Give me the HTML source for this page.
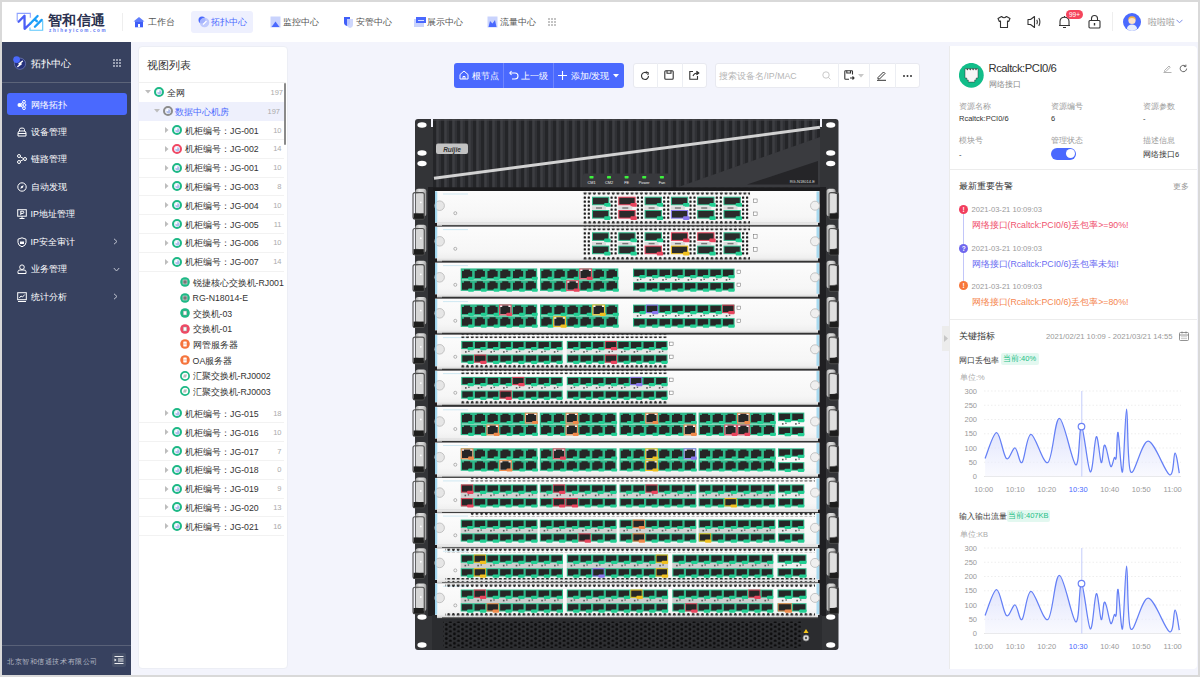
<!DOCTYPE html><html><head><meta charset="utf-8"><style>
*{margin:0;padding:0;box-sizing:border-box}
html,body{width:1200px;height:677px;overflow:hidden;background:#d9d9d9;font-family:"Liberation Sans",sans-serif;color:#333}
.a{position:absolute;white-space:nowrap}
#hdr{position:absolute;left:2px;top:2px;width:1196px;height:40px;background:#fff}
#side{position:absolute;left:2px;top:42px;width:129px;height:633px;background:#37415f}
#main{position:absolute;left:131px;top:42px;width:1067px;height:633px;background:#f3f4fc}
.nav{font-size:8.75px;color:#555;line-height:10px}
.sm{font-size:8.75px;color:#fff;line-height:10px}
.tr{font-size:8.75px;color:#333;line-height:10px}
.cnt{font-size:7.5px;color:#aaa;line-height:9px}
.lbl{font-size:7.5px;color:#999;line-height:9px}
.val{font-size:7.5px;color:#333;line-height:9px}
</style></head><body>
<div id="hdr"></div>
<svg class="a" style="left:14px;top:10px" width="32" height="24" viewBox="14 10 32 24">
<path d="M17.2 21.3V13.4H30.3V17.8" fill="none" stroke="#8ea2ff" stroke-width="1.1"/>
<path d="M30 27.4V30.2H42.7V20.6" fill="none" stroke="#5cc6fb" stroke-width="1.1"/>
<path d="M18.6 21.7L24.5 15.7L24.6 28.8L30.3 23.5" fill="none" stroke="#4b5ef6" stroke-width="2.3" stroke-linejoin="round" stroke-linecap="round"/>
<path d="M30.3 23.5L37.6 16M34.9 26.7L41.7 19.9M35.3 19.8L36.8 21.2" fill="none" stroke="#1c9ff8" stroke-width="2.3" stroke-linecap="round"/>
</svg>
<div class="a" style="left:47.5px;top:12.5px;font-size:14px;line-height:15px;font-weight:bold;color:#2b3250;letter-spacing:0.6px">智和信通</div>
<div class="a" style="left:49px;top:27.5px;font-size:4.6px;line-height:5px;color:#5b75f2;font-weight:bold;letter-spacing:1.6px">zhiheyicom.com</div>
<div class="a" style="left:121.5px;top:13px;width:1px;height:18px;background:#eee"></div>
<div class="a" style="left:191px;top:11px;width:62px;height:22px;background:#eef0fe;border-radius:3px"></div>
<div class="a nav" style="left:147.5px;top:21.8px;transform:translateY(-50%);color:#555">工作台</div>
<svg class="a" style="left:133px;top:16px" width="12" height="12" viewBox="0 0 12 12"><path d="M0.5 5.5L6 1L11.5 5.5Z" fill="#5f7dfb"/><rect x="2" y="5.3" width="8" height="6" fill="#3f5ef8"/><rect x="5" y="8" width="2" height="3.3" fill="#fff"/></svg>
<div class="a nav" style="left:210.5px;top:21.8px;transform:translateY(-50%);color:#4a69fe">拓扑中心</div>
<svg class="a" style="left:198px;top:16px" width="12" height="12" viewBox="0 0 12 12"><circle cx="4" cy="4" r="3.5" fill="#4a69fe"/><circle cx="6.5" cy="6.5" r="4.8" fill="#b7c3fd" opacity="0.85"/><path d="M5 8.5L8.5 5" stroke="#fff" stroke-width="1.2"/></svg>
<div class="a nav" style="left:283px;top:21.8px;transform:translateY(-50%);color:#555">监控中心</div>
<svg class="a" style="left:270px;top:16px" width="11" height="12" viewBox="0 0 11 12"><rect x="0.5" y="0.5" width="10" height="11" fill="#c9d3fd"/><path d="M1.5 11L5.5 5.5L9.5 11Z" fill="#4a69fe"/></svg>
<div class="a nav" style="left:355.5px;top:21.8px;transform:translateY(-50%);color:#555">安管中心</div>
<svg class="a" style="left:343px;top:16px" width="11" height="12" viewBox="0 0 11 12"><path d="M1 1H7V6.5Q7 9 4 10Q1 9 1 6.5Z" fill="#3f5ef8"/><path d="M4 3H10V8.5Q10 11 7 12Q4 11 4 8.5Z" fill="#c9d3fd" opacity="0.9"/></svg>
<div class="a nav" style="left:427px;top:21.8px;transform:translateY(-50%);color:#555">展示中心</div>
<svg class="a" style="left:414px;top:16px" width="12" height="12" viewBox="0 0 12 12"><rect x="0" y="3" width="10" height="8" fill="#c9d3fd"/><rect x="2" y="1" width="10" height="6" fill="#4a69fe"/><path d="M4 4.5H10" stroke="#fff" stroke-width="0.8"/></svg>
<div class="a nav" style="left:500px;top:21.8px;transform:translateY(-50%);color:#555">流量中心</div>
<svg class="a" style="left:487px;top:16px" width="11" height="12" viewBox="0 0 11 12"><rect x="0.5" y="0.5" width="10" height="11" fill="#c9d3fd"/><path d="M1.5 11L3 5L5.5 7.5L8 4L9.5 11Z" fill="#4a69fe"/></svg>
<svg class="a" style="left:548px;top:18px" width="8" height="8" viewBox="0 0 8 8" fill="#c4c4c4"><rect x="0" y="0" width="2" height="2"/><rect x="0" y="3" width="2" height="2"/><rect x="0" y="6" width="2" height="2"/><rect x="3" y="0" width="2" height="2"/><rect x="3" y="3" width="2" height="2"/><rect x="3" y="6" width="2" height="2"/><rect x="6" y="0" width="2" height="2"/><rect x="6" y="3" width="2" height="2"/><rect x="6" y="6" width="2" height="2"/></svg>
<svg class="a" style="left:997px;top:15px" width="14" height="14" viewBox="0 0 14 14" fill="none" stroke="#333" stroke-width="1.1" stroke-linejoin="round">
<path d="M4.5 1.5L1 3.5L2.3 6.5L3.5 6V12.5H10.5V6L11.7 6.5L13 3.5L9.5 1.5Q7 4 4.5 1.5Z"/></svg>
<svg class="a" style="left:1027px;top:15px" width="15" height="14" viewBox="0 0 15 14" fill="none" stroke="#333" stroke-width="1.1" stroke-linejoin="round">
<path d="M1 4.5H3.5L7.5 1.5V12.5L3.5 9.5H1Z"/><path d="M9.8 4.8Q11 7 9.8 9.2M11.8 3Q14 7 11.8 11"/></svg>
<svg class="a" style="left:1058px;top:15px" width="13" height="14" viewBox="0 0 13 14" fill="none" stroke="#333" stroke-width="1.1" stroke-linejoin="round">
<path d="M2 10.5V6.5Q2 2.2 6.5 2.2Q11 2.2 11 6.5V10.5H12M1 10.5H12M5 12.5H8"/><path d="M6.5 1V2.2"/></svg>
<div class="a" style="left:1066px;top:10px;width:17px;height:9px;border-radius:5px;background:#f5455c;color:#fff;font-size:6.5px;line-height:9px;text-align:center">99+</div>
<svg class="a" style="left:1088px;top:14px" width="13" height="15" viewBox="0 0 13 15" fill="none" stroke="#333" stroke-width="1.1">
<rect x="1" y="6.5" width="11" height="7.5" rx="1"/><path d="M3.5 6.5V4.5Q3.5 1.5 6.5 1.5Q9.5 1.5 9.5 4.5V6.5"/><path d="M6.5 9V11.5" stroke-width="1.4"/></svg>
<div class="a" style="left:1112px;top:12px;width:1px;height:19px;background:#eee"></div>
<svg class="a" style="left:1123px;top:13px" width="18" height="18" viewBox="0 0 18 18">
<circle cx="9" cy="9" r="9" fill="#4a69fe"/><circle cx="9" cy="7.5" r="3.6" fill="#fde3c8"/><path d="M5.2 7Q5 3.5 9 3.3Q13 3.5 12.8 7Q12 5 9 5Q6 5 5.2 7Z" fill="#f5b544"/>
<path d="M3.8 15.5Q5 11.5 9 11.5Q13 11.5 14.2 15.5Q12 18 9 18Q6 18 3.8 15.5Z" fill="#e8eefc"/></svg>
<div class="a nav" style="left:1148px;top:22px;transform:translateY(-50%);color:#999">啦啦啦</div>
<svg class="a" style="left:1176px;top:19px" width="7" height="5" viewBox="0 0 7 5"><path d="M0.5 0.8L3.5 3.8L6.5 0.8" fill="none" stroke="#7a8ce8" stroke-width="1"/></svg>
<div id="side"></div>
<svg class="a" style="left:13px;top:56px" width="14" height="14" viewBox="0 0 14 14">
<circle cx="7" cy="7.7" r="5.6" fill="#26317a" stroke="#6b77b3" stroke-width="0.8"/><circle cx="3.6" cy="3.6" r="3.4" fill="#4a69fe"/>
<path d="M9.4 5.2L6 7.9H8.2L4.8 10.5" fill="none" stroke="#fff" stroke-width="1.4" stroke-linejoin="round" stroke-linecap="round"/></svg>
<div class="a " style="left:30.5px;top:62.8px;transform:translateY(-50%);font-size:10px;color:#fff;line-height:11px">拓扑中心</div>
<svg class="a" style="left:112.5px;top:59px" width="8" height="8" viewBox="0 0 8 8" fill="#9aa0b2"><rect x="0" y="0" width="2" height="2"/><rect x="0" y="3" width="2" height="2"/><rect x="0" y="6" width="2" height="2"/><rect x="3" y="0" width="2" height="2"/><rect x="3" y="3" width="2" height="2"/><rect x="3" y="6" width="2" height="2"/><rect x="6" y="0" width="2" height="2"/><rect x="6" y="3" width="2" height="2"/><rect x="6" y="6" width="2" height="2"/></svg>
<div class="a" style="left:2px;top:82px;width:129px;height:1px;background:#5c6479"></div>
<div class="a" style="left:7px;top:93px;width:119.5px;height:22px;background:#4a69fe;border-radius:3px"></div>
<div class="a sm" style="left:30.5px;top:104.5px;transform:translateY(-50%);">网络拓扑</div>
<svg class="a" style="left:16.5px;top:99.5px" width="10" height="10" viewBox="0 0 10 10"><circle cx="2.5" cy="5" r="2" fill="#fff"/><circle cx="7" cy="1.8" r="1.4" fill="none" stroke="#fff" stroke-width="1"/><circle cx="7.5" cy="5" r="1.4" fill="none" stroke="#fff" stroke-width="1"/><circle cx="7" cy="8.2" r="1.4" fill="none" stroke="#fff" stroke-width="1"/><path d="M3 5H6M3.5 4L6 2.5M3.5 6L6 7.5" fill="none" stroke="#fff" stroke-width="1"/></svg>
<div class="a sm" style="left:30.5px;top:131.5px;transform:translateY(-50%);">设备管理</div>
<svg class="a" style="left:16.5px;top:126.5px" width="10" height="10" viewBox="0 0 10 10"><path d="M1 9V6Q1 4 3 4H7Q9 4 9 6V9Z" fill="none" stroke="#fff" stroke-width="1"/><path d="M2.5 4V2.5Q2.5 1 5 1Q7.5 1 7.5 2.5V4" fill="none" stroke="#fff" stroke-width="1"/><path d="M1 6.5H9" fill="none" stroke="#fff" stroke-width="1"/></svg>
<div class="a sm" style="left:30.5px;top:159px;transform:translateY(-50%);">链路管理</div>
<svg class="a" style="left:16.5px;top:154px" width="10" height="10" viewBox="0 0 10 10"><circle cx="2" cy="2" r="1.5" fill="none" stroke="#fff" stroke-width="1"/><circle cx="2" cy="8" r="1.5" fill="none" stroke="#fff" stroke-width="1"/><circle cx="8" cy="5" r="1.5" fill="none" stroke="#fff" stroke-width="1"/><path d="M3.2 2.8L6.6 4.5M3.2 7.2L6.6 5.5" fill="none" stroke="#fff" stroke-width="1"/></svg>
<div class="a sm" style="left:30.5px;top:186.5px;transform:translateY(-50%);">自动发现</div>
<svg class="a" style="left:16.5px;top:181.5px" width="10" height="10" viewBox="0 0 10 10"><circle cx="5" cy="5" r="4.2" fill="none" stroke="#fff" stroke-width="1"/><path d="M3.3 6.7L4.2 4.2L6.7 3.3L5.8 5.8Z" fill="#fff"/></svg>
<div class="a sm" style="left:30.5px;top:214px;transform:translateY(-50%);">IP地址管理</div>
<svg class="a" style="left:16.5px;top:209px" width="10" height="10" viewBox="0 0 10 10"><rect x="0.7" y="0.7" width="8.6" height="6.5" fill="none" stroke="#fff" stroke-width="1"/><path d="M5 7.2V9.5M2.5 9.5H7.5" fill="none" stroke="#fff" stroke-width="1"/><path d="M3.8 2.2H6Q6.8 2.2 6.8 3.3Q6.8 4.4 6 4.4H3.8M3.8 2V6" fill="none" stroke="#fff" stroke-width="1"/></svg>
<div class="a sm" style="left:30.5px;top:241.5px;transform:translateY(-50%);">IP安全审计</div>
<svg class="a" style="left:16.5px;top:236.5px" width="10" height="10" viewBox="0 0 10 10"><path d="M5 0.8L9 2.2V5.5Q9 8.5 5 9.8Q1 8.5 1 5.5V2.2Z" fill="none" stroke="#fff" stroke-width="1"/><path d="M3 4.5H7V7H3Z" fill="#fff"/></svg>
<div class="a sm" style="left:30.5px;top:269px;transform:translateY(-50%);">业务管理</div>
<svg class="a" style="left:16.5px;top:264px" width="10" height="10" viewBox="0 0 10 10"><circle cx="5" cy="3.2" r="2.3" fill="none" stroke="#fff" stroke-width="1"/><path d="M1 9.5V7.5Q1 6 3 6H7Q9 6 9 7.5V9.5Z" fill="none" stroke="#fff" stroke-width="1"/></svg>
<div class="a sm" style="left:30.5px;top:296.5px;transform:translateY(-50%);">统计分析</div>
<svg class="a" style="left:16.5px;top:291.5px" width="10" height="10" viewBox="0 0 10 10"><rect x="0.7" y="0.7" width="8.6" height="7" fill="none" stroke="#fff" stroke-width="1"/><path d="M2.3 6L4 4L5.5 5L7.8 2.5M1 9.5H9" fill="none" stroke="#fff" stroke-width="1"/></svg>
<svg class="a" style="left:113px;top:238.0px" width="5" height="7" viewBox="0 0 5 7"><path d="M1 0.8L4 3.5L1 6.2" fill="none" stroke="#c0c4d0" stroke-width="1"/></svg>
<svg class="a" style="left:113px;top:293.0px" width="5" height="7" viewBox="0 0 5 7"><path d="M1 0.8L4 3.5L1 6.2" fill="none" stroke="#c0c4d0" stroke-width="1"/></svg>
<svg class="a" style="left:112.5px;top:267px" width="7" height="5" viewBox="0 0 7 5"><path d="M0.8 1L3.5 4L6.2 1" fill="none" stroke="#c0c4d0" stroke-width="1"/></svg>
<div class="a" style="left:2px;top:644.5px;width:129px;height:1.5px;background:#596178"></div>
<div class="a " style="left:7px;top:660.5px;transform:translateY(-50%);font-size:7px;letter-spacing:0.57px;color:#b4b8c4;line-height:9px">北京智和信通技术有限公司</div>
<div class="a" style="left:112px;top:653px;width:14px;height:14px;background:#465069;border-radius:2px"></div>
<svg class="a" style="left:114px;top:656px" width="10" height="8" viewBox="0 0 10 8"><path d="M0.5 0.5H9.5M4 3H9.5M4 5H9.5M0.5 7.5H9.5" stroke="#fff" stroke-width="0.9"/><path d="M0.5 2.5L2.5 4L0.5 5.5Z" fill="#fff"/></svg>
<div id="main"></div>
<div class="a" style="left:137.5px;top:46px;width:150px;height:623px;background:#fff;border-radius:4px;border:1px solid #eceef5"></div>
<div class="a " style="left:147px;top:65px;transform:translateY(-50%);font-size:11px;color:#333;line-height:12px">视图列表</div>
<div class="a" style="left:138px;top:82px;width:148px;height:1px;background:#f0f0f0"></div>
<div class="a" style="left:138px;top:101.5px;width:146px;height:19px;background:#eef0fc"></div>
<div class="a" style="left:284.3px;top:83px;width:2px;height:62px;background:#8a8a8a;border-radius:1px"></div>
<svg class="a" style="left:145px;top:90px" width="6" height="4" viewBox="0 0 6 4"><path d="M0 0H6L3 3.5Z" fill="#bdbdbd"/></svg>
<svg class="a" style="left:153.6px;top:87px" width="10" height="10" viewBox="0 0 10 10"><circle cx="5" cy="5" r="3.95" fill="#fff" stroke="#1db885" stroke-width="2.1"/><circle cx="5" cy="5" r="2.6" fill="#dfe5fa"/><circle cx="5.6" cy="5.5" r="1.9" fill="#aebcec"/><circle cx="4.3" cy="4.2" r="1.1" fill="#fff"/></svg>
<div class="a tr" style="left:166.5px;top:92.6px;transform:translateY(-50%);">全网</div>
<div class="a cnt" style="right:917px;top:87.5px">197</div>
<svg class="a" style="left:154px;top:109px" width="6" height="4" viewBox="0 0 6 4"><path d="M0 0H6L3 3.5Z" fill="#bdbdbd"/></svg>
<svg class="a" style="left:162.6px;top:106px" width="10" height="10" viewBox="0 0 10 10"><circle cx="5" cy="5" r="3.95" fill="#fff" stroke="#8c8c8c" stroke-width="2.1"/><circle cx="5" cy="5" r="2.6" fill="#dfe5fa"/><circle cx="5.6" cy="5.5" r="1.9" fill="#aebcec"/><circle cx="4.3" cy="4.2" r="1.1" fill="#fff"/></svg>
<div class="a tr" style="left:175px;top:111.6px;transform:translateY(-50%);color:#4a69fe">数据中心机房</div>
<div class="a cnt" style="right:920px;top:106.5px">197</div>
<svg class="a" style="left:165px;top:127.0px" width="4" height="6" viewBox="0 0 4 6"><path d="M0 0V6L3.5 3Z" fill="#bdbdbd"/></svg>
<svg class="a" style="left:172.4px;top:125.0px" width="10" height="10" viewBox="0 0 10 10"><circle cx="5" cy="5" r="3.95" fill="#fff" stroke="#1db885" stroke-width="2.1"/><circle cx="5" cy="5" r="2.6" fill="#dfe5fa"/><circle cx="5.6" cy="5.5" r="1.9" fill="#aebcec"/><circle cx="4.3" cy="4.2" r="1.1" fill="#fff"/></svg>
<div class="a tr" style="left:185px;top:130.6px;transform:translateY(-50%);">机柜编号：JG-001</div>
<div class="a cnt" style="right:918.5px;top:125.5px">10</div>
<div class="a" style="left:138px;top:138.9px;width:146px;height:1px;background:#f2f2f2"></div>
<svg class="a" style="left:165px;top:145.8px" width="4" height="6" viewBox="0 0 4 6"><path d="M0 0V6L3.5 3Z" fill="#bdbdbd"/></svg>
<svg class="a" style="left:172.4px;top:143.8px" width="10" height="10" viewBox="0 0 10 10"><circle cx="5" cy="5" r="3.95" fill="#fff" stroke="#f04864" stroke-width="2.1"/><circle cx="5" cy="5" r="2.6" fill="#dfe5fa"/><circle cx="5.6" cy="5.5" r="1.9" fill="#aebcec"/><circle cx="4.3" cy="4.2" r="1.1" fill="#fff"/></svg>
<div class="a tr" style="left:185px;top:149.4px;transform:translateY(-50%);">机柜编号：JG-002</div>
<div class="a cnt" style="right:918.5px;top:144.3px">14</div>
<div class="a" style="left:138px;top:157.7px;width:146px;height:1px;background:#f2f2f2"></div>
<svg class="a" style="left:165px;top:164.6px" width="4" height="6" viewBox="0 0 4 6"><path d="M0 0V6L3.5 3Z" fill="#bdbdbd"/></svg>
<svg class="a" style="left:172.4px;top:162.6px" width="10" height="10" viewBox="0 0 10 10"><circle cx="5" cy="5" r="3.95" fill="#fff" stroke="#1db885" stroke-width="2.1"/><circle cx="5" cy="5" r="2.6" fill="#dfe5fa"/><circle cx="5.6" cy="5.5" r="1.9" fill="#aebcec"/><circle cx="4.3" cy="4.2" r="1.1" fill="#fff"/></svg>
<div class="a tr" style="left:185px;top:168.2px;transform:translateY(-50%);">机柜编号：JG-001</div>
<div class="a cnt" style="right:918.5px;top:163.1px">10</div>
<div class="a" style="left:138px;top:176.5px;width:146px;height:1px;background:#f2f2f2"></div>
<svg class="a" style="left:165px;top:183.4px" width="4" height="6" viewBox="0 0 4 6"><path d="M0 0V6L3.5 3Z" fill="#bdbdbd"/></svg>
<svg class="a" style="left:172.4px;top:181.4px" width="10" height="10" viewBox="0 0 10 10"><circle cx="5" cy="5" r="3.95" fill="#fff" stroke="#1db885" stroke-width="2.1"/><circle cx="5" cy="5" r="2.6" fill="#dfe5fa"/><circle cx="5.6" cy="5.5" r="1.9" fill="#aebcec"/><circle cx="4.3" cy="4.2" r="1.1" fill="#fff"/></svg>
<div class="a tr" style="left:185px;top:187.0px;transform:translateY(-50%);">机柜编号：JG-003</div>
<div class="a cnt" style="right:918.5px;top:181.9px">8</div>
<div class="a" style="left:138px;top:195.3px;width:146px;height:1px;background:#f2f2f2"></div>
<svg class="a" style="left:165px;top:202.20000000000002px" width="4" height="6" viewBox="0 0 4 6"><path d="M0 0V6L3.5 3Z" fill="#bdbdbd"/></svg>
<svg class="a" style="left:172.4px;top:200.20000000000002px" width="10" height="10" viewBox="0 0 10 10"><circle cx="5" cy="5" r="3.95" fill="#fff" stroke="#1db885" stroke-width="2.1"/><circle cx="5" cy="5" r="2.6" fill="#dfe5fa"/><circle cx="5.6" cy="5.5" r="1.9" fill="#aebcec"/><circle cx="4.3" cy="4.2" r="1.1" fill="#fff"/></svg>
<div class="a tr" style="left:185px;top:205.8px;transform:translateY(-50%);">机柜编号：JG-004</div>
<div class="a cnt" style="right:918.5px;top:200.70000000000002px">10</div>
<div class="a" style="left:138px;top:214.1px;width:146px;height:1px;background:#f2f2f2"></div>
<svg class="a" style="left:165px;top:221.0px" width="4" height="6" viewBox="0 0 4 6"><path d="M0 0V6L3.5 3Z" fill="#bdbdbd"/></svg>
<svg class="a" style="left:172.4px;top:219.0px" width="10" height="10" viewBox="0 0 10 10"><circle cx="5" cy="5" r="3.95" fill="#fff" stroke="#1db885" stroke-width="2.1"/><circle cx="5" cy="5" r="2.6" fill="#dfe5fa"/><circle cx="5.6" cy="5.5" r="1.9" fill="#aebcec"/><circle cx="4.3" cy="4.2" r="1.1" fill="#fff"/></svg>
<div class="a tr" style="left:185px;top:224.6px;transform:translateY(-50%);">机柜编号：JG-005</div>
<div class="a cnt" style="right:918.5px;top:219.5px">11</div>
<div class="a" style="left:138px;top:232.9px;width:146px;height:1px;background:#f2f2f2"></div>
<svg class="a" style="left:165px;top:239.8px" width="4" height="6" viewBox="0 0 4 6"><path d="M0 0V6L3.5 3Z" fill="#bdbdbd"/></svg>
<svg class="a" style="left:172.4px;top:237.8px" width="10" height="10" viewBox="0 0 10 10"><circle cx="5" cy="5" r="3.95" fill="#fff" stroke="#1db885" stroke-width="2.1"/><circle cx="5" cy="5" r="2.6" fill="#dfe5fa"/><circle cx="5.6" cy="5.5" r="1.9" fill="#aebcec"/><circle cx="4.3" cy="4.2" r="1.1" fill="#fff"/></svg>
<div class="a tr" style="left:185px;top:243.4px;transform:translateY(-50%);">机柜编号：JG-006</div>
<div class="a cnt" style="right:918.5px;top:238.3px">10</div>
<div class="a" style="left:138px;top:251.7px;width:146px;height:1px;background:#f2f2f2"></div>
<svg class="a" style="left:165px;top:258.59999999999997px" width="4" height="6" viewBox="0 0 4 6"><path d="M0 0V6L3.5 3Z" fill="#bdbdbd"/></svg>
<svg class="a" style="left:172.4px;top:256.59999999999997px" width="10" height="10" viewBox="0 0 10 10"><circle cx="5" cy="5" r="3.95" fill="#fff" stroke="#1db885" stroke-width="2.1"/><circle cx="5" cy="5" r="2.6" fill="#dfe5fa"/><circle cx="5.6" cy="5.5" r="1.9" fill="#aebcec"/><circle cx="4.3" cy="4.2" r="1.1" fill="#fff"/></svg>
<div class="a tr" style="left:185px;top:262.2px;transform:translateY(-50%);">机柜编号：JG-007</div>
<div class="a cnt" style="right:918.5px;top:257.09999999999997px">14</div>
<div class="a" style="left:138px;top:270.5px;width:146px;height:1px;background:#f2f2f2"></div>
<svg class="a" style="left:179.6px;top:277.0px" width="10" height="10" viewBox="0 0 10 10"><circle cx="5" cy="5" r="4.8" fill="#1db885"/><rect x="3" y="3" width="4" height="4" fill="#777" stroke="#ddd" stroke-width="0.6"/></svg>
<div class="a tr" style="left:192.6px;top:282.5px;transform:translateY(-50%);">锐捷核心交换机-RJ001</div>
<svg class="a" style="left:179.6px;top:292.6px" width="10" height="10" viewBox="0 0 10 10"><circle cx="5" cy="5" r="4.8" fill="#1db885"/><rect x="3" y="3" width="4" height="4" fill="#777" stroke="#ddd" stroke-width="0.6"/></svg>
<div class="a tr" style="left:192.6px;top:298.1px;transform:translateY(-50%);">RG-N18014-E</div>
<svg class="a" style="left:179.6px;top:308.2px" width="10" height="10" viewBox="0 0 10 10"><circle cx="5" cy="5" r="4.8" fill="#1db885"/><rect x="3.2" y="3" width="3.6" height="4" fill="#fff" stroke="#999" stroke-width="0.5"/></svg>
<div class="a tr" style="left:192.6px;top:313.7px;transform:translateY(-50%);">交换机-03</div>
<svg class="a" style="left:179.6px;top:323.8px" width="10" height="10" viewBox="0 0 10 10"><circle cx="5" cy="5" r="4.8" fill="#f04864"/><rect x="3.2" y="3" width="3.6" height="4" fill="#fff" stroke="#999" stroke-width="0.5"/></svg>
<div class="a tr" style="left:192.6px;top:329.3px;transform:translateY(-50%);">交换机-01</div>
<svg class="a" style="left:179.6px;top:339.4px" width="10" height="10" viewBox="0 0 10 10"><circle cx="5" cy="5" r="4.8" fill="#f5743c"/><rect x="3.3" y="2.6" width="3.4" height="4.8" fill="#fff" rx="0.5"/><path d="M3.5 5H6.5" stroke="#f5743c" stroke-width="0.5"/></svg>
<div class="a tr" style="left:192.6px;top:344.9px;transform:translateY(-50%);">网管服务器</div>
<svg class="a" style="left:179.6px;top:355.0px" width="10" height="10" viewBox="0 0 10 10"><circle cx="5" cy="5" r="4.8" fill="#f5743c"/><rect x="3.3" y="2.6" width="3.4" height="4.8" fill="#fff" rx="0.5"/><path d="M3.5 5H6.5" stroke="#f5743c" stroke-width="0.5"/></svg>
<div class="a tr" style="left:192.6px;top:360.5px;transform:translateY(-50%);">OA服务器</div>
<svg class="a" style="left:179.6px;top:370.6px" width="10" height="10" viewBox="0 0 10 10"><circle cx="5" cy="5" r="4.1" fill="#fff" stroke="#1db885" stroke-width="1.7"/><path d="M3 6.5L4 3.5H7L6 6.5Z" fill="#bbb"/></svg>
<div class="a tr" style="left:192.6px;top:376.1px;transform:translateY(-50%);">汇聚交换机-RJ0002</div>
<svg class="a" style="left:179.6px;top:386.2px" width="10" height="10" viewBox="0 0 10 10"><circle cx="5" cy="5" r="4.1" fill="#fff" stroke="#1db885" stroke-width="1.7"/><path d="M3 6.5L4 3.5H7L6 6.5Z" fill="#bbb"/></svg>
<div class="a tr" style="left:192.6px;top:391.7px;transform:translateY(-50%);">汇聚交换机-RJ0003</div>
<svg class="a" style="left:165px;top:410.4px" width="4" height="6" viewBox="0 0 4 6"><path d="M0 0V6L3.5 3Z" fill="#bdbdbd"/></svg>
<svg class="a" style="left:172.4px;top:408.4px" width="10" height="10" viewBox="0 0 10 10"><circle cx="5" cy="5" r="3.95" fill="#fff" stroke="#1db885" stroke-width="2.1"/><circle cx="5" cy="5" r="2.6" fill="#dfe5fa"/><circle cx="5.6" cy="5.5" r="1.9" fill="#aebcec"/><circle cx="4.3" cy="4.2" r="1.1" fill="#fff"/></svg>
<div class="a tr" style="left:185px;top:414.0px;transform:translateY(-50%);">机柜编号：JG-015</div>
<div class="a cnt" style="right:918.5px;top:408.9px">18</div>
<div class="a" style="left:138px;top:422.3px;width:146px;height:1px;background:#f2f2f2"></div>
<svg class="a" style="left:165px;top:429.2px" width="4" height="6" viewBox="0 0 4 6"><path d="M0 0V6L3.5 3Z" fill="#bdbdbd"/></svg>
<svg class="a" style="left:172.4px;top:427.2px" width="10" height="10" viewBox="0 0 10 10"><circle cx="5" cy="5" r="3.95" fill="#fff" stroke="#1db885" stroke-width="2.1"/><circle cx="5" cy="5" r="2.6" fill="#dfe5fa"/><circle cx="5.6" cy="5.5" r="1.9" fill="#aebcec"/><circle cx="4.3" cy="4.2" r="1.1" fill="#fff"/></svg>
<div class="a tr" style="left:185px;top:432.8px;transform:translateY(-50%);">机柜编号：JG-016</div>
<div class="a cnt" style="right:918.5px;top:427.7px">10</div>
<div class="a" style="left:138px;top:441.1px;width:146px;height:1px;background:#f2f2f2"></div>
<svg class="a" style="left:165px;top:448.0px" width="4" height="6" viewBox="0 0 4 6"><path d="M0 0V6L3.5 3Z" fill="#bdbdbd"/></svg>
<svg class="a" style="left:172.4px;top:446.0px" width="10" height="10" viewBox="0 0 10 10"><circle cx="5" cy="5" r="3.95" fill="#fff" stroke="#1db885" stroke-width="2.1"/><circle cx="5" cy="5" r="2.6" fill="#dfe5fa"/><circle cx="5.6" cy="5.5" r="1.9" fill="#aebcec"/><circle cx="4.3" cy="4.2" r="1.1" fill="#fff"/></svg>
<div class="a tr" style="left:185px;top:451.6px;transform:translateY(-50%);">机柜编号：JG-017</div>
<div class="a cnt" style="right:918.5px;top:446.5px">7</div>
<div class="a" style="left:138px;top:459.9px;width:146px;height:1px;background:#f2f2f2"></div>
<svg class="a" style="left:165px;top:466.79999999999995px" width="4" height="6" viewBox="0 0 4 6"><path d="M0 0V6L3.5 3Z" fill="#bdbdbd"/></svg>
<svg class="a" style="left:172.4px;top:464.79999999999995px" width="10" height="10" viewBox="0 0 10 10"><circle cx="5" cy="5" r="3.95" fill="#fff" stroke="#1db885" stroke-width="2.1"/><circle cx="5" cy="5" r="2.6" fill="#dfe5fa"/><circle cx="5.6" cy="5.5" r="1.9" fill="#aebcec"/><circle cx="4.3" cy="4.2" r="1.1" fill="#fff"/></svg>
<div class="a tr" style="left:185px;top:470.4px;transform:translateY(-50%);">机柜编号：JG-018</div>
<div class="a cnt" style="right:918.5px;top:465.29999999999995px">0</div>
<div class="a" style="left:138px;top:478.7px;width:146px;height:1px;background:#f2f2f2"></div>
<svg class="a" style="left:165px;top:485.59999999999997px" width="4" height="6" viewBox="0 0 4 6"><path d="M0 0V6L3.5 3Z" fill="#bdbdbd"/></svg>
<svg class="a" style="left:172.4px;top:483.59999999999997px" width="10" height="10" viewBox="0 0 10 10"><circle cx="5" cy="5" r="3.95" fill="#fff" stroke="#1db885" stroke-width="2.1"/><circle cx="5" cy="5" r="2.6" fill="#dfe5fa"/><circle cx="5.6" cy="5.5" r="1.9" fill="#aebcec"/><circle cx="4.3" cy="4.2" r="1.1" fill="#fff"/></svg>
<div class="a tr" style="left:185px;top:489.2px;transform:translateY(-50%);">机柜编号：JG-019</div>
<div class="a cnt" style="right:918.5px;top:484.09999999999997px">9</div>
<div class="a" style="left:138px;top:497.5px;width:146px;height:1px;background:#f2f2f2"></div>
<svg class="a" style="left:165px;top:504.4px" width="4" height="6" viewBox="0 0 4 6"><path d="M0 0V6L3.5 3Z" fill="#bdbdbd"/></svg>
<svg class="a" style="left:172.4px;top:502.4px" width="10" height="10" viewBox="0 0 10 10"><circle cx="5" cy="5" r="3.95" fill="#fff" stroke="#1db885" stroke-width="2.1"/><circle cx="5" cy="5" r="2.6" fill="#dfe5fa"/><circle cx="5.6" cy="5.5" r="1.9" fill="#aebcec"/><circle cx="4.3" cy="4.2" r="1.1" fill="#fff"/></svg>
<div class="a tr" style="left:185px;top:508.0px;transform:translateY(-50%);">机柜编号：JG-020</div>
<div class="a cnt" style="right:918.5px;top:502.9px">13</div>
<div class="a" style="left:138px;top:516.3px;width:146px;height:1px;background:#f2f2f2"></div>
<svg class="a" style="left:165px;top:523.1999999999999px" width="4" height="6" viewBox="0 0 4 6"><path d="M0 0V6L3.5 3Z" fill="#bdbdbd"/></svg>
<svg class="a" style="left:172.4px;top:521.1999999999999px" width="10" height="10" viewBox="0 0 10 10"><circle cx="5" cy="5" r="3.95" fill="#fff" stroke="#1db885" stroke-width="2.1"/><circle cx="5" cy="5" r="2.6" fill="#dfe5fa"/><circle cx="5.6" cy="5.5" r="1.9" fill="#aebcec"/><circle cx="4.3" cy="4.2" r="1.1" fill="#fff"/></svg>
<div class="a tr" style="left:185px;top:526.8px;transform:translateY(-50%);">机柜编号：JG-021</div>
<div class="a cnt" style="right:918.5px;top:521.6999999999999px">16</div>
<div class="a" style="left:138px;top:535.1px;width:146px;height:1px;background:#f2f2f2"></div>
<div class="a" style="left:454px;top:63px;width:170px;height:25px;background:#4a69fe;border-radius:3px"></div>
<div class="a" style="left:503px;top:63px;width:1px;height:25px;background:#6f86fd"></div>
<div class="a" style="left:552.5px;top:63px;width:1px;height:25px;background:#6f86fd"></div>
<svg class="a" style="left:459px;top:70px" width="10" height="10" viewBox="0 0 10 10" fill="none" stroke="#fff" stroke-width="1"><path d="M1 4.5L5 1L9 4.5V9H1Z"/><path d="M4 9V6.5H6V9"/></svg>
<div class="a sm" style="left:472px;top:75.5px;transform:translateY(-50%);">根节点</div>
<svg class="a" style="left:508.5px;top:70px" width="10" height="10" viewBox="0 0 10 10" fill="none" stroke="#fff" stroke-width="1.1"><path d="M2.5 1L0.8 3L2.5 5"/><path d="M1 3H6Q9 3 9 6Q9 9 6 9H3"/></svg>
<div class="a sm" style="left:521px;top:75.5px;transform:translateY(-50%);">上一级</div>
<svg class="a" style="left:558px;top:70.5px" width="9" height="9" viewBox="0 0 9 9" fill="none" stroke="#fff" stroke-width="1.1"><path d="M4.5 0V9M0 4.5H9"/></svg>
<div class="a sm" style="left:571px;top:75.5px;transform:translateY(-50%);">添加/发现</div>
<svg class="a" style="left:612.5px;top:73.5px" width="6" height="4" viewBox="0 0 6 4"><path d="M0 0H6L3 3.5Z" fill="#fff"/></svg>
<div class="a" style="left:632.5px;top:63px;width:74px;height:25px;background:#fff;border:1px solid #e8e9f0;border-radius:3px"></div>
<div class="a" style="left:656.5px;top:63px;width:1px;height:25px;background:#eceef3"></div>
<div class="a" style="left:681.5px;top:63px;width:1px;height:25px;background:#eceef3"></div>
<svg class="a" style="left:639.5px;top:70.5px" width="10" height="10" viewBox="0 0 10 10" fill="none" stroke="#333" stroke-width="1.1"><path d="M8.5 5A3.5 3.5 0 1 1 7.2 2.2"/><path d="M6 0.8L8.3 1.8L7.8 4.2" /></svg>
<svg class="a" style="left:664px;top:70px" width="10" height="10" viewBox="0 0 10 10" fill="none" stroke="#333" stroke-width="1.1"><rect x="0.8" y="0.8" width="8.4" height="8.4" rx="1"/><path d="M3 0.8V3.2H7V0.8"/></svg>
<svg class="a" style="left:688.5px;top:70px" width="11" height="10" viewBox="0 0 11 10" fill="none" stroke="#333" stroke-width="1.1"><path d="M8.5 6V9.2H0.8V1.5H4"/><path d="M4 6Q5 3 9 3" /><path d="M7.5 1.2L9.8 3L7.5 4.8" fill="#333"/></svg>
<div class="a" style="left:714.5px;top:63px;width:205px;height:25px;background:#fff;border:1px solid #e8e9f0;border-radius:3px"></div>
<div class="a" style="left:838px;top:63px;width:1px;height:25px;background:#eceef3"></div>
<div class="a" style="left:868.5px;top:63px;width:1px;height:25px;background:#eceef3"></div>
<div class="a" style="left:894.5px;top:63px;width:1px;height:25px;background:#eceef3"></div>
<div class="a " style="left:719px;top:75.5px;transform:translateY(-50%);font-size:8.75px;color:#b5b5b5;line-height:10px">搜索设备名/IP/MAC</div>
<svg class="a" style="left:822px;top:70.5px" width="9" height="9" viewBox="0 0 9 9" fill="none" stroke="#c4c4c4" stroke-width="0.9"><circle cx="4" cy="4" r="3.2"/><path d="M6.3 6.3L8.5 8.5"/></svg>
<svg class="a" style="left:844px;top:70px" width="11" height="11" viewBox="0 0 11 11" fill="none" stroke="#333" stroke-width="1.1"><path d="M8.5 4.5V1.5Q8.5 0.8 7.8 0.8H1.5Q0.8 0.8 0.8 1.5V8.5Q0.8 9.2 1.5 9.2H5"/><path d="M2.8 0.8V3H6.5V0.8"/><path d="M6 8H10M8.5 6.5L10 8L8.5 9.5"/></svg>
<svg class="a" style="left:858px;top:74px" width="6" height="4" viewBox="0 0 6 4"><path d="M0 0H6L3 3.5Z" fill="#c8c8c8"/></svg>
<svg class="a" style="left:876px;top:70px" width="11" height="11" viewBox="0 0 11 11" fill="none" stroke="#333" stroke-width="1"><path d="M2 7.5L7.5 2L9 3.5L3.5 9H2Z"/><path d="M1 10.3H10"/></svg>
<svg class="a" style="left:902.5px;top:74.5px" width="9" height="2" viewBox="0 0 9 2" fill="#333"><circle cx="1" cy="1" r="1"/><circle cx="4.5" cy="1" r="1"/><circle cx="8" cy="1" r="1"/></svg>
<svg class="a" style="left:400px;top:110px" width="450" height="550" viewBox="400 110 450 550">
<defs>
<pattern id="ridge" x="433" y="0" width="8" height="10" patternUnits="userSpaceOnUse"><rect width="8" height="10" fill="#303135"/><rect x="0" width="3" height="10" fill="#242528"/><rect x="3.5" width="2.2" height="10" fill="#3d3e42"/></pattern>
<pattern id="perf2" x="0" y="0" width="4.7" height="4" patternUnits="userSpaceOnUse"><path d="M0.6 0.6H3.8Q3.6 3.2 2.2 3.2Q0.8 3.2 0.6 0.6Z" fill="#2a2a2a"/></pattern>
<pattern id="perf3" x="0" y="0" width="4.7" height="4" patternUnits="userSpaceOnUse"><path d="M0.6 3.4H3.8Q3.6 0.8 2.2 0.8Q0.8 0.8 0.6 3.4Z" fill="#2a2a2a"/></pattern>
<pattern id="hex" x="444.8" y="623" width="8.12" height="4.68" patternUnits="userSpaceOnUse"><rect width="8.12" height="4.68" fill="#2e2f32"/><circle cx="1.5" cy="1.5" r="1.5" fill="#0c0c0d"/><circle cx="5.56" cy="3.84" r="1.5" fill="#0c0c0d"/></pattern>
<linearGradient id="card" x1="0" y1="0" x2="0" y2="1"><stop offset="0" stop-color="#fcfcfc"/><stop offset="0.8" stop-color="#f6f6f6"/><stop offset="1" stop-color="#efefef"/></linearGradient>
<linearGradient id="lip" x1="0" y1="0" x2="0" y2="1"><stop offset="0" stop-color="#f0f0f0"/><stop offset="0.6" stop-color="#dedede"/><stop offset="1" stop-color="#b5b5b5"/></linearGradient>
<linearGradient id="hdl" x1="0" y1="0" x2="1" y2="0"><stop offset="0" stop-color="#a8a8a8"/><stop offset="0.35" stop-color="#dedede"/><stop offset="0.7" stop-color="#d0d0d0"/><stop offset="1" stop-color="#9a9a9a"/></linearGradient>
<linearGradient id="blue" x1="0" y1="0" x2="1" y2="0"><stop offset="0" stop-color="#8fd0ec"/><stop offset="1" stop-color="#d8eef8"/></linearGradient>
</defs>
<rect x="415" y="119" width="423.5" height="531" rx="3" fill="#333437"/>
<rect x="428" y="187" width="398" height="429" fill="#1f1f22"/>
<rect x="431" y="119" width="2" height="8" fill="#f3f4fc"/>
<rect x="820" y="119" width="2" height="8" fill="#f3f4fc"/>
<ellipse cx="422" cy="125" rx="4.6" ry="2.7" fill="#fff"/>
<ellipse cx="422" cy="153" rx="4.6" ry="2.7" fill="#fff"/>
<ellipse cx="422" cy="163.5" rx="4.6" ry="2.7" fill="#fff"/>
<ellipse cx="422" cy="617" rx="4.6" ry="2.7" fill="#fff"/>
<ellipse cx="422" cy="645" rx="4.6" ry="2.7" fill="#fff"/>
<ellipse cx="830.7" cy="125" rx="4.6" ry="2.7" fill="#fff"/>
<ellipse cx="830.7" cy="153" rx="4.6" ry="2.7" fill="#fff"/>
<ellipse cx="830.7" cy="163.5" rx="4.6" ry="2.7" fill="#fff"/>
<ellipse cx="830.7" cy="617" rx="4.6" ry="2.7" fill="#fff"/>
<ellipse cx="830.7" cy="645" rx="4.6" ry="2.7" fill="#fff"/>
<rect x="433" y="119.5" width="387" height="68" fill="url(#ridge)"/>
<rect x="433" y="119.5" width="387" height="1" fill="#46474b"/>
<path d="M677 187.5L820 137L820 187.5Z" fill="#3a3b3f"/>
<path d="M747 184.5L818 161L818 184.5Z" fill="#252528"/>
<text x="815" y="182.5" font-size="4" fill="#ddd" text-anchor="end" font-family="Liberation Sans">RG-N18014-E</text>
<path d="M434 178.3L820 127.3" stroke="#d2d2d2" stroke-width="3.1"/>
<rect x="436" y="143.5" width="32" height="10.5" rx="2" fill="#c2c2c2"/>
<text x="452" y="151.5" font-size="6.5" fill="#333" text-anchor="middle" font-style="italic" font-weight="bold" font-family="Liberation Sans">Ruijie</text>
<path d="M585 173.5H668Q670 173.5 670.2 175.5L671 187.5H582.5L583 175.5Q583.2 173.5 585 173.5Z" fill="#38393d"/>
<rect x="589.5" y="176" width="4" height="2.4" rx="0.6" fill="#3df23d"/>
<text x="591.5" y="183.6" font-size="3.8" fill="#eee" text-anchor="middle" font-family="Liberation Sans">CM1</text>
<rect x="607" y="176" width="4" height="2.4" rx="0.6" fill="#3df23d"/>
<text x="609" y="183.6" font-size="3.8" fill="#eee" text-anchor="middle" font-family="Liberation Sans">CM2</text>
<rect x="624.6" y="176" width="4" height="2.4" rx="0.6" fill="#3df23d"/>
<text x="626.6" y="183.6" font-size="3.8" fill="#eee" text-anchor="middle" font-family="Liberation Sans">FE</text>
<rect x="642.2" y="176" width="4" height="2.4" rx="0.6" fill="#3df23d"/>
<text x="644.2" y="183.6" font-size="3.8" fill="#eee" text-anchor="middle" font-family="Liberation Sans">Power</text>
<rect x="659.9" y="176" width="4" height="2.4" rx="0.6" fill="#3df23d"/>
<text x="661.9" y="183.6" font-size="3.8" fill="#eee" text-anchor="middle" font-family="Liberation Sans">Fan</text>
<rect x="433" y="187.5" width="387" height="3.5" fill="#1b1b1d"/>
<rect x="432" y="615" width="390" height="35" fill="#2b2c2f"/>
<rect x="443.3" y="621.5" width="358" height="26.5" fill="url(#hex)"/>
<circle cx="806" cy="638" r="3" fill="#ddd" stroke="#888" stroke-width="0.8"/><circle cx="806" cy="638" r="1.2" fill="#555"/>
<path d="M806 629L808.5 633H803.5Z" fill="#f5c518"/>
<rect x="415.6" y="188.8" width="10.7" height="27.5" rx="2.5" fill="url(#hdl)"/>
<rect x="413" y="192.60000000000002" width="11.3" height="26.5" rx="2" fill="none" stroke="#4e4e4e" stroke-width="1.1"/>
<rect x="416" y="194.0" width="7" height="18.5" fill="#d6d6d6"/>
<rect x="413.6" y="213.3" width="10.2" height="5.4" fill="#1d1d1d"/>
<circle cx="420.8" cy="202.3" r="0.9" fill="#fff"/>
<rect x="826.6" y="188.8" width="9" height="27.5" rx="2.5" fill="url(#hdl)"/>
<rect x="829" y="192.60000000000002" width="9.5" height="26.5" rx="2" fill="none" stroke="#4e4e4e" stroke-width="1.1"/>
<rect x="830.8" y="194.0" width="6" height="18.5" fill="#e0e0e0"/>
<rect x="829.6" y="213.3" width="8.4" height="5.4" fill="#1d1d1d"/>
<rect x="435" y="191" width="384.5" height="31.8" fill="url(#card)"/>
<rect x="435" y="191.5" width="2.6" height="30.8" fill="url(#blue)"/>
<rect x="816.5" y="191.5" width="2.6" height="30.8" fill="#a8daf0"/>
<rect x="437" y="222.3" width="381" height="3.6" fill="url(#lip)"/>
<rect x="442" y="225.20000000000002" width="376" height="1.2" fill="#333"/>
<circle cx="439.6" cy="205.7" r="4.8" fill="#e6e6e6" stroke="#b8b8b8" stroke-width="0.8"/>
<circle cx="815" cy="205.7" r="4.5" fill="#efefef" stroke="#b8b8b8" stroke-width="0.8"/>
<rect x="435" y="191.5" width="1.6" height="30.8" fill="#9dd5ee"/>
<circle cx="455.3" cy="213.2" r="1.5" fill="none" stroke="#888" stroke-width="0.6"/>
<rect x="443" y="193.5" width="25" height="1" fill="#cfe8f2"/>
<rect x="582.5" y="191.3" width="168" height="31" fill="#f6f6f6"/>
<rect x="583" y="190.7" width="167" height="4" fill="url(#perf2)"/>
<rect x="583" y="220.8" width="167" height="4" fill="url(#perf3)"/>
<rect x="583.7" y="196.6" width="2.2" height="2.2" rx="0.5" fill="#1c1c1c"/>
<rect x="587.7" y="196.6" width="2.2" height="2.2" rx="0.5" fill="#1c1c1c"/>
<rect x="583.7" y="200.6" width="2.2" height="2.2" rx="0.5" fill="#1c1c1c"/>
<rect x="587.7" y="200.6" width="2.2" height="2.2" rx="0.5" fill="#1c1c1c"/>
<rect x="583.7" y="204.6" width="2.2" height="2.2" rx="0.5" fill="#1c1c1c"/>
<rect x="587.7" y="204.6" width="2.2" height="2.2" rx="0.5" fill="#1c1c1c"/>
<rect x="583.7" y="208.6" width="2.2" height="2.2" rx="0.5" fill="#1c1c1c"/>
<rect x="587.7" y="208.6" width="2.2" height="2.2" rx="0.5" fill="#1c1c1c"/>
<rect x="583.7" y="212.6" width="2.2" height="2.2" rx="0.5" fill="#1c1c1c"/>
<rect x="587.7" y="212.6" width="2.2" height="2.2" rx="0.5" fill="#1c1c1c"/>
<rect x="583.7" y="216.6" width="2.2" height="2.2" rx="0.5" fill="#1c1c1c"/>
<rect x="587.7" y="216.6" width="2.2" height="2.2" rx="0.5" fill="#1c1c1c"/>
<rect x="610.5" y="196.6" width="2.2" height="2.2" rx="0.5" fill="#1c1c1c"/>
<rect x="614.5" y="196.6" width="2.2" height="2.2" rx="0.5" fill="#1c1c1c"/>
<rect x="610.5" y="200.6" width="2.2" height="2.2" rx="0.5" fill="#1c1c1c"/>
<rect x="614.5" y="200.6" width="2.2" height="2.2" rx="0.5" fill="#1c1c1c"/>
<rect x="610.5" y="204.6" width="2.2" height="2.2" rx="0.5" fill="#1c1c1c"/>
<rect x="614.5" y="204.6" width="2.2" height="2.2" rx="0.5" fill="#1c1c1c"/>
<rect x="610.5" y="208.6" width="2.2" height="2.2" rx="0.5" fill="#1c1c1c"/>
<rect x="614.5" y="208.6" width="2.2" height="2.2" rx="0.5" fill="#1c1c1c"/>
<rect x="610.5" y="212.6" width="2.2" height="2.2" rx="0.5" fill="#1c1c1c"/>
<rect x="614.5" y="212.6" width="2.2" height="2.2" rx="0.5" fill="#1c1c1c"/>
<rect x="610.5" y="216.6" width="2.2" height="2.2" rx="0.5" fill="#1c1c1c"/>
<rect x="614.5" y="216.6" width="2.2" height="2.2" rx="0.5" fill="#1c1c1c"/>
<rect x="636.8" y="196.6" width="2.2" height="2.2" rx="0.5" fill="#1c1c1c"/>
<rect x="640.8" y="196.6" width="2.2" height="2.2" rx="0.5" fill="#1c1c1c"/>
<rect x="636.8" y="200.6" width="2.2" height="2.2" rx="0.5" fill="#1c1c1c"/>
<rect x="640.8" y="200.6" width="2.2" height="2.2" rx="0.5" fill="#1c1c1c"/>
<rect x="636.8" y="204.6" width="2.2" height="2.2" rx="0.5" fill="#1c1c1c"/>
<rect x="640.8" y="204.6" width="2.2" height="2.2" rx="0.5" fill="#1c1c1c"/>
<rect x="636.8" y="208.6" width="2.2" height="2.2" rx="0.5" fill="#1c1c1c"/>
<rect x="640.8" y="208.6" width="2.2" height="2.2" rx="0.5" fill="#1c1c1c"/>
<rect x="636.8" y="212.6" width="2.2" height="2.2" rx="0.5" fill="#1c1c1c"/>
<rect x="640.8" y="212.6" width="2.2" height="2.2" rx="0.5" fill="#1c1c1c"/>
<rect x="636.8" y="216.6" width="2.2" height="2.2" rx="0.5" fill="#1c1c1c"/>
<rect x="640.8" y="216.6" width="2.2" height="2.2" rx="0.5" fill="#1c1c1c"/>
<rect x="663.1" y="196.6" width="2.2" height="2.2" rx="0.5" fill="#1c1c1c"/>
<rect x="667.1" y="196.6" width="2.2" height="2.2" rx="0.5" fill="#1c1c1c"/>
<rect x="663.1" y="200.6" width="2.2" height="2.2" rx="0.5" fill="#1c1c1c"/>
<rect x="667.1" y="200.6" width="2.2" height="2.2" rx="0.5" fill="#1c1c1c"/>
<rect x="663.1" y="204.6" width="2.2" height="2.2" rx="0.5" fill="#1c1c1c"/>
<rect x="667.1" y="204.6" width="2.2" height="2.2" rx="0.5" fill="#1c1c1c"/>
<rect x="663.1" y="208.6" width="2.2" height="2.2" rx="0.5" fill="#1c1c1c"/>
<rect x="667.1" y="208.6" width="2.2" height="2.2" rx="0.5" fill="#1c1c1c"/>
<rect x="663.1" y="212.6" width="2.2" height="2.2" rx="0.5" fill="#1c1c1c"/>
<rect x="667.1" y="212.6" width="2.2" height="2.2" rx="0.5" fill="#1c1c1c"/>
<rect x="663.1" y="216.6" width="2.2" height="2.2" rx="0.5" fill="#1c1c1c"/>
<rect x="667.1" y="216.6" width="2.2" height="2.2" rx="0.5" fill="#1c1c1c"/>
<rect x="689.4" y="196.6" width="2.2" height="2.2" rx="0.5" fill="#1c1c1c"/>
<rect x="693.4" y="196.6" width="2.2" height="2.2" rx="0.5" fill="#1c1c1c"/>
<rect x="689.4" y="200.6" width="2.2" height="2.2" rx="0.5" fill="#1c1c1c"/>
<rect x="693.4" y="200.6" width="2.2" height="2.2" rx="0.5" fill="#1c1c1c"/>
<rect x="689.4" y="204.6" width="2.2" height="2.2" rx="0.5" fill="#1c1c1c"/>
<rect x="693.4" y="204.6" width="2.2" height="2.2" rx="0.5" fill="#1c1c1c"/>
<rect x="689.4" y="208.6" width="2.2" height="2.2" rx="0.5" fill="#1c1c1c"/>
<rect x="693.4" y="208.6" width="2.2" height="2.2" rx="0.5" fill="#1c1c1c"/>
<rect x="689.4" y="212.6" width="2.2" height="2.2" rx="0.5" fill="#1c1c1c"/>
<rect x="693.4" y="212.6" width="2.2" height="2.2" rx="0.5" fill="#1c1c1c"/>
<rect x="689.4" y="216.6" width="2.2" height="2.2" rx="0.5" fill="#1c1c1c"/>
<rect x="693.4" y="216.6" width="2.2" height="2.2" rx="0.5" fill="#1c1c1c"/>
<rect x="715.7" y="196.6" width="2.2" height="2.2" rx="0.5" fill="#1c1c1c"/>
<rect x="719.7" y="196.6" width="2.2" height="2.2" rx="0.5" fill="#1c1c1c"/>
<rect x="715.7" y="200.6" width="2.2" height="2.2" rx="0.5" fill="#1c1c1c"/>
<rect x="719.7" y="200.6" width="2.2" height="2.2" rx="0.5" fill="#1c1c1c"/>
<rect x="715.7" y="204.6" width="2.2" height="2.2" rx="0.5" fill="#1c1c1c"/>
<rect x="719.7" y="204.6" width="2.2" height="2.2" rx="0.5" fill="#1c1c1c"/>
<rect x="715.7" y="208.6" width="2.2" height="2.2" rx="0.5" fill="#1c1c1c"/>
<rect x="719.7" y="208.6" width="2.2" height="2.2" rx="0.5" fill="#1c1c1c"/>
<rect x="715.7" y="212.6" width="2.2" height="2.2" rx="0.5" fill="#1c1c1c"/>
<rect x="719.7" y="212.6" width="2.2" height="2.2" rx="0.5" fill="#1c1c1c"/>
<rect x="715.7" y="216.6" width="2.2" height="2.2" rx="0.5" fill="#1c1c1c"/>
<rect x="719.7" y="216.6" width="2.2" height="2.2" rx="0.5" fill="#1c1c1c"/>
<rect x="742.0" y="196.6" width="2.2" height="2.2" rx="0.5" fill="#1c1c1c"/>
<rect x="746.0" y="196.6" width="2.2" height="2.2" rx="0.5" fill="#1c1c1c"/>
<rect x="742.0" y="200.6" width="2.2" height="2.2" rx="0.5" fill="#1c1c1c"/>
<rect x="746.0" y="200.6" width="2.2" height="2.2" rx="0.5" fill="#1c1c1c"/>
<rect x="742.0" y="204.6" width="2.2" height="2.2" rx="0.5" fill="#1c1c1c"/>
<rect x="746.0" y="204.6" width="2.2" height="2.2" rx="0.5" fill="#1c1c1c"/>
<rect x="742.0" y="208.6" width="2.2" height="2.2" rx="0.5" fill="#1c1c1c"/>
<rect x="746.0" y="208.6" width="2.2" height="2.2" rx="0.5" fill="#1c1c1c"/>
<rect x="742.0" y="212.6" width="2.2" height="2.2" rx="0.5" fill="#1c1c1c"/>
<rect x="746.0" y="212.6" width="2.2" height="2.2" rx="0.5" fill="#1c1c1c"/>
<rect x="742.0" y="216.6" width="2.2" height="2.2" rx="0.5" fill="#1c1c1c"/>
<rect x="746.0" y="216.6" width="2.2" height="2.2" rx="0.5" fill="#1c1c1c"/>
<rect x="592.5" y="197.2" width="16.3" height="7.6" fill="#2b2b2b" stroke="#2fb98a" stroke-width="1"/>
<rect x="604.2" y="202.89999999999998" width="6.3" height="3.8" rx="0.8" fill="#22cf93"/>
<rect x="592.0" y="206.29999999999998" width="14" height="3.4" fill="#dcdcdc"/><rect x="596.0" y="207.29999999999998" width="6" height="1.4" fill="#777"/>
<rect x="618.8" y="197.2" width="16.3" height="7.6" fill="#2b2b2b" stroke="#e8455e" stroke-width="1"/>
<rect x="630.5" y="202.89999999999998" width="6.3" height="3.8" rx="0.8" fill="#e8455e"/>
<rect x="618.3" y="206.29999999999998" width="14" height="3.4" fill="#dcdcdc"/><rect x="622.3" y="207.29999999999998" width="6" height="1.4" fill="#777"/>
<rect x="645.1" y="197.2" width="16.3" height="7.6" fill="#2b2b2b" stroke="#2fb98a" stroke-width="1"/>
<rect x="656.8000000000001" y="202.89999999999998" width="6.3" height="3.8" rx="0.8" fill="#22cf93"/>
<rect x="644.6" y="206.29999999999998" width="14" height="3.4" fill="#dcdcdc"/><rect x="648.6" y="207.29999999999998" width="6" height="1.4" fill="#777"/>
<rect x="671.4" y="197.2" width="16.3" height="7.6" fill="#2b2b2b" stroke="#2fb98a" stroke-width="1"/>
<rect x="683.1" y="202.89999999999998" width="6.3" height="3.8" rx="0.8" fill="#22cf93"/>
<rect x="670.9" y="206.29999999999998" width="14" height="3.4" fill="#dcdcdc"/><rect x="674.9" y="207.29999999999998" width="6" height="1.4" fill="#777"/>
<rect x="697.7" y="197.2" width="16.3" height="7.6" fill="#2b2b2b" stroke="#2fb98a" stroke-width="1"/>
<rect x="709.4000000000001" y="202.89999999999998" width="6.3" height="3.8" rx="0.8" fill="#22cf93"/>
<rect x="697.2" y="206.29999999999998" width="14" height="3.4" fill="#dcdcdc"/><rect x="701.2" y="207.29999999999998" width="6" height="1.4" fill="#777"/>
<rect x="724.0" y="197.2" width="16.3" height="7.6" fill="#2b2b2b" stroke="#2fb98a" stroke-width="1"/>
<rect x="735.7" y="202.89999999999998" width="6.3" height="3.8" rx="0.8" fill="#22cf93"/>
<rect x="723.5" y="206.29999999999998" width="14" height="3.4" fill="#dcdcdc"/><rect x="727.5" y="207.29999999999998" width="6" height="1.4" fill="#777"/>
<rect x="592.5" y="210.5" width="16.3" height="7.6" fill="#2b2b2b" stroke="#2fb98a" stroke-width="1"/>
<rect x="604.2" y="216.2" width="6.3" height="3.8" rx="0.8" fill="#22cf93"/>
<rect x="618.8" y="210.5" width="16.3" height="7.6" fill="#2b2b2b" stroke="#e8455e" stroke-width="1"/>
<rect x="630.5" y="216.2" width="6.3" height="3.8" rx="0.8" fill="#e8455e"/>
<rect x="645.1" y="210.5" width="16.3" height="7.6" fill="#2b2b2b" stroke="#2fb98a" stroke-width="1"/>
<rect x="656.8000000000001" y="216.2" width="6.3" height="3.8" rx="0.8" fill="#22cf93"/>
<rect x="671.4" y="210.5" width="16.3" height="7.6" fill="#2b2b2b" stroke="#8878ee" stroke-width="1"/>
<rect x="683.1" y="216.2" width="6.3" height="3.8" rx="0.8" fill="#8878ee"/>
<rect x="697.7" y="210.5" width="16.3" height="7.6" fill="#2b2b2b" stroke="#2fb98a" stroke-width="1"/>
<rect x="709.4000000000001" y="216.2" width="6.3" height="3.8" rx="0.8" fill="#22cf93"/>
<rect x="724.0" y="210.5" width="16.3" height="7.6" fill="#2b2b2b" stroke="#2fb98a" stroke-width="1"/>
<rect x="735.7" y="216.2" width="6.3" height="3.8" rx="0.8" fill="#22cf93"/>
<rect x="753.5" y="199" width="3.6" height="3.6" fill="#fff" stroke="#666" stroke-width="0.5"/>
<rect x="753.5" y="212" width="3.6" height="3.6" fill="#fff" stroke="#666" stroke-width="0.5"/>
<rect x="415.6" y="224.62727272727273" width="10.7" height="27.5" rx="2.5" fill="url(#hdl)"/>
<rect x="413" y="228.42727272727274" width="11.3" height="26.5" rx="2" fill="none" stroke="#4e4e4e" stroke-width="1.1"/>
<rect x="416" y="229.8272727272727" width="7" height="18.5" fill="#d6d6d6"/>
<rect x="413.6" y="249.12727272727273" width="10.2" height="5.4" fill="#1d1d1d"/>
<circle cx="420.8" cy="238.12727272727273" r="0.9" fill="#fff"/>
<rect x="826.6" y="224.62727272727273" width="9" height="27.5" rx="2.5" fill="url(#hdl)"/>
<rect x="829" y="228.42727272727274" width="9.5" height="26.5" rx="2" fill="none" stroke="#4e4e4e" stroke-width="1.1"/>
<rect x="830.8" y="229.8272727272727" width="6" height="18.5" fill="#e0e0e0"/>
<rect x="829.6" y="249.12727272727273" width="8.4" height="5.4" fill="#1d1d1d"/>
<rect x="435" y="226.6" width="384.5" height="31.8" fill="url(#card)"/>
<rect x="435" y="227.1" width="2.6" height="30.8" fill="url(#blue)"/>
<rect x="816.5" y="227.1" width="2.6" height="30.8" fill="#a8daf0"/>
<rect x="437" y="257.9" width="381" height="3.6" fill="url(#lip)"/>
<rect x="442" y="260.79999999999995" width="376" height="1.2" fill="#333"/>
<circle cx="439.6" cy="241.29999999999998" r="4.8" fill="#e6e6e6" stroke="#b8b8b8" stroke-width="0.8"/>
<circle cx="815" cy="241.29999999999998" r="4.5" fill="#efefef" stroke="#b8b8b8" stroke-width="0.8"/>
<rect x="435" y="227.1" width="1.6" height="30.8" fill="#9dd5ee"/>
<circle cx="455.3" cy="248.79999999999998" r="1.5" fill="none" stroke="#888" stroke-width="0.6"/>
<rect x="443" y="229.1" width="25" height="1" fill="#cfe8f2"/>
<rect x="582.5" y="226.9" width="168" height="31" fill="#f6f6f6"/>
<rect x="583" y="226.29999999999998" width="167" height="4" fill="url(#perf2)"/>
<rect x="583" y="256.4" width="167" height="4" fill="url(#perf3)"/>
<rect x="583.7" y="232.2" width="2.2" height="2.2" rx="0.5" fill="#1c1c1c"/>
<rect x="587.7" y="232.2" width="2.2" height="2.2" rx="0.5" fill="#1c1c1c"/>
<rect x="583.7" y="236.2" width="2.2" height="2.2" rx="0.5" fill="#1c1c1c"/>
<rect x="587.7" y="236.2" width="2.2" height="2.2" rx="0.5" fill="#1c1c1c"/>
<rect x="583.7" y="240.2" width="2.2" height="2.2" rx="0.5" fill="#1c1c1c"/>
<rect x="587.7" y="240.2" width="2.2" height="2.2" rx="0.5" fill="#1c1c1c"/>
<rect x="583.7" y="244.2" width="2.2" height="2.2" rx="0.5" fill="#1c1c1c"/>
<rect x="587.7" y="244.2" width="2.2" height="2.2" rx="0.5" fill="#1c1c1c"/>
<rect x="583.7" y="248.2" width="2.2" height="2.2" rx="0.5" fill="#1c1c1c"/>
<rect x="587.7" y="248.2" width="2.2" height="2.2" rx="0.5" fill="#1c1c1c"/>
<rect x="583.7" y="252.2" width="2.2" height="2.2" rx="0.5" fill="#1c1c1c"/>
<rect x="587.7" y="252.2" width="2.2" height="2.2" rx="0.5" fill="#1c1c1c"/>
<rect x="610.5" y="232.2" width="2.2" height="2.2" rx="0.5" fill="#1c1c1c"/>
<rect x="614.5" y="232.2" width="2.2" height="2.2" rx="0.5" fill="#1c1c1c"/>
<rect x="610.5" y="236.2" width="2.2" height="2.2" rx="0.5" fill="#1c1c1c"/>
<rect x="614.5" y="236.2" width="2.2" height="2.2" rx="0.5" fill="#1c1c1c"/>
<rect x="610.5" y="240.2" width="2.2" height="2.2" rx="0.5" fill="#1c1c1c"/>
<rect x="614.5" y="240.2" width="2.2" height="2.2" rx="0.5" fill="#1c1c1c"/>
<rect x="610.5" y="244.2" width="2.2" height="2.2" rx="0.5" fill="#1c1c1c"/>
<rect x="614.5" y="244.2" width="2.2" height="2.2" rx="0.5" fill="#1c1c1c"/>
<rect x="610.5" y="248.2" width="2.2" height="2.2" rx="0.5" fill="#1c1c1c"/>
<rect x="614.5" y="248.2" width="2.2" height="2.2" rx="0.5" fill="#1c1c1c"/>
<rect x="610.5" y="252.2" width="2.2" height="2.2" rx="0.5" fill="#1c1c1c"/>
<rect x="614.5" y="252.2" width="2.2" height="2.2" rx="0.5" fill="#1c1c1c"/>
<rect x="636.8" y="232.2" width="2.2" height="2.2" rx="0.5" fill="#1c1c1c"/>
<rect x="640.8" y="232.2" width="2.2" height="2.2" rx="0.5" fill="#1c1c1c"/>
<rect x="636.8" y="236.2" width="2.2" height="2.2" rx="0.5" fill="#1c1c1c"/>
<rect x="640.8" y="236.2" width="2.2" height="2.2" rx="0.5" fill="#1c1c1c"/>
<rect x="636.8" y="240.2" width="2.2" height="2.2" rx="0.5" fill="#1c1c1c"/>
<rect x="640.8" y="240.2" width="2.2" height="2.2" rx="0.5" fill="#1c1c1c"/>
<rect x="636.8" y="244.2" width="2.2" height="2.2" rx="0.5" fill="#1c1c1c"/>
<rect x="640.8" y="244.2" width="2.2" height="2.2" rx="0.5" fill="#1c1c1c"/>
<rect x="636.8" y="248.2" width="2.2" height="2.2" rx="0.5" fill="#1c1c1c"/>
<rect x="640.8" y="248.2" width="2.2" height="2.2" rx="0.5" fill="#1c1c1c"/>
<rect x="636.8" y="252.2" width="2.2" height="2.2" rx="0.5" fill="#1c1c1c"/>
<rect x="640.8" y="252.2" width="2.2" height="2.2" rx="0.5" fill="#1c1c1c"/>
<rect x="663.1" y="232.2" width="2.2" height="2.2" rx="0.5" fill="#1c1c1c"/>
<rect x="667.1" y="232.2" width="2.2" height="2.2" rx="0.5" fill="#1c1c1c"/>
<rect x="663.1" y="236.2" width="2.2" height="2.2" rx="0.5" fill="#1c1c1c"/>
<rect x="667.1" y="236.2" width="2.2" height="2.2" rx="0.5" fill="#1c1c1c"/>
<rect x="663.1" y="240.2" width="2.2" height="2.2" rx="0.5" fill="#1c1c1c"/>
<rect x="667.1" y="240.2" width="2.2" height="2.2" rx="0.5" fill="#1c1c1c"/>
<rect x="663.1" y="244.2" width="2.2" height="2.2" rx="0.5" fill="#1c1c1c"/>
<rect x="667.1" y="244.2" width="2.2" height="2.2" rx="0.5" fill="#1c1c1c"/>
<rect x="663.1" y="248.2" width="2.2" height="2.2" rx="0.5" fill="#1c1c1c"/>
<rect x="667.1" y="248.2" width="2.2" height="2.2" rx="0.5" fill="#1c1c1c"/>
<rect x="663.1" y="252.2" width="2.2" height="2.2" rx="0.5" fill="#1c1c1c"/>
<rect x="667.1" y="252.2" width="2.2" height="2.2" rx="0.5" fill="#1c1c1c"/>
<rect x="689.4" y="232.2" width="2.2" height="2.2" rx="0.5" fill="#1c1c1c"/>
<rect x="693.4" y="232.2" width="2.2" height="2.2" rx="0.5" fill="#1c1c1c"/>
<rect x="689.4" y="236.2" width="2.2" height="2.2" rx="0.5" fill="#1c1c1c"/>
<rect x="693.4" y="236.2" width="2.2" height="2.2" rx="0.5" fill="#1c1c1c"/>
<rect x="689.4" y="240.2" width="2.2" height="2.2" rx="0.5" fill="#1c1c1c"/>
<rect x="693.4" y="240.2" width="2.2" height="2.2" rx="0.5" fill="#1c1c1c"/>
<rect x="689.4" y="244.2" width="2.2" height="2.2" rx="0.5" fill="#1c1c1c"/>
<rect x="693.4" y="244.2" width="2.2" height="2.2" rx="0.5" fill="#1c1c1c"/>
<rect x="689.4" y="248.2" width="2.2" height="2.2" rx="0.5" fill="#1c1c1c"/>
<rect x="693.4" y="248.2" width="2.2" height="2.2" rx="0.5" fill="#1c1c1c"/>
<rect x="689.4" y="252.2" width="2.2" height="2.2" rx="0.5" fill="#1c1c1c"/>
<rect x="693.4" y="252.2" width="2.2" height="2.2" rx="0.5" fill="#1c1c1c"/>
<rect x="715.7" y="232.2" width="2.2" height="2.2" rx="0.5" fill="#1c1c1c"/>
<rect x="719.7" y="232.2" width="2.2" height="2.2" rx="0.5" fill="#1c1c1c"/>
<rect x="715.7" y="236.2" width="2.2" height="2.2" rx="0.5" fill="#1c1c1c"/>
<rect x="719.7" y="236.2" width="2.2" height="2.2" rx="0.5" fill="#1c1c1c"/>
<rect x="715.7" y="240.2" width="2.2" height="2.2" rx="0.5" fill="#1c1c1c"/>
<rect x="719.7" y="240.2" width="2.2" height="2.2" rx="0.5" fill="#1c1c1c"/>
<rect x="715.7" y="244.2" width="2.2" height="2.2" rx="0.5" fill="#1c1c1c"/>
<rect x="719.7" y="244.2" width="2.2" height="2.2" rx="0.5" fill="#1c1c1c"/>
<rect x="715.7" y="248.2" width="2.2" height="2.2" rx="0.5" fill="#1c1c1c"/>
<rect x="719.7" y="248.2" width="2.2" height="2.2" rx="0.5" fill="#1c1c1c"/>
<rect x="715.7" y="252.2" width="2.2" height="2.2" rx="0.5" fill="#1c1c1c"/>
<rect x="719.7" y="252.2" width="2.2" height="2.2" rx="0.5" fill="#1c1c1c"/>
<rect x="742.0" y="232.2" width="2.2" height="2.2" rx="0.5" fill="#1c1c1c"/>
<rect x="746.0" y="232.2" width="2.2" height="2.2" rx="0.5" fill="#1c1c1c"/>
<rect x="742.0" y="236.2" width="2.2" height="2.2" rx="0.5" fill="#1c1c1c"/>
<rect x="746.0" y="236.2" width="2.2" height="2.2" rx="0.5" fill="#1c1c1c"/>
<rect x="742.0" y="240.2" width="2.2" height="2.2" rx="0.5" fill="#1c1c1c"/>
<rect x="746.0" y="240.2" width="2.2" height="2.2" rx="0.5" fill="#1c1c1c"/>
<rect x="742.0" y="244.2" width="2.2" height="2.2" rx="0.5" fill="#1c1c1c"/>
<rect x="746.0" y="244.2" width="2.2" height="2.2" rx="0.5" fill="#1c1c1c"/>
<rect x="742.0" y="248.2" width="2.2" height="2.2" rx="0.5" fill="#1c1c1c"/>
<rect x="746.0" y="248.2" width="2.2" height="2.2" rx="0.5" fill="#1c1c1c"/>
<rect x="742.0" y="252.2" width="2.2" height="2.2" rx="0.5" fill="#1c1c1c"/>
<rect x="746.0" y="252.2" width="2.2" height="2.2" rx="0.5" fill="#1c1c1c"/>
<rect x="592.5" y="232.79999999999998" width="16.3" height="7.6" fill="#2b2b2b" stroke="#2fb98a" stroke-width="1"/>
<rect x="604.2" y="238.49999999999997" width="6.3" height="3.8" rx="0.8" fill="#22cf93"/>
<rect x="592.0" y="241.89999999999998" width="14" height="3.4" fill="#dcdcdc"/><rect x="596.0" y="242.89999999999998" width="6" height="1.4" fill="#777"/>
<rect x="618.8" y="232.79999999999998" width="16.3" height="7.6" fill="#2b2b2b" stroke="#2fb98a" stroke-width="1"/>
<rect x="630.5" y="238.49999999999997" width="6.3" height="3.8" rx="0.8" fill="#22cf93"/>
<rect x="618.3" y="241.89999999999998" width="14" height="3.4" fill="#dcdcdc"/><rect x="622.3" y="242.89999999999998" width="6" height="1.4" fill="#777"/>
<rect x="645.1" y="232.79999999999998" width="16.3" height="7.6" fill="#2b2b2b" stroke="#2fb98a" stroke-width="1"/>
<rect x="656.8000000000001" y="238.49999999999997" width="6.3" height="3.8" rx="0.8" fill="#22cf93"/>
<rect x="644.6" y="241.89999999999998" width="14" height="3.4" fill="#dcdcdc"/><rect x="648.6" y="242.89999999999998" width="6" height="1.4" fill="#777"/>
<rect x="671.4" y="232.79999999999998" width="16.3" height="7.6" fill="#2b2b2b" stroke="#e8455e" stroke-width="1"/>
<rect x="683.1" y="238.49999999999997" width="6.3" height="3.8" rx="0.8" fill="#e8455e"/>
<rect x="670.9" y="241.89999999999998" width="14" height="3.4" fill="#dcdcdc"/><rect x="674.9" y="242.89999999999998" width="6" height="1.4" fill="#777"/>
<rect x="697.7" y="232.79999999999998" width="16.3" height="7.6" fill="#2b2b2b" stroke="#e8455e" stroke-width="1"/>
<rect x="709.4000000000001" y="238.49999999999997" width="6.3" height="3.8" rx="0.8" fill="#e8455e"/>
<rect x="697.2" y="241.89999999999998" width="14" height="3.4" fill="#dcdcdc"/><rect x="701.2" y="242.89999999999998" width="6" height="1.4" fill="#777"/>
<rect x="724.0" y="232.79999999999998" width="16.3" height="7.6" fill="#2b2b2b" stroke="#2fb98a" stroke-width="1"/>
<rect x="735.7" y="238.49999999999997" width="6.3" height="3.8" rx="0.8" fill="#22cf93"/>
<rect x="723.5" y="241.89999999999998" width="14" height="3.4" fill="#dcdcdc"/><rect x="727.5" y="242.89999999999998" width="6" height="1.4" fill="#777"/>
<rect x="592.5" y="246.1" width="16.3" height="7.6" fill="#2b2b2b" stroke="#2fb98a" stroke-width="1"/>
<rect x="604.2" y="251.79999999999998" width="6.3" height="3.8" rx="0.8" fill="#22cf93"/>
<rect x="618.8" y="246.1" width="16.3" height="7.6" fill="#2b2b2b" stroke="#2fb98a" stroke-width="1"/>
<rect x="630.5" y="251.79999999999998" width="6.3" height="3.8" rx="0.8" fill="#22cf93"/>
<rect x="645.1" y="246.1" width="16.3" height="7.6" fill="#2b2b2b" stroke="#e8455e" stroke-width="1"/>
<rect x="656.8000000000001" y="251.79999999999998" width="6.3" height="3.8" rx="0.8" fill="#e8455e"/>
<rect x="671.4" y="246.1" width="16.3" height="7.6" fill="#2b2b2b" stroke="#f0c020" stroke-width="1"/>
<rect x="683.1" y="251.79999999999998" width="6.3" height="3.8" rx="0.8" fill="#f0c020"/>
<rect x="697.7" y="246.1" width="16.3" height="7.6" fill="#2b2b2b" stroke="#2fb98a" stroke-width="1"/>
<rect x="709.4000000000001" y="251.79999999999998" width="6.3" height="3.8" rx="0.8" fill="#22cf93"/>
<rect x="724.0" y="246.1" width="16.3" height="7.6" fill="#2b2b2b" stroke="#2fb98a" stroke-width="1"/>
<rect x="735.7" y="251.79999999999998" width="6.3" height="3.8" rx="0.8" fill="#22cf93"/>
<rect x="753.5" y="234.6" width="3.6" height="3.6" fill="#fff" stroke="#666" stroke-width="0.5"/>
<rect x="753.5" y="247.6" width="3.6" height="3.6" fill="#fff" stroke="#666" stroke-width="0.5"/>
<rect x="415.6" y="260.8545454545455" width="10.7" height="27.5" rx="2.5" fill="url(#hdl)"/>
<rect x="413" y="264.6545454545455" width="11.3" height="26.5" rx="2" fill="none" stroke="#4e4e4e" stroke-width="1.1"/>
<rect x="416" y="266.05454545454546" width="7" height="18.5" fill="#d6d6d6"/>
<rect x="413.6" y="285.3545454545455" width="10.2" height="5.4" fill="#1d1d1d"/>
<circle cx="420.8" cy="274.3545454545455" r="0.9" fill="#fff"/>
<rect x="826.6" y="260.8545454545455" width="9" height="27.5" rx="2.5" fill="url(#hdl)"/>
<rect x="829" y="264.6545454545455" width="9.5" height="26.5" rx="2" fill="none" stroke="#4e4e4e" stroke-width="1.1"/>
<rect x="830.8" y="266.05454545454546" width="6" height="18.5" fill="#e0e0e0"/>
<rect x="829.6" y="285.3545454545455" width="8.4" height="5.4" fill="#1d1d1d"/>
<rect x="435" y="262.6" width="384.5" height="31.8" fill="url(#card)"/>
<rect x="435" y="263.1" width="2.6" height="30.8" fill="url(#blue)"/>
<rect x="816.5" y="263.1" width="2.6" height="30.8" fill="#a8daf0"/>
<rect x="437" y="293.90000000000003" width="381" height="3.6" fill="url(#lip)"/>
<rect x="442" y="296.8" width="376" height="1.2" fill="#333"/>
<circle cx="439.6" cy="277.3" r="4.8" fill="#e6e6e6" stroke="#b8b8b8" stroke-width="0.8"/>
<circle cx="815" cy="277.3" r="4.5" fill="#efefef" stroke="#b8b8b8" stroke-width="0.8"/>
<rect x="435" y="263.1" width="1.6" height="30.8" fill="#9dd5ee"/>
<circle cx="455.3" cy="284.8" r="1.5" fill="none" stroke="#888" stroke-width="0.6"/>
<rect x="443" y="265.1" width="25" height="1" fill="#cfe8f2"/>
<rect x="460.7" y="268.40000000000003" width="76.5" height="22.5" fill="#2fb98a"/>
<rect x="461.7" y="279.40000000000003" width="74.5" height="1" fill="#bfe8d8"/>
<path d="M462.0 270.90000000000003H464.0V269.50000000000006H470.15V270.90000000000003H472.15V278.00000000000006H462.0Z" fill="#262626"/>
<rect x="468.09499999999997" y="276.70000000000005" width="5.865" height="3.2" rx="0.8" fill="#22cf93"/>
<path d="M474.75 270.90000000000003H476.75V269.50000000000006H482.9V270.90000000000003H484.9V278.00000000000006H474.75Z" fill="#262626"/>
<rect x="480.84499999999997" y="276.70000000000005" width="5.865" height="3.2" rx="0.8" fill="#22cf93"/>
<path d="M487.5 270.90000000000003H489.5V269.50000000000006H495.65V270.90000000000003H497.65V278.00000000000006H487.5Z" fill="#262626"/>
<rect x="493.59499999999997" y="276.70000000000005" width="5.865" height="3.2" rx="0.8" fill="#22cf93"/>
<path d="M500.25 270.90000000000003H502.25V269.50000000000006H508.4V270.90000000000003H510.4V278.00000000000006H500.25Z" fill="#262626"/>
<rect x="506.34499999999997" y="276.70000000000005" width="5.865" height="3.2" rx="0.8" fill="#22cf93"/>
<path d="M513.0 270.90000000000003H515.0V269.50000000000006H521.1500000000001V270.90000000000003H523.1500000000001V278.00000000000006H513.0Z" fill="#262626"/>
<rect x="519.095" y="276.70000000000005" width="5.865" height="3.2" rx="0.8" fill="#22cf93"/>
<path d="M525.75 270.90000000000003H527.75V269.50000000000006H533.9000000000001V270.90000000000003H535.9000000000001V278.00000000000006H525.75Z" fill="#262626"/>
<rect x="531.845" y="276.70000000000005" width="5.865" height="3.2" rx="0.8" fill="#22cf93"/>
<path d="M462.0 282.70000000000005H464.0V281.30000000000007H470.15V282.70000000000005H472.15V289.80000000000007H462.0Z" fill="#262626"/>
<rect x="468.09499999999997" y="288.50000000000006" width="5.865" height="3.2" rx="0.8" fill="#22cf93"/>
<path d="M474.75 282.70000000000005H476.75V281.30000000000007H482.9V282.70000000000005H484.9V289.80000000000007H474.75Z" fill="#262626"/>
<rect x="480.84499999999997" y="288.50000000000006" width="5.865" height="3.2" rx="0.8" fill="#22cf93"/>
<path d="M487.5 282.70000000000005H489.5V281.30000000000007H495.65V282.70000000000005H497.65V289.80000000000007H487.5Z" fill="#262626"/>
<rect x="493.59499999999997" y="288.50000000000006" width="5.865" height="3.2" rx="0.8" fill="#22cf93"/>
<path d="M500.25 282.70000000000005H502.25V281.30000000000007H508.4V282.70000000000005H510.4V289.80000000000007H500.25Z" fill="#262626"/>
<rect x="506.34499999999997" y="288.50000000000006" width="5.865" height="3.2" rx="0.8" fill="#22cf93"/>
<path d="M513.0 282.70000000000005H515.0V281.30000000000007H521.1500000000001V282.70000000000005H523.1500000000001V289.80000000000007H513.0Z" fill="#262626"/>
<rect x="519.095" y="288.50000000000006" width="5.865" height="3.2" rx="0.8" fill="#22cf93"/>
<path d="M525.75 282.70000000000005H527.75V281.30000000000007H533.9000000000001V282.70000000000005H535.9000000000001V289.80000000000007H525.75Z" fill="#262626"/>
<rect x="531.845" y="288.50000000000006" width="5.865" height="3.2" rx="0.8" fill="#22cf93"/>
<rect x="540" y="268.40000000000003" width="78.3" height="22.5" fill="#2fb98a"/>
<rect x="541" y="279.40000000000003" width="76.3" height="1" fill="#bfe8d8"/>
<path d="M541.3 270.90000000000003H543.3V269.50000000000006H549.75V270.90000000000003H551.75V278.00000000000006H541.3Z" fill="#262626"/>
<rect x="547.569" y="276.70000000000005" width="6.003" height="3.2" rx="0.8" fill="#22cf93"/>
<path d="M554.3499999999999 270.90000000000003H556.3499999999999V269.50000000000006H562.8V270.90000000000003H564.8V278.00000000000006H554.3499999999999Z" fill="#262626"/>
<rect x="560.6189999999999" y="276.70000000000005" width="6.003" height="3.2" rx="0.8" fill="#22cf93"/>
<path d="M567.4 270.90000000000003H569.4V269.50000000000006H575.85V270.90000000000003H577.85V278.00000000000006H567.4Z" fill="#262626"/>
<rect x="573.669" y="276.70000000000005" width="6.003" height="3.2" rx="0.8" fill="#22cf93"/>
<rect x="579.75" y="269.00000000000006" width="11.85" height="9.8" fill="#f2f2f2" stroke="#e8455e" stroke-width="1"/>
<path d="M580.4499999999999 270.90000000000003H582.4499999999999V269.50000000000006H588.9V270.90000000000003H590.9V278.00000000000006H580.4499999999999Z" fill="#262626"/>
<rect x="586.7189999999999" y="276.70000000000005" width="6.003" height="3.2" rx="0.8" fill="#e8455e"/>
<path d="M593.5 270.90000000000003H595.5V269.50000000000006H601.95V270.90000000000003H603.95V278.00000000000006H593.5Z" fill="#262626"/>
<rect x="599.769" y="276.70000000000005" width="6.003" height="3.2" rx="0.8" fill="#22cf93"/>
<path d="M606.55 270.90000000000003H608.55V269.50000000000006H615.0V270.90000000000003H617.0V278.00000000000006H606.55Z" fill="#262626"/>
<rect x="612.819" y="276.70000000000005" width="6.003" height="3.2" rx="0.8" fill="#22cf93"/>
<path d="M541.3 282.70000000000005H543.3V281.30000000000007H549.75V282.70000000000005H551.75V289.80000000000007H541.3Z" fill="#262626"/>
<rect x="547.569" y="288.50000000000006" width="6.003" height="3.2" rx="0.8" fill="#22cf93"/>
<path d="M554.3499999999999 282.70000000000005H556.3499999999999V281.30000000000007H562.8V282.70000000000005H564.8V289.80000000000007H554.3499999999999Z" fill="#262626"/>
<rect x="560.6189999999999" y="288.50000000000006" width="6.003" height="3.2" rx="0.8" fill="#22cf93"/>
<rect x="566.7" y="280.80000000000007" width="11.85" height="9.8" fill="#f2f2f2" stroke="#e8455e" stroke-width="1"/>
<path d="M567.4 282.70000000000005H569.4V281.30000000000007H575.85V282.70000000000005H577.85V289.80000000000007H567.4Z" fill="#262626"/>
<rect x="573.669" y="288.50000000000006" width="6.003" height="3.2" rx="0.8" fill="#e8455e"/>
<path d="M580.4499999999999 282.70000000000005H582.4499999999999V281.30000000000007H588.9V282.70000000000005H590.9V289.80000000000007H580.4499999999999Z" fill="#262626"/>
<rect x="586.7189999999999" y="288.50000000000006" width="6.003" height="3.2" rx="0.8" fill="#22cf93"/>
<path d="M593.5 282.70000000000005H595.5V281.30000000000007H601.95V282.70000000000005H603.95V289.80000000000007H593.5Z" fill="#262626"/>
<rect x="599.769" y="288.50000000000006" width="6.003" height="3.2" rx="0.8" fill="#22cf93"/>
<path d="M606.55 282.70000000000005H608.55V281.30000000000007H615.0V282.70000000000005H617.0V289.80000000000007H606.55Z" fill="#262626"/>
<rect x="612.819" y="288.50000000000006" width="6.003" height="3.2" rx="0.8" fill="#22cf93"/>
<rect x="633" y="277.1" width="101.6" height="5" fill="#efefef"/>
<rect x="633" y="268.6" width="101.6" height="8.5" fill="#2fb98a"/>
<rect x="634.1" y="269.6" width="10.5" height="6.5" fill="#262626"/>
<rect x="639.35" y="275.1" width="6.35" height="3.2" rx="0.8" fill="#22cf93"/>
<rect x="636.81" y="279.1" width="1.6" height="1.6" fill="#555"/><rect x="639.985" y="278.70000000000005" width="1.4" height="1.2" fill="#555"/>
<rect x="646.8000000000001" y="269.6" width="10.5" height="6.5" fill="#262626"/>
<rect x="652.0500000000001" y="275.1" width="6.35" height="3.2" rx="0.8" fill="#22cf93"/>
<rect x="649.51" y="279.1" width="1.6" height="1.6" fill="#555"/><rect x="652.6850000000001" y="278.70000000000005" width="1.4" height="1.2" fill="#555"/>
<rect x="659.5" y="269.6" width="10.5" height="6.5" fill="#262626"/>
<rect x="664.75" y="275.1" width="6.35" height="3.2" rx="0.8" fill="#22cf93"/>
<rect x="662.2099999999999" y="279.1" width="1.6" height="1.6" fill="#555"/><rect x="665.385" y="278.70000000000005" width="1.4" height="1.2" fill="#555"/>
<rect x="672.2" y="269.6" width="10.5" height="6.5" fill="#262626"/>
<rect x="677.45" y="275.1" width="6.35" height="3.2" rx="0.8" fill="#22cf93"/>
<rect x="674.91" y="279.1" width="1.6" height="1.6" fill="#555"/><rect x="678.085" y="278.70000000000005" width="1.4" height="1.2" fill="#555"/>
<rect x="684.9" y="269.6" width="10.5" height="6.5" fill="#262626"/>
<rect x="690.15" y="275.1" width="6.35" height="3.2" rx="0.8" fill="#22cf93"/>
<rect x="687.6099999999999" y="279.1" width="1.6" height="1.6" fill="#555"/><rect x="690.785" y="278.70000000000005" width="1.4" height="1.2" fill="#555"/>
<rect x="697.6" y="269.6" width="10.5" height="6.5" fill="#262626"/>
<rect x="702.85" y="275.1" width="6.35" height="3.2" rx="0.8" fill="#22cf93"/>
<rect x="700.31" y="279.1" width="1.6" height="1.6" fill="#555"/><rect x="703.485" y="278.70000000000005" width="1.4" height="1.2" fill="#555"/>
<rect x="710.3000000000001" y="269.6" width="10.5" height="6.5" fill="#262626"/>
<rect x="715.5500000000001" y="275.1" width="6.35" height="3.2" rx="0.8" fill="#22cf93"/>
<rect x="713.01" y="279.1" width="1.6" height="1.6" fill="#555"/><rect x="716.1850000000001" y="278.70000000000005" width="1.4" height="1.2" fill="#555"/>
<rect x="723.0" y="269.6" width="10.5" height="6.5" fill="#262626"/>
<rect x="728.25" y="275.1" width="6.35" height="3.2" rx="0.8" fill="#22cf93"/>
<rect x="725.7099999999999" y="279.1" width="1.6" height="1.6" fill="#555"/><rect x="728.885" y="278.70000000000005" width="1.4" height="1.2" fill="#555"/>
<rect x="633" y="282.1" width="101.6" height="8.5" fill="#2fb98a"/>
<rect x="634.1" y="283.1" width="10.5" height="6.5" fill="#262626"/>
<rect x="639.35" y="288.6" width="6.35" height="3.2" rx="0.8" fill="#22cf93"/>
<rect x="646.8000000000001" y="283.1" width="10.5" height="6.5" fill="#262626"/>
<rect x="652.0500000000001" y="288.6" width="6.35" height="3.2" rx="0.8" fill="#22cf93"/>
<rect x="659.5" y="283.1" width="10.5" height="6.5" fill="#262626"/>
<rect x="664.75" y="288.6" width="6.35" height="3.2" rx="0.8" fill="#22cf93"/>
<rect x="672.2" y="283.1" width="10.5" height="6.5" fill="#262626"/>
<rect x="677.45" y="288.6" width="6.35" height="3.2" rx="0.8" fill="#22cf93"/>
<rect x="684.9" y="283.1" width="10.5" height="6.5" fill="#262626"/>
<rect x="690.15" y="288.6" width="6.35" height="3.2" rx="0.8" fill="#22cf93"/>
<rect x="697.6" y="283.1" width="10.5" height="6.5" fill="#262626"/>
<rect x="702.85" y="288.6" width="6.35" height="3.2" rx="0.8" fill="#22cf93"/>
<rect x="710.3000000000001" y="283.1" width="10.5" height="6.5" fill="#262626"/>
<rect x="715.5500000000001" y="288.6" width="6.35" height="3.2" rx="0.8" fill="#22cf93"/>
<rect x="723.0" y="283.1" width="10.5" height="6.5" fill="#262626"/>
<rect x="728.25" y="288.6" width="6.35" height="3.2" rx="0.8" fill="#22cf93"/>
<rect x="737" y="270.1" width="3.6" height="3.6" fill="#fff" stroke="#666" stroke-width="0.5"/>
<rect x="737" y="283.1" width="3.6" height="3.6" fill="#fff" stroke="#666" stroke-width="0.5"/>
<rect x="415.6" y="297.0818181818182" width="10.7" height="27.5" rx="2.5" fill="url(#hdl)"/>
<rect x="413" y="300.88181818181823" width="11.3" height="26.5" rx="2" fill="none" stroke="#4e4e4e" stroke-width="1.1"/>
<rect x="416" y="302.2818181818182" width="7" height="18.5" fill="#d6d6d6"/>
<rect x="413.6" y="321.5818181818182" width="10.2" height="5.4" fill="#1d1d1d"/>
<circle cx="420.8" cy="310.5818181818182" r="0.9" fill="#fff"/>
<rect x="826.6" y="297.0818181818182" width="9" height="27.5" rx="2.5" fill="url(#hdl)"/>
<rect x="829" y="300.88181818181823" width="9.5" height="26.5" rx="2" fill="none" stroke="#4e4e4e" stroke-width="1.1"/>
<rect x="830.8" y="302.2818181818182" width="6" height="18.5" fill="#e0e0e0"/>
<rect x="829.6" y="321.5818181818182" width="8.4" height="5.4" fill="#1d1d1d"/>
<rect x="435" y="298.6" width="384.5" height="31.8" fill="url(#card)"/>
<rect x="435" y="299.1" width="2.6" height="30.8" fill="url(#blue)"/>
<rect x="816.5" y="299.1" width="2.6" height="30.8" fill="#a8daf0"/>
<rect x="437" y="329.90000000000003" width="381" height="3.6" fill="url(#lip)"/>
<rect x="442" y="332.8" width="376" height="1.2" fill="#333"/>
<circle cx="439.6" cy="313.3" r="4.8" fill="#e6e6e6" stroke="#b8b8b8" stroke-width="0.8"/>
<circle cx="815" cy="313.3" r="4.5" fill="#efefef" stroke="#b8b8b8" stroke-width="0.8"/>
<rect x="435" y="299.1" width="1.6" height="30.8" fill="#9dd5ee"/>
<circle cx="455.3" cy="320.8" r="1.5" fill="none" stroke="#888" stroke-width="0.6"/>
<rect x="443" y="301.1" width="25" height="1" fill="#cfe8f2"/>
<rect x="460.7" y="304.40000000000003" width="76.5" height="22.5" fill="#2fb98a"/>
<rect x="461.7" y="315.40000000000003" width="74.5" height="1" fill="#bfe8d8"/>
<path d="M462.0 306.90000000000003H464.0V305.50000000000006H470.15V306.90000000000003H472.15V314.00000000000006H462.0Z" fill="#262626"/>
<rect x="468.09499999999997" y="312.70000000000005" width="5.865" height="3.2" rx="0.8" fill="#22cf93"/>
<path d="M474.75 306.90000000000003H476.75V305.50000000000006H482.9V306.90000000000003H484.9V314.00000000000006H474.75Z" fill="#262626"/>
<rect x="480.84499999999997" y="312.70000000000005" width="5.865" height="3.2" rx="0.8" fill="#22cf93"/>
<path d="M487.5 306.90000000000003H489.5V305.50000000000006H495.65V306.90000000000003H497.65V314.00000000000006H487.5Z" fill="#262626"/>
<rect x="493.59499999999997" y="312.70000000000005" width="5.865" height="3.2" rx="0.8" fill="#22cf93"/>
<rect x="499.55" y="305.00000000000006" width="11.55" height="9.8" fill="#f2f2f2" stroke="#e8455e" stroke-width="1"/>
<path d="M500.25 306.90000000000003H502.25V305.50000000000006H508.4V306.90000000000003H510.4V314.00000000000006H500.25Z" fill="#262626"/>
<rect x="506.34499999999997" y="312.70000000000005" width="5.865" height="3.2" rx="0.8" fill="#e8455e"/>
<path d="M513.0 306.90000000000003H515.0V305.50000000000006H521.1500000000001V306.90000000000003H523.1500000000001V314.00000000000006H513.0Z" fill="#262626"/>
<rect x="519.095" y="312.70000000000005" width="5.865" height="3.2" rx="0.8" fill="#22cf93"/>
<path d="M525.75 306.90000000000003H527.75V305.50000000000006H533.9000000000001V306.90000000000003H535.9000000000001V314.00000000000006H525.75Z" fill="#262626"/>
<rect x="531.845" y="312.70000000000005" width="5.865" height="3.2" rx="0.8" fill="#22cf93"/>
<path d="M462.0 318.70000000000005H464.0V317.30000000000007H470.15V318.70000000000005H472.15V325.80000000000007H462.0Z" fill="#262626"/>
<rect x="468.09499999999997" y="324.50000000000006" width="5.865" height="3.2" rx="0.8" fill="#22cf93"/>
<path d="M474.75 318.70000000000005H476.75V317.30000000000007H482.9V318.70000000000005H484.9V325.80000000000007H474.75Z" fill="#262626"/>
<rect x="480.84499999999997" y="324.50000000000006" width="5.865" height="3.2" rx="0.8" fill="#22cf93"/>
<path d="M487.5 318.70000000000005H489.5V317.30000000000007H495.65V318.70000000000005H497.65V325.80000000000007H487.5Z" fill="#262626"/>
<rect x="493.59499999999997" y="324.50000000000006" width="5.865" height="3.2" rx="0.8" fill="#22cf93"/>
<path d="M500.25 318.70000000000005H502.25V317.30000000000007H508.4V318.70000000000005H510.4V325.80000000000007H500.25Z" fill="#262626"/>
<rect x="506.34499999999997" y="324.50000000000006" width="5.865" height="3.2" rx="0.8" fill="#22cf93"/>
<path d="M513.0 318.70000000000005H515.0V317.30000000000007H521.1500000000001V318.70000000000005H523.1500000000001V325.80000000000007H513.0Z" fill="#262626"/>
<rect x="519.095" y="324.50000000000006" width="5.865" height="3.2" rx="0.8" fill="#22cf93"/>
<path d="M525.75 318.70000000000005H527.75V317.30000000000007H533.9000000000001V318.70000000000005H535.9000000000001V325.80000000000007H525.75Z" fill="#262626"/>
<rect x="531.845" y="324.50000000000006" width="5.865" height="3.2" rx="0.8" fill="#22cf93"/>
<rect x="540" y="304.40000000000003" width="78.3" height="22.5" fill="#2fb98a"/>
<rect x="541" y="315.40000000000003" width="76.3" height="1" fill="#bfe8d8"/>
<path d="M541.3 306.90000000000003H543.3V305.50000000000006H549.75V306.90000000000003H551.75V314.00000000000006H541.3Z" fill="#262626"/>
<rect x="547.569" y="312.70000000000005" width="6.003" height="3.2" rx="0.8" fill="#22cf93"/>
<path d="M554.3499999999999 306.90000000000003H556.3499999999999V305.50000000000006H562.8V306.90000000000003H564.8V314.00000000000006H554.3499999999999Z" fill="#262626"/>
<rect x="560.6189999999999" y="312.70000000000005" width="6.003" height="3.2" rx="0.8" fill="#22cf93"/>
<path d="M567.4 306.90000000000003H569.4V305.50000000000006H575.85V306.90000000000003H577.85V314.00000000000006H567.4Z" fill="#262626"/>
<rect x="573.669" y="312.70000000000005" width="6.003" height="3.2" rx="0.8" fill="#22cf93"/>
<path d="M580.4499999999999 306.90000000000003H582.4499999999999V305.50000000000006H588.9V306.90000000000003H590.9V314.00000000000006H580.4499999999999Z" fill="#262626"/>
<rect x="586.7189999999999" y="312.70000000000005" width="6.003" height="3.2" rx="0.8" fill="#22cf93"/>
<rect x="592.8000000000001" y="305.00000000000006" width="11.85" height="9.8" fill="#f2f2f2" stroke="#f0c020" stroke-width="1"/>
<path d="M593.5 306.90000000000003H595.5V305.50000000000006H601.95V306.90000000000003H603.95V314.00000000000006H593.5Z" fill="#262626"/>
<rect x="599.769" y="312.70000000000005" width="6.003" height="3.2" rx="0.8" fill="#f0c020"/>
<path d="M606.55 306.90000000000003H608.55V305.50000000000006H615.0V306.90000000000003H617.0V314.00000000000006H606.55Z" fill="#262626"/>
<rect x="612.819" y="312.70000000000005" width="6.003" height="3.2" rx="0.8" fill="#22cf93"/>
<path d="M541.3 318.70000000000005H543.3V317.30000000000007H549.75V318.70000000000005H551.75V325.80000000000007H541.3Z" fill="#262626"/>
<rect x="547.569" y="324.50000000000006" width="6.003" height="3.2" rx="0.8" fill="#22cf93"/>
<rect x="553.65" y="316.80000000000007" width="11.85" height="9.8" fill="#f2f2f2" stroke="#f0c020" stroke-width="1"/>
<path d="M554.3499999999999 318.70000000000005H556.3499999999999V317.30000000000007H562.8V318.70000000000005H564.8V325.80000000000007H554.3499999999999Z" fill="#262626"/>
<rect x="560.6189999999999" y="324.50000000000006" width="6.003" height="3.2" rx="0.8" fill="#f0c020"/>
<path d="M567.4 318.70000000000005H569.4V317.30000000000007H575.85V318.70000000000005H577.85V325.80000000000007H567.4Z" fill="#262626"/>
<rect x="573.669" y="324.50000000000006" width="6.003" height="3.2" rx="0.8" fill="#22cf93"/>
<path d="M580.4499999999999 318.70000000000005H582.4499999999999V317.30000000000007H588.9V318.70000000000005H590.9V325.80000000000007H580.4499999999999Z" fill="#262626"/>
<rect x="586.7189999999999" y="324.50000000000006" width="6.003" height="3.2" rx="0.8" fill="#22cf93"/>
<path d="M593.5 318.70000000000005H595.5V317.30000000000007H601.95V318.70000000000005H603.95V325.80000000000007H593.5Z" fill="#262626"/>
<rect x="599.769" y="324.50000000000006" width="6.003" height="3.2" rx="0.8" fill="#22cf93"/>
<path d="M606.55 318.70000000000005H608.55V317.30000000000007H615.0V318.70000000000005H617.0V325.80000000000007H606.55Z" fill="#262626"/>
<rect x="612.819" y="324.50000000000006" width="6.003" height="3.2" rx="0.8" fill="#22cf93"/>
<rect x="633" y="313.1" width="101.6" height="5" fill="#efefef"/>
<rect x="633" y="304.6" width="101.6" height="8.5" fill="#2fb98a"/>
<rect x="634.1" y="305.6" width="10.5" height="6.5" fill="#262626"/>
<rect x="639.35" y="311.1" width="6.35" height="3.2" rx="0.8" fill="#22cf93"/>
<rect x="636.81" y="315.1" width="1.6" height="1.6" fill="#555"/><rect x="639.985" y="314.70000000000005" width="1.4" height="1.2" fill="#555"/>
<rect x="646.0" y="304.6" width="12.1" height="8.5" fill="#8878ee"/>
<rect x="646.8000000000001" y="305.6" width="10.5" height="6.5" fill="#262626"/>
<rect x="652.0500000000001" y="311.1" width="6.35" height="3.2" rx="0.8" fill="#8878ee"/>
<rect x="649.51" y="315.1" width="1.6" height="1.6" fill="#555"/><rect x="652.6850000000001" y="314.70000000000005" width="1.4" height="1.2" fill="#555"/>
<rect x="659.5" y="305.6" width="10.5" height="6.5" fill="#262626"/>
<rect x="664.75" y="311.1" width="6.35" height="3.2" rx="0.8" fill="#22cf93"/>
<rect x="662.2099999999999" y="315.1" width="1.6" height="1.6" fill="#555"/><rect x="665.385" y="314.70000000000005" width="1.4" height="1.2" fill="#555"/>
<rect x="672.2" y="305.6" width="10.5" height="6.5" fill="#262626"/>
<rect x="677.45" y="311.1" width="6.35" height="3.2" rx="0.8" fill="#22cf93"/>
<rect x="674.91" y="315.1" width="1.6" height="1.6" fill="#555"/><rect x="678.085" y="314.70000000000005" width="1.4" height="1.2" fill="#555"/>
<rect x="684.9" y="305.6" width="10.5" height="6.5" fill="#262626"/>
<rect x="690.15" y="311.1" width="6.35" height="3.2" rx="0.8" fill="#22cf93"/>
<rect x="687.6099999999999" y="315.1" width="1.6" height="1.6" fill="#555"/><rect x="690.785" y="314.70000000000005" width="1.4" height="1.2" fill="#555"/>
<rect x="697.6" y="305.6" width="10.5" height="6.5" fill="#262626"/>
<rect x="702.85" y="311.1" width="6.35" height="3.2" rx="0.8" fill="#22cf93"/>
<rect x="700.31" y="315.1" width="1.6" height="1.6" fill="#555"/><rect x="703.485" y="314.70000000000005" width="1.4" height="1.2" fill="#555"/>
<rect x="710.3000000000001" y="305.6" width="10.5" height="6.5" fill="#262626"/>
<rect x="715.5500000000001" y="311.1" width="6.35" height="3.2" rx="0.8" fill="#22cf93"/>
<rect x="713.01" y="315.1" width="1.6" height="1.6" fill="#555"/><rect x="716.1850000000001" y="314.70000000000005" width="1.4" height="1.2" fill="#555"/>
<rect x="722.1999999999999" y="304.6" width="12.1" height="8.5" fill="#e8455e"/>
<rect x="723.0" y="305.6" width="10.5" height="6.5" fill="#262626"/>
<rect x="728.25" y="311.1" width="6.35" height="3.2" rx="0.8" fill="#e8455e"/>
<rect x="725.7099999999999" y="315.1" width="1.6" height="1.6" fill="#555"/><rect x="728.885" y="314.70000000000005" width="1.4" height="1.2" fill="#555"/>
<rect x="633" y="318.1" width="101.6" height="8.5" fill="#2fb98a"/>
<rect x="634.1" y="319.1" width="10.5" height="6.5" fill="#262626"/>
<rect x="639.35" y="324.6" width="6.35" height="3.2" rx="0.8" fill="#22cf93"/>
<rect x="646.8000000000001" y="319.1" width="10.5" height="6.5" fill="#262626"/>
<rect x="652.0500000000001" y="324.6" width="6.35" height="3.2" rx="0.8" fill="#22cf93"/>
<rect x="659.5" y="319.1" width="10.5" height="6.5" fill="#262626"/>
<rect x="664.75" y="324.6" width="6.35" height="3.2" rx="0.8" fill="#22cf93"/>
<rect x="672.2" y="319.1" width="10.5" height="6.5" fill="#262626"/>
<rect x="677.45" y="324.6" width="6.35" height="3.2" rx="0.8" fill="#22cf93"/>
<rect x="684.9" y="319.1" width="10.5" height="6.5" fill="#262626"/>
<rect x="690.15" y="324.6" width="6.35" height="3.2" rx="0.8" fill="#22cf93"/>
<rect x="697.6" y="319.1" width="10.5" height="6.5" fill="#262626"/>
<rect x="702.85" y="324.6" width="6.35" height="3.2" rx="0.8" fill="#22cf93"/>
<rect x="710.3000000000001" y="319.1" width="10.5" height="6.5" fill="#262626"/>
<rect x="715.5500000000001" y="324.6" width="6.35" height="3.2" rx="0.8" fill="#22cf93"/>
<rect x="723.0" y="319.1" width="10.5" height="6.5" fill="#262626"/>
<rect x="728.25" y="324.6" width="6.35" height="3.2" rx="0.8" fill="#22cf93"/>
<rect x="737" y="306.1" width="3.6" height="3.6" fill="#fff" stroke="#666" stroke-width="0.5"/>
<rect x="737" y="319.1" width="3.6" height="3.6" fill="#fff" stroke="#666" stroke-width="0.5"/>
<rect x="415.6" y="333.3090909090909" width="10.7" height="27.5" rx="2.5" fill="url(#hdl)"/>
<rect x="413" y="337.1090909090909" width="11.3" height="26.5" rx="2" fill="none" stroke="#4e4e4e" stroke-width="1.1"/>
<rect x="416" y="338.5090909090909" width="7" height="18.5" fill="#d6d6d6"/>
<rect x="413.6" y="357.8090909090909" width="10.2" height="5.4" fill="#1d1d1d"/>
<circle cx="420.8" cy="346.8090909090909" r="0.9" fill="#fff"/>
<rect x="826.6" y="333.3090909090909" width="9" height="27.5" rx="2.5" fill="url(#hdl)"/>
<rect x="829" y="337.1090909090909" width="9.5" height="26.5" rx="2" fill="none" stroke="#4e4e4e" stroke-width="1.1"/>
<rect x="830.8" y="338.5090909090909" width="6" height="18.5" fill="#e0e0e0"/>
<rect x="829.6" y="357.8090909090909" width="8.4" height="5.4" fill="#1d1d1d"/>
<rect x="435" y="334.6" width="384.5" height="31.8" fill="url(#card)"/>
<rect x="435" y="335.1" width="2.6" height="30.8" fill="url(#blue)"/>
<rect x="816.5" y="335.1" width="2.6" height="30.8" fill="#a8daf0"/>
<rect x="437" y="365.90000000000003" width="381" height="3.6" fill="url(#lip)"/>
<rect x="442" y="368.8" width="376" height="1.2" fill="#333"/>
<circle cx="439.6" cy="349.3" r="4.8" fill="#e6e6e6" stroke="#b8b8b8" stroke-width="0.8"/>
<circle cx="815" cy="349.3" r="4.5" fill="#efefef" stroke="#b8b8b8" stroke-width="0.8"/>
<rect x="435" y="335.1" width="1.6" height="30.8" fill="#9dd5ee"/>
<circle cx="455.3" cy="356.8" r="1.5" fill="none" stroke="#888" stroke-width="0.6"/>
<rect x="443" y="337.1" width="25" height="1" fill="#cfe8f2"/>
<rect x="461" y="334.1" width="206" height="4" fill="url(#perf2)"/>
<rect x="461" y="364.1" width="206" height="4" fill="url(#perf3)"/>
<rect x="461.2" y="349.1" width="101.5" height="5.4" fill="#e6e6e6"/>
<rect x="461.2" y="340.90000000000003" width="101.5" height="8.2" fill="#2fb98a"/>
<rect x="462.3" y="341.90000000000003" width="10.4875" height="6.199999999999999" fill="#262626"/>
<rect x="467.54375" y="347.1" width="6.34375" height="3.2" rx="0.8" fill="#22cf93"/>
<rect x="465.00624999999997" y="351.1" width="1.6" height="1.6" fill="#555"/><rect x="468.17812499999997" y="350.70000000000005" width="1.4" height="1.2" fill="#555"/>
<rect x="474.9875" y="341.90000000000003" width="10.4875" height="6.199999999999999" fill="#262626"/>
<rect x="480.23125" y="347.1" width="6.34375" height="3.2" rx="0.8" fill="#22cf93"/>
<rect x="477.69374999999997" y="351.1" width="1.6" height="1.6" fill="#555"/><rect x="480.86562499999997" y="350.70000000000005" width="1.4" height="1.2" fill="#555"/>
<rect x="487.675" y="341.90000000000003" width="10.4875" height="6.199999999999999" fill="#262626"/>
<rect x="492.91875" y="347.1" width="6.34375" height="3.2" rx="0.8" fill="#22cf93"/>
<rect x="490.38124999999997" y="351.1" width="1.6" height="1.6" fill="#555"/><rect x="493.55312499999997" y="350.70000000000005" width="1.4" height="1.2" fill="#555"/>
<rect x="500.3625" y="341.90000000000003" width="10.4875" height="6.199999999999999" fill="#262626"/>
<rect x="505.60625" y="347.1" width="6.34375" height="3.2" rx="0.8" fill="#22cf93"/>
<rect x="503.06874999999997" y="351.1" width="1.6" height="1.6" fill="#555"/><rect x="506.24062499999997" y="350.70000000000005" width="1.4" height="1.2" fill="#555"/>
<rect x="513.05" y="341.90000000000003" width="10.4875" height="6.199999999999999" fill="#262626"/>
<rect x="518.29375" y="347.1" width="6.34375" height="3.2" rx="0.8" fill="#22cf93"/>
<rect x="515.75625" y="351.1" width="1.6" height="1.6" fill="#555"/><rect x="518.928125" y="350.70000000000005" width="1.4" height="1.2" fill="#555"/>
<rect x="525.7375000000001" y="341.90000000000003" width="10.4875" height="6.199999999999999" fill="#262626"/>
<rect x="530.98125" y="347.1" width="6.34375" height="3.2" rx="0.8" fill="#22cf93"/>
<rect x="528.44375" y="351.1" width="1.6" height="1.6" fill="#555"/><rect x="531.615625" y="350.70000000000005" width="1.4" height="1.2" fill="#555"/>
<rect x="538.4250000000001" y="341.90000000000003" width="10.4875" height="6.199999999999999" fill="#262626"/>
<rect x="543.66875" y="347.1" width="6.34375" height="3.2" rx="0.8" fill="#22cf93"/>
<rect x="541.13125" y="351.1" width="1.6" height="1.6" fill="#555"/><rect x="544.303125" y="350.70000000000005" width="1.4" height="1.2" fill="#555"/>
<rect x="551.1125000000001" y="341.90000000000003" width="10.4875" height="6.199999999999999" fill="#262626"/>
<rect x="556.35625" y="347.1" width="6.34375" height="3.2" rx="0.8" fill="#22cf93"/>
<rect x="553.81875" y="351.1" width="1.6" height="1.6" fill="#555"/><rect x="556.990625" y="350.70000000000005" width="1.4" height="1.2" fill="#555"/>
<rect x="461.2" y="354.50000000000006" width="101.5" height="8.2" fill="#2fb98a"/>
<rect x="462.3" y="355.50000000000006" width="10.4875" height="6.199999999999999" fill="#262626"/>
<rect x="467.54375" y="360.70000000000005" width="6.34375" height="3.2" rx="0.8" fill="#22cf93"/>
<rect x="474.1875" y="354.50000000000006" width="12.0875" height="8.2" fill="#e8455e"/>
<rect x="474.9875" y="355.50000000000006" width="10.4875" height="6.199999999999999" fill="#262626"/>
<rect x="480.23125" y="360.70000000000005" width="6.34375" height="3.2" rx="0.8" fill="#e8455e"/>
<rect x="487.675" y="355.50000000000006" width="10.4875" height="6.199999999999999" fill="#262626"/>
<rect x="492.91875" y="360.70000000000005" width="6.34375" height="3.2" rx="0.8" fill="#22cf93"/>
<rect x="500.3625" y="355.50000000000006" width="10.4875" height="6.199999999999999" fill="#262626"/>
<rect x="505.60625" y="360.70000000000005" width="6.34375" height="3.2" rx="0.8" fill="#22cf93"/>
<rect x="513.05" y="355.50000000000006" width="10.4875" height="6.199999999999999" fill="#262626"/>
<rect x="518.29375" y="360.70000000000005" width="6.34375" height="3.2" rx="0.8" fill="#22cf93"/>
<rect x="525.7375000000001" y="355.50000000000006" width="10.4875" height="6.199999999999999" fill="#262626"/>
<rect x="530.98125" y="360.70000000000005" width="6.34375" height="3.2" rx="0.8" fill="#22cf93"/>
<rect x="538.4250000000001" y="355.50000000000006" width="10.4875" height="6.199999999999999" fill="#262626"/>
<rect x="543.66875" y="360.70000000000005" width="6.34375" height="3.2" rx="0.8" fill="#22cf93"/>
<rect x="551.1125000000001" y="355.50000000000006" width="10.4875" height="6.199999999999999" fill="#262626"/>
<rect x="556.35625" y="360.70000000000005" width="6.34375" height="3.2" rx="0.8" fill="#22cf93"/>
<rect x="566.8" y="349.1" width="100.8" height="5.4" fill="#e6e6e6"/>
<rect x="566.8" y="340.90000000000003" width="100.8" height="8.2" fill="#2fb98a"/>
<rect x="567.9" y="341.90000000000003" width="10.399999999999999" height="6.199999999999999" fill="#262626"/>
<rect x="573.0999999999999" y="347.1" width="6.3" height="3.2" rx="0.8" fill="#22cf93"/>
<rect x="570.5799999999999" y="351.1" width="1.6" height="1.6" fill="#555"/><rect x="573.7299999999999" y="350.70000000000005" width="1.4" height="1.2" fill="#555"/>
<rect x="580.5" y="341.90000000000003" width="10.399999999999999" height="6.199999999999999" fill="#262626"/>
<rect x="585.6999999999999" y="347.1" width="6.3" height="3.2" rx="0.8" fill="#22cf93"/>
<rect x="583.18" y="351.1" width="1.6" height="1.6" fill="#555"/><rect x="586.3299999999999" y="350.70000000000005" width="1.4" height="1.2" fill="#555"/>
<rect x="593.1" y="341.90000000000003" width="10.399999999999999" height="6.199999999999999" fill="#262626"/>
<rect x="598.3" y="347.1" width="6.3" height="3.2" rx="0.8" fill="#22cf93"/>
<rect x="595.78" y="351.1" width="1.6" height="1.6" fill="#555"/><rect x="598.93" y="350.70000000000005" width="1.4" height="1.2" fill="#555"/>
<rect x="604.8999999999999" y="340.90000000000003" width="12.0" height="8.2" fill="#e8455e"/>
<rect x="605.6999999999999" y="341.90000000000003" width="10.399999999999999" height="6.199999999999999" fill="#262626"/>
<rect x="610.8999999999999" y="347.1" width="6.3" height="3.2" rx="0.8" fill="#e8455e"/>
<rect x="608.3799999999999" y="351.1" width="1.6" height="1.6" fill="#555"/><rect x="611.5299999999999" y="350.70000000000005" width="1.4" height="1.2" fill="#555"/>
<rect x="618.3" y="341.90000000000003" width="10.399999999999999" height="6.199999999999999" fill="#262626"/>
<rect x="623.4999999999999" y="347.1" width="6.3" height="3.2" rx="0.8" fill="#22cf93"/>
<rect x="620.9799999999999" y="351.1" width="1.6" height="1.6" fill="#555"/><rect x="624.1299999999999" y="350.70000000000005" width="1.4" height="1.2" fill="#555"/>
<rect x="630.9" y="341.90000000000003" width="10.399999999999999" height="6.199999999999999" fill="#262626"/>
<rect x="636.0999999999999" y="347.1" width="6.3" height="3.2" rx="0.8" fill="#22cf93"/>
<rect x="633.5799999999999" y="351.1" width="1.6" height="1.6" fill="#555"/><rect x="636.7299999999999" y="350.70000000000005" width="1.4" height="1.2" fill="#555"/>
<rect x="643.5" y="341.90000000000003" width="10.399999999999999" height="6.199999999999999" fill="#262626"/>
<rect x="648.6999999999999" y="347.1" width="6.3" height="3.2" rx="0.8" fill="#22cf93"/>
<rect x="646.18" y="351.1" width="1.6" height="1.6" fill="#555"/><rect x="649.3299999999999" y="350.70000000000005" width="1.4" height="1.2" fill="#555"/>
<rect x="656.1" y="341.90000000000003" width="10.399999999999999" height="6.199999999999999" fill="#262626"/>
<rect x="661.3" y="347.1" width="6.3" height="3.2" rx="0.8" fill="#22cf93"/>
<rect x="658.78" y="351.1" width="1.6" height="1.6" fill="#555"/><rect x="661.93" y="350.70000000000005" width="1.4" height="1.2" fill="#555"/>
<rect x="566.8" y="354.50000000000006" width="100.8" height="8.2" fill="#2fb98a"/>
<rect x="567.9" y="355.50000000000006" width="10.399999999999999" height="6.199999999999999" fill="#262626"/>
<rect x="573.0999999999999" y="360.70000000000005" width="6.3" height="3.2" rx="0.8" fill="#22cf93"/>
<rect x="580.5" y="355.50000000000006" width="10.399999999999999" height="6.199999999999999" fill="#262626"/>
<rect x="585.6999999999999" y="360.70000000000005" width="6.3" height="3.2" rx="0.8" fill="#22cf93"/>
<rect x="593.1" y="355.50000000000006" width="10.399999999999999" height="6.199999999999999" fill="#262626"/>
<rect x="598.3" y="360.70000000000005" width="6.3" height="3.2" rx="0.8" fill="#22cf93"/>
<rect x="604.8999999999999" y="354.50000000000006" width="12.0" height="8.2" fill="#e8455e"/>
<rect x="605.6999999999999" y="355.50000000000006" width="10.399999999999999" height="6.199999999999999" fill="#262626"/>
<rect x="610.8999999999999" y="360.70000000000005" width="6.3" height="3.2" rx="0.8" fill="#e8455e"/>
<rect x="618.3" y="355.50000000000006" width="10.399999999999999" height="6.199999999999999" fill="#262626"/>
<rect x="623.4999999999999" y="360.70000000000005" width="6.3" height="3.2" rx="0.8" fill="#22cf93"/>
<rect x="630.9" y="355.50000000000006" width="10.399999999999999" height="6.199999999999999" fill="#262626"/>
<rect x="636.0999999999999" y="360.70000000000005" width="6.3" height="3.2" rx="0.8" fill="#22cf93"/>
<rect x="643.5" y="355.50000000000006" width="10.399999999999999" height="6.199999999999999" fill="#262626"/>
<rect x="648.6999999999999" y="360.70000000000005" width="6.3" height="3.2" rx="0.8" fill="#22cf93"/>
<rect x="656.1" y="355.50000000000006" width="10.399999999999999" height="6.199999999999999" fill="#262626"/>
<rect x="661.3" y="360.70000000000005" width="6.3" height="3.2" rx="0.8" fill="#22cf93"/>
<rect x="669.5" y="342.1" width="3.6" height="3.6" fill="#fff" stroke="#666" stroke-width="0.5"/>
<rect x="669.5" y="355.1" width="3.6" height="3.6" fill="#fff" stroke="#666" stroke-width="0.5"/>
<rect x="415.6" y="369.53636363636366" width="10.7" height="27.5" rx="2.5" fill="url(#hdl)"/>
<rect x="413" y="373.33636363636367" width="11.3" height="26.5" rx="2" fill="none" stroke="#4e4e4e" stroke-width="1.1"/>
<rect x="416" y="374.73636363636365" width="7" height="18.5" fill="#d6d6d6"/>
<rect x="413.6" y="394.03636363636366" width="10.2" height="5.4" fill="#1d1d1d"/>
<circle cx="420.8" cy="383.03636363636366" r="0.9" fill="#fff"/>
<rect x="826.6" y="369.53636363636366" width="9" height="27.5" rx="2.5" fill="url(#hdl)"/>
<rect x="829" y="373.33636363636367" width="9.5" height="26.5" rx="2" fill="none" stroke="#4e4e4e" stroke-width="1.1"/>
<rect x="830.8" y="374.73636363636365" width="6" height="18.5" fill="#e0e0e0"/>
<rect x="829.6" y="394.03636363636366" width="8.4" height="5.4" fill="#1d1d1d"/>
<rect x="435" y="370.6" width="384.5" height="31.8" fill="url(#card)"/>
<rect x="435" y="371.1" width="2.6" height="30.8" fill="url(#blue)"/>
<rect x="816.5" y="371.1" width="2.6" height="30.8" fill="#a8daf0"/>
<rect x="437" y="401.90000000000003" width="381" height="3.6" fill="url(#lip)"/>
<rect x="442" y="404.8" width="376" height="1.2" fill="#333"/>
<circle cx="439.6" cy="385.3" r="4.8" fill="#e6e6e6" stroke="#b8b8b8" stroke-width="0.8"/>
<circle cx="815" cy="385.3" r="4.5" fill="#efefef" stroke="#b8b8b8" stroke-width="0.8"/>
<rect x="435" y="371.1" width="1.6" height="30.8" fill="#9dd5ee"/>
<circle cx="455.3" cy="392.8" r="1.5" fill="none" stroke="#888" stroke-width="0.6"/>
<rect x="443" y="373.1" width="25" height="1" fill="#cfe8f2"/>
<rect x="461" y="370.1" width="206" height="4" fill="url(#perf2)"/>
<rect x="461" y="400.1" width="206" height="4" fill="url(#perf3)"/>
<rect x="461.2" y="385.1" width="101.5" height="5.4" fill="#e6e6e6"/>
<rect x="461.2" y="376.90000000000003" width="101.5" height="8.2" fill="#2fb98a"/>
<rect x="462.3" y="377.90000000000003" width="10.4875" height="6.199999999999999" fill="#262626"/>
<rect x="467.54375" y="383.1" width="6.34375" height="3.2" rx="0.8" fill="#22cf93"/>
<rect x="465.00624999999997" y="387.1" width="1.6" height="1.6" fill="#555"/><rect x="468.17812499999997" y="386.70000000000005" width="1.4" height="1.2" fill="#555"/>
<rect x="474.9875" y="377.90000000000003" width="10.4875" height="6.199999999999999" fill="#262626"/>
<rect x="480.23125" y="383.1" width="6.34375" height="3.2" rx="0.8" fill="#22cf93"/>
<rect x="477.69374999999997" y="387.1" width="1.6" height="1.6" fill="#555"/><rect x="480.86562499999997" y="386.70000000000005" width="1.4" height="1.2" fill="#555"/>
<rect x="487.675" y="377.90000000000003" width="10.4875" height="6.199999999999999" fill="#262626"/>
<rect x="492.91875" y="383.1" width="6.34375" height="3.2" rx="0.8" fill="#22cf93"/>
<rect x="490.38124999999997" y="387.1" width="1.6" height="1.6" fill="#555"/><rect x="493.55312499999997" y="386.70000000000005" width="1.4" height="1.2" fill="#555"/>
<rect x="500.3625" y="377.90000000000003" width="10.4875" height="6.199999999999999" fill="#262626"/>
<rect x="505.60625" y="383.1" width="6.34375" height="3.2" rx="0.8" fill="#22cf93"/>
<rect x="503.06874999999997" y="387.1" width="1.6" height="1.6" fill="#555"/><rect x="506.24062499999997" y="386.70000000000005" width="1.4" height="1.2" fill="#555"/>
<rect x="512.25" y="376.90000000000003" width="12.0875" height="8.2" fill="#e8455e"/>
<rect x="513.05" y="377.90000000000003" width="10.4875" height="6.199999999999999" fill="#262626"/>
<rect x="518.29375" y="383.1" width="6.34375" height="3.2" rx="0.8" fill="#e8455e"/>
<rect x="515.75625" y="387.1" width="1.6" height="1.6" fill="#555"/><rect x="518.928125" y="386.70000000000005" width="1.4" height="1.2" fill="#555"/>
<rect x="525.7375000000001" y="377.90000000000003" width="10.4875" height="6.199999999999999" fill="#262626"/>
<rect x="530.98125" y="383.1" width="6.34375" height="3.2" rx="0.8" fill="#22cf93"/>
<rect x="528.44375" y="387.1" width="1.6" height="1.6" fill="#555"/><rect x="531.615625" y="386.70000000000005" width="1.4" height="1.2" fill="#555"/>
<rect x="538.4250000000001" y="377.90000000000003" width="10.4875" height="6.199999999999999" fill="#262626"/>
<rect x="543.66875" y="383.1" width="6.34375" height="3.2" rx="0.8" fill="#22cf93"/>
<rect x="541.13125" y="387.1" width="1.6" height="1.6" fill="#555"/><rect x="544.303125" y="386.70000000000005" width="1.4" height="1.2" fill="#555"/>
<rect x="551.1125000000001" y="377.90000000000003" width="10.4875" height="6.199999999999999" fill="#262626"/>
<rect x="556.35625" y="383.1" width="6.34375" height="3.2" rx="0.8" fill="#22cf93"/>
<rect x="553.81875" y="387.1" width="1.6" height="1.6" fill="#555"/><rect x="556.990625" y="386.70000000000005" width="1.4" height="1.2" fill="#555"/>
<rect x="461.2" y="390.50000000000006" width="101.5" height="8.2" fill="#2fb98a"/>
<rect x="462.3" y="391.50000000000006" width="10.4875" height="6.199999999999999" fill="#262626"/>
<rect x="467.54375" y="396.70000000000005" width="6.34375" height="3.2" rx="0.8" fill="#22cf93"/>
<rect x="474.9875" y="391.50000000000006" width="10.4875" height="6.199999999999999" fill="#262626"/>
<rect x="480.23125" y="396.70000000000005" width="6.34375" height="3.2" rx="0.8" fill="#22cf93"/>
<rect x="487.675" y="391.50000000000006" width="10.4875" height="6.199999999999999" fill="#262626"/>
<rect x="492.91875" y="396.70000000000005" width="6.34375" height="3.2" rx="0.8" fill="#22cf93"/>
<rect x="499.5625" y="390.50000000000006" width="12.0875" height="8.2" fill="#e8455e"/>
<rect x="500.3625" y="391.50000000000006" width="10.4875" height="6.199999999999999" fill="#262626"/>
<rect x="505.60625" y="396.70000000000005" width="6.34375" height="3.2" rx="0.8" fill="#e8455e"/>
<rect x="513.05" y="391.50000000000006" width="10.4875" height="6.199999999999999" fill="#262626"/>
<rect x="518.29375" y="396.70000000000005" width="6.34375" height="3.2" rx="0.8" fill="#22cf93"/>
<rect x="525.7375000000001" y="391.50000000000006" width="10.4875" height="6.199999999999999" fill="#262626"/>
<rect x="530.98125" y="396.70000000000005" width="6.34375" height="3.2" rx="0.8" fill="#22cf93"/>
<rect x="538.4250000000001" y="391.50000000000006" width="10.4875" height="6.199999999999999" fill="#262626"/>
<rect x="543.66875" y="396.70000000000005" width="6.34375" height="3.2" rx="0.8" fill="#22cf93"/>
<rect x="551.1125000000001" y="391.50000000000006" width="10.4875" height="6.199999999999999" fill="#262626"/>
<rect x="556.35625" y="396.70000000000005" width="6.34375" height="3.2" rx="0.8" fill="#22cf93"/>
<rect x="566.8" y="385.1" width="100.8" height="5.4" fill="#e6e6e6"/>
<rect x="566.8" y="376.90000000000003" width="100.8" height="8.2" fill="#2fb98a"/>
<rect x="567.9" y="377.90000000000003" width="10.399999999999999" height="6.199999999999999" fill="#262626"/>
<rect x="573.0999999999999" y="383.1" width="6.3" height="3.2" rx="0.8" fill="#22cf93"/>
<rect x="570.5799999999999" y="387.1" width="1.6" height="1.6" fill="#555"/><rect x="573.7299999999999" y="386.70000000000005" width="1.4" height="1.2" fill="#555"/>
<rect x="580.5" y="377.90000000000003" width="10.399999999999999" height="6.199999999999999" fill="#262626"/>
<rect x="585.6999999999999" y="383.1" width="6.3" height="3.2" rx="0.8" fill="#22cf93"/>
<rect x="583.18" y="387.1" width="1.6" height="1.6" fill="#555"/><rect x="586.3299999999999" y="386.70000000000005" width="1.4" height="1.2" fill="#555"/>
<rect x="593.1" y="377.90000000000003" width="10.399999999999999" height="6.199999999999999" fill="#262626"/>
<rect x="598.3" y="383.1" width="6.3" height="3.2" rx="0.8" fill="#22cf93"/>
<rect x="595.78" y="387.1" width="1.6" height="1.6" fill="#555"/><rect x="598.93" y="386.70000000000005" width="1.4" height="1.2" fill="#555"/>
<rect x="605.6999999999999" y="377.90000000000003" width="10.399999999999999" height="6.199999999999999" fill="#262626"/>
<rect x="610.8999999999999" y="383.1" width="6.3" height="3.2" rx="0.8" fill="#22cf93"/>
<rect x="608.3799999999999" y="387.1" width="1.6" height="1.6" fill="#555"/><rect x="611.5299999999999" y="386.70000000000005" width="1.4" height="1.2" fill="#555"/>
<rect x="618.3" y="377.90000000000003" width="10.399999999999999" height="6.199999999999999" fill="#262626"/>
<rect x="623.4999999999999" y="383.1" width="6.3" height="3.2" rx="0.8" fill="#22cf93"/>
<rect x="620.9799999999999" y="387.1" width="1.6" height="1.6" fill="#555"/><rect x="624.1299999999999" y="386.70000000000005" width="1.4" height="1.2" fill="#555"/>
<rect x="630.0999999999999" y="376.90000000000003" width="12.0" height="8.2" fill="#8878ee"/>
<rect x="630.9" y="377.90000000000003" width="10.399999999999999" height="6.199999999999999" fill="#262626"/>
<rect x="636.0999999999999" y="383.1" width="6.3" height="3.2" rx="0.8" fill="#8878ee"/>
<rect x="633.5799999999999" y="387.1" width="1.6" height="1.6" fill="#555"/><rect x="636.7299999999999" y="386.70000000000005" width="1.4" height="1.2" fill="#555"/>
<rect x="643.5" y="377.90000000000003" width="10.399999999999999" height="6.199999999999999" fill="#262626"/>
<rect x="648.6999999999999" y="383.1" width="6.3" height="3.2" rx="0.8" fill="#22cf93"/>
<rect x="646.18" y="387.1" width="1.6" height="1.6" fill="#555"/><rect x="649.3299999999999" y="386.70000000000005" width="1.4" height="1.2" fill="#555"/>
<rect x="656.1" y="377.90000000000003" width="10.399999999999999" height="6.199999999999999" fill="#262626"/>
<rect x="661.3" y="383.1" width="6.3" height="3.2" rx="0.8" fill="#22cf93"/>
<rect x="658.78" y="387.1" width="1.6" height="1.6" fill="#555"/><rect x="661.93" y="386.70000000000005" width="1.4" height="1.2" fill="#555"/>
<rect x="566.8" y="390.50000000000006" width="100.8" height="8.2" fill="#2fb98a"/>
<rect x="567.9" y="391.50000000000006" width="10.399999999999999" height="6.199999999999999" fill="#262626"/>
<rect x="573.0999999999999" y="396.70000000000005" width="6.3" height="3.2" rx="0.8" fill="#22cf93"/>
<rect x="580.5" y="391.50000000000006" width="10.399999999999999" height="6.199999999999999" fill="#262626"/>
<rect x="585.6999999999999" y="396.70000000000005" width="6.3" height="3.2" rx="0.8" fill="#22cf93"/>
<rect x="593.1" y="391.50000000000006" width="10.399999999999999" height="6.199999999999999" fill="#262626"/>
<rect x="598.3" y="396.70000000000005" width="6.3" height="3.2" rx="0.8" fill="#22cf93"/>
<rect x="605.6999999999999" y="391.50000000000006" width="10.399999999999999" height="6.199999999999999" fill="#262626"/>
<rect x="610.8999999999999" y="396.70000000000005" width="6.3" height="3.2" rx="0.8" fill="#22cf93"/>
<rect x="618.3" y="391.50000000000006" width="10.399999999999999" height="6.199999999999999" fill="#262626"/>
<rect x="623.4999999999999" y="396.70000000000005" width="6.3" height="3.2" rx="0.8" fill="#22cf93"/>
<rect x="630.9" y="391.50000000000006" width="10.399999999999999" height="6.199999999999999" fill="#262626"/>
<rect x="636.0999999999999" y="396.70000000000005" width="6.3" height="3.2" rx="0.8" fill="#22cf93"/>
<rect x="643.5" y="391.50000000000006" width="10.399999999999999" height="6.199999999999999" fill="#262626"/>
<rect x="648.6999999999999" y="396.70000000000005" width="6.3" height="3.2" rx="0.8" fill="#22cf93"/>
<rect x="656.1" y="391.50000000000006" width="10.399999999999999" height="6.199999999999999" fill="#262626"/>
<rect x="661.3" y="396.70000000000005" width="6.3" height="3.2" rx="0.8" fill="#22cf93"/>
<rect x="669.5" y="378.1" width="3.6" height="3.6" fill="#fff" stroke="#666" stroke-width="0.5"/>
<rect x="669.5" y="391.1" width="3.6" height="3.6" fill="#fff" stroke="#666" stroke-width="0.5"/>
<rect x="415.6" y="405.9636363636364" width="10.7" height="27.5" rx="2.5" fill="url(#hdl)"/>
<rect x="413" y="409.7636363636364" width="11.3" height="26.5" rx="2" fill="none" stroke="#4e4e4e" stroke-width="1.1"/>
<rect x="416" y="411.1636363636364" width="7" height="18.5" fill="#d6d6d6"/>
<rect x="413.6" y="430.4636363636364" width="10.2" height="5.4" fill="#1d1d1d"/>
<circle cx="420.8" cy="419.4636363636364" r="0.9" fill="#fff"/>
<rect x="826.6" y="405.9636363636364" width="9" height="27.5" rx="2.5" fill="url(#hdl)"/>
<rect x="829" y="409.7636363636364" width="9.5" height="26.5" rx="2" fill="none" stroke="#4e4e4e" stroke-width="1.1"/>
<rect x="830.8" y="411.1636363636364" width="6" height="18.5" fill="#e0e0e0"/>
<rect x="829.6" y="430.4636363636364" width="8.4" height="5.4" fill="#1d1d1d"/>
<rect x="435" y="406.8" width="384.5" height="31.8" fill="url(#card)"/>
<rect x="435" y="407.3" width="2.6" height="30.8" fill="url(#blue)"/>
<rect x="816.5" y="407.3" width="2.6" height="30.8" fill="#a8daf0"/>
<rect x="437" y="438.1" width="381" height="3.6" fill="url(#lip)"/>
<rect x="442" y="441.0" width="376" height="1.2" fill="#333"/>
<circle cx="439.6" cy="421.5" r="4.8" fill="#e6e6e6" stroke="#b8b8b8" stroke-width="0.8"/>
<circle cx="815" cy="421.5" r="4.5" fill="#efefef" stroke="#b8b8b8" stroke-width="0.8"/>
<rect x="435" y="407.3" width="1.6" height="30.8" fill="#9dd5ee"/>
<circle cx="455.3" cy="429.0" r="1.5" fill="none" stroke="#888" stroke-width="0.6"/>
<rect x="443" y="409.3" width="25" height="1" fill="#cfe8f2"/>
<rect x="460.7" y="412.6" width="76.8" height="22.5" fill="#2fb98a"/>
<rect x="461.7" y="423.6" width="74.8" height="1" fill="#bfe8d8"/>
<path d="M462.0 415.1H464.0V413.70000000000005H470.2V415.1H472.2V422.20000000000005H462.0Z" fill="#262626"/>
<rect x="468.12399999999997" y="420.90000000000003" width="5.888" height="3.2" rx="0.8" fill="#22cf93"/>
<path d="M474.8 415.1H476.8V413.70000000000005H483.0V415.1H485.0V422.20000000000005H474.8Z" fill="#262626"/>
<rect x="480.924" y="420.90000000000003" width="5.888" height="3.2" rx="0.8" fill="#22cf93"/>
<path d="M487.6 415.1H489.6V413.70000000000005H495.8V415.1H497.8V422.20000000000005H487.6Z" fill="#262626"/>
<rect x="493.724" y="420.90000000000003" width="5.888" height="3.2" rx="0.8" fill="#22cf93"/>
<path d="M500.4 415.1H502.4V413.70000000000005H508.59999999999997V415.1H510.59999999999997V422.20000000000005H500.4Z" fill="#262626"/>
<rect x="506.52399999999994" y="420.90000000000003" width="5.888" height="3.2" rx="0.8" fill="#22cf93"/>
<path d="M513.1999999999999 415.1H515.1999999999999V413.70000000000005H521.4V415.1H523.4V422.20000000000005H513.1999999999999Z" fill="#262626"/>
<rect x="519.324" y="420.90000000000003" width="5.888" height="3.2" rx="0.8" fill="#22cf93"/>
<rect x="525.3" y="413.20000000000005" width="11.6" height="9.8" fill="#f2f2f2" stroke="#f08a4b" stroke-width="1"/>
<path d="M525.9999999999999 415.1H527.9999999999999V413.70000000000005H534.1999999999999V415.1H536.1999999999999V422.20000000000005H525.9999999999999Z" fill="#262626"/>
<rect x="532.1239999999999" y="420.90000000000003" width="5.888" height="3.2" rx="0.8" fill="#f08a4b"/>
<path d="M462.0 426.90000000000003H464.0V425.50000000000006H470.2V426.90000000000003H472.2V434.00000000000006H462.0Z" fill="#262626"/>
<rect x="468.12399999999997" y="432.70000000000005" width="5.888" height="3.2" rx="0.8" fill="#22cf93"/>
<path d="M474.8 426.90000000000003H476.8V425.50000000000006H483.0V426.90000000000003H485.0V434.00000000000006H474.8Z" fill="#262626"/>
<rect x="480.924" y="432.70000000000005" width="5.888" height="3.2" rx="0.8" fill="#22cf93"/>
<rect x="486.90000000000003" y="425.00000000000006" width="11.6" height="9.8" fill="#f2f2f2" stroke="#f08a4b" stroke-width="1"/>
<path d="M487.6 426.90000000000003H489.6V425.50000000000006H495.8V426.90000000000003H497.8V434.00000000000006H487.6Z" fill="#262626"/>
<rect x="493.724" y="432.70000000000005" width="5.888" height="3.2" rx="0.8" fill="#f08a4b"/>
<path d="M500.4 426.90000000000003H502.4V425.50000000000006H508.59999999999997V426.90000000000003H510.59999999999997V434.00000000000006H500.4Z" fill="#262626"/>
<rect x="506.52399999999994" y="432.70000000000005" width="5.888" height="3.2" rx="0.8" fill="#22cf93"/>
<path d="M513.1999999999999 426.90000000000003H515.1999999999999V425.50000000000006H521.4V426.90000000000003H523.4V434.00000000000006H513.1999999999999Z" fill="#262626"/>
<rect x="519.324" y="432.70000000000005" width="5.888" height="3.2" rx="0.8" fill="#22cf93"/>
<path d="M525.9999999999999 426.90000000000003H527.9999999999999V425.50000000000006H534.1999999999999V426.90000000000003H536.1999999999999V434.00000000000006H525.9999999999999Z" fill="#262626"/>
<rect x="532.1239999999999" y="432.70000000000005" width="5.888" height="3.2" rx="0.8" fill="#22cf93"/>
<rect x="539.8" y="412.6" width="76.8" height="22.5" fill="#2fb98a"/>
<rect x="540.8" y="423.6" width="74.8" height="1" fill="#bfe8d8"/>
<path d="M541.0999999999999 415.1H543.0999999999999V413.70000000000005H549.3V415.1H551.3V422.20000000000005H541.0999999999999Z" fill="#262626"/>
<rect x="547.2239999999999" y="420.90000000000003" width="5.888" height="3.2" rx="0.8" fill="#22cf93"/>
<path d="M553.8999999999999 415.1H555.8999999999999V413.70000000000005H562.0999999999999V415.1H564.0999999999999V422.20000000000005H553.8999999999999Z" fill="#262626"/>
<rect x="560.0239999999999" y="420.90000000000003" width="5.888" height="3.2" rx="0.8" fill="#22cf93"/>
<rect x="566.0" y="413.20000000000005" width="11.6" height="9.8" fill="#f2f2f2" stroke="#f08a4b" stroke-width="1"/>
<path d="M566.6999999999999 415.1H568.6999999999999V413.70000000000005H574.9V415.1H576.9V422.20000000000005H566.6999999999999Z" fill="#262626"/>
<rect x="572.824" y="420.90000000000003" width="5.888" height="3.2" rx="0.8" fill="#f08a4b"/>
<path d="M579.4999999999999 415.1H581.4999999999999V413.70000000000005H587.6999999999999V415.1H589.6999999999999V422.20000000000005H579.4999999999999Z" fill="#262626"/>
<rect x="585.6239999999999" y="420.90000000000003" width="5.888" height="3.2" rx="0.8" fill="#22cf93"/>
<path d="M592.3 415.1H594.3V413.70000000000005H600.5V415.1H602.5V422.20000000000005H592.3Z" fill="#262626"/>
<rect x="598.424" y="420.90000000000003" width="5.888" height="3.2" rx="0.8" fill="#22cf93"/>
<path d="M605.0999999999999 415.1H607.0999999999999V413.70000000000005H613.3V415.1H615.3V422.20000000000005H605.0999999999999Z" fill="#262626"/>
<rect x="611.2239999999999" y="420.90000000000003" width="5.888" height="3.2" rx="0.8" fill="#22cf93"/>
<path d="M541.0999999999999 426.90000000000003H543.0999999999999V425.50000000000006H549.3V426.90000000000003H551.3V434.00000000000006H541.0999999999999Z" fill="#262626"/>
<rect x="547.2239999999999" y="432.70000000000005" width="5.888" height="3.2" rx="0.8" fill="#22cf93"/>
<path d="M553.8999999999999 426.90000000000003H555.8999999999999V425.50000000000006H562.0999999999999V426.90000000000003H564.0999999999999V434.00000000000006H553.8999999999999Z" fill="#262626"/>
<rect x="560.0239999999999" y="432.70000000000005" width="5.888" height="3.2" rx="0.8" fill="#22cf93"/>
<rect x="566.0" y="425.00000000000006" width="11.6" height="9.8" fill="#f2f2f2" stroke="#f08a4b" stroke-width="1"/>
<path d="M566.6999999999999 426.90000000000003H568.6999999999999V425.50000000000006H574.9V426.90000000000003H576.9V434.00000000000006H566.6999999999999Z" fill="#262626"/>
<rect x="572.824" y="432.70000000000005" width="5.888" height="3.2" rx="0.8" fill="#f08a4b"/>
<path d="M579.4999999999999 426.90000000000003H581.4999999999999V425.50000000000006H587.6999999999999V426.90000000000003H589.6999999999999V434.00000000000006H579.4999999999999Z" fill="#262626"/>
<rect x="585.6239999999999" y="432.70000000000005" width="5.888" height="3.2" rx="0.8" fill="#22cf93"/>
<path d="M592.3 426.90000000000003H594.3V425.50000000000006H600.5V426.90000000000003H602.5V434.00000000000006H592.3Z" fill="#262626"/>
<rect x="598.424" y="432.70000000000005" width="5.888" height="3.2" rx="0.8" fill="#22cf93"/>
<path d="M605.0999999999999 426.90000000000003H607.0999999999999V425.50000000000006H613.3V426.90000000000003H615.3V434.00000000000006H605.0999999999999Z" fill="#262626"/>
<rect x="611.2239999999999" y="432.70000000000005" width="5.888" height="3.2" rx="0.8" fill="#22cf93"/>
<rect x="619.5" y="412.6" width="76.8" height="22.5" fill="#2fb98a"/>
<rect x="620.5" y="423.6" width="74.8" height="1" fill="#bfe8d8"/>
<path d="M620.8 415.1H622.8V413.70000000000005H629.0V415.1H631.0V422.20000000000005H620.8Z" fill="#262626"/>
<rect x="626.924" y="420.90000000000003" width="5.888" height="3.2" rx="0.8" fill="#22cf93"/>
<path d="M633.5999999999999 415.1H635.5999999999999V413.70000000000005H641.8V415.1H643.8V422.20000000000005H633.5999999999999Z" fill="#262626"/>
<rect x="639.7239999999999" y="420.90000000000003" width="5.888" height="3.2" rx="0.8" fill="#22cf93"/>
<rect x="645.7" y="413.20000000000005" width="11.6" height="9.8" fill="#f2f2f2" stroke="#f08a4b" stroke-width="1"/>
<path d="M646.4 415.1H648.4V413.70000000000005H654.6V415.1H656.6V422.20000000000005H646.4Z" fill="#262626"/>
<rect x="652.524" y="420.90000000000003" width="5.888" height="3.2" rx="0.8" fill="#f08a4b"/>
<path d="M659.1999999999999 415.1H661.1999999999999V413.70000000000005H667.4V415.1H669.4V422.20000000000005H659.1999999999999Z" fill="#262626"/>
<rect x="665.324" y="420.90000000000003" width="5.888" height="3.2" rx="0.8" fill="#22cf93"/>
<path d="M672.0 415.1H674.0V413.70000000000005H680.2V415.1H682.2V422.20000000000005H672.0Z" fill="#262626"/>
<rect x="678.124" y="420.90000000000003" width="5.888" height="3.2" rx="0.8" fill="#22cf93"/>
<path d="M684.8 415.1H686.8V413.70000000000005H693.0V415.1H695.0V422.20000000000005H684.8Z" fill="#262626"/>
<rect x="690.924" y="420.90000000000003" width="5.888" height="3.2" rx="0.8" fill="#22cf93"/>
<path d="M620.8 426.90000000000003H622.8V425.50000000000006H629.0V426.90000000000003H631.0V434.00000000000006H620.8Z" fill="#262626"/>
<rect x="626.924" y="432.70000000000005" width="5.888" height="3.2" rx="0.8" fill="#22cf93"/>
<path d="M633.5999999999999 426.90000000000003H635.5999999999999V425.50000000000006H641.8V426.90000000000003H643.8V434.00000000000006H633.5999999999999Z" fill="#262626"/>
<rect x="639.7239999999999" y="432.70000000000005" width="5.888" height="3.2" rx="0.8" fill="#22cf93"/>
<path d="M646.4 426.90000000000003H648.4V425.50000000000006H654.6V426.90000000000003H656.6V434.00000000000006H646.4Z" fill="#262626"/>
<rect x="652.524" y="432.70000000000005" width="5.888" height="3.2" rx="0.8" fill="#22cf93"/>
<path d="M659.1999999999999 426.90000000000003H661.1999999999999V425.50000000000006H667.4V426.90000000000003H669.4V434.00000000000006H659.1999999999999Z" fill="#262626"/>
<rect x="665.324" y="432.70000000000005" width="5.888" height="3.2" rx="0.8" fill="#22cf93"/>
<path d="M672.0 426.90000000000003H674.0V425.50000000000006H680.2V426.90000000000003H682.2V434.00000000000006H672.0Z" fill="#262626"/>
<rect x="678.124" y="432.70000000000005" width="5.888" height="3.2" rx="0.8" fill="#22cf93"/>
<rect x="684.1" y="425.00000000000006" width="11.6" height="9.8" fill="#f2f2f2" stroke="#f08a4b" stroke-width="1"/>
<path d="M684.8 426.90000000000003H686.8V425.50000000000006H693.0V426.90000000000003H695.0V434.00000000000006H684.8Z" fill="#262626"/>
<rect x="690.924" y="432.70000000000005" width="5.888" height="3.2" rx="0.8" fill="#f08a4b"/>
<rect x="698.6" y="412.6" width="76.8" height="22.5" fill="#2fb98a"/>
<rect x="699.6" y="423.6" width="74.8" height="1" fill="#bfe8d8"/>
<path d="M699.9 415.1H701.9V413.70000000000005H708.1V415.1H710.1V422.20000000000005H699.9Z" fill="#262626"/>
<rect x="706.024" y="420.90000000000003" width="5.888" height="3.2" rx="0.8" fill="#22cf93"/>
<path d="M712.6999999999999 415.1H714.6999999999999V413.70000000000005H720.9V415.1H722.9V422.20000000000005H712.6999999999999Z" fill="#262626"/>
<rect x="718.824" y="420.90000000000003" width="5.888" height="3.2" rx="0.8" fill="#22cf93"/>
<path d="M725.5 415.1H727.5V413.70000000000005H733.7V415.1H735.7V422.20000000000005H725.5Z" fill="#262626"/>
<rect x="731.624" y="420.90000000000003" width="5.888" height="3.2" rx="0.8" fill="#22cf93"/>
<rect x="737.6" y="413.20000000000005" width="11.6" height="9.8" fill="#f2f2f2" stroke="#f08a4b" stroke-width="1"/>
<path d="M738.3 415.1H740.3V413.70000000000005H746.5V415.1H748.5V422.20000000000005H738.3Z" fill="#262626"/>
<rect x="744.424" y="420.90000000000003" width="5.888" height="3.2" rx="0.8" fill="#f08a4b"/>
<path d="M751.1 415.1H753.1V413.70000000000005H759.3000000000001V415.1H761.3000000000001V422.20000000000005H751.1Z" fill="#262626"/>
<rect x="757.224" y="420.90000000000003" width="5.888" height="3.2" rx="0.8" fill="#22cf93"/>
<path d="M763.9 415.1H765.9V413.70000000000005H772.1V415.1H774.1V422.20000000000005H763.9Z" fill="#262626"/>
<rect x="770.024" y="420.90000000000003" width="5.888" height="3.2" rx="0.8" fill="#22cf93"/>
<path d="M699.9 426.90000000000003H701.9V425.50000000000006H708.1V426.90000000000003H710.1V434.00000000000006H699.9Z" fill="#262626"/>
<rect x="706.024" y="432.70000000000005" width="5.888" height="3.2" rx="0.8" fill="#22cf93"/>
<path d="M712.6999999999999 426.90000000000003H714.6999999999999V425.50000000000006H720.9V426.90000000000003H722.9V434.00000000000006H712.6999999999999Z" fill="#262626"/>
<rect x="718.824" y="432.70000000000005" width="5.888" height="3.2" rx="0.8" fill="#22cf93"/>
<rect x="724.8000000000001" y="425.00000000000006" width="11.6" height="9.8" fill="#f2f2f2" stroke="#e8455e" stroke-width="1"/>
<path d="M725.5 426.90000000000003H727.5V425.50000000000006H733.7V426.90000000000003H735.7V434.00000000000006H725.5Z" fill="#262626"/>
<rect x="731.624" y="432.70000000000005" width="5.888" height="3.2" rx="0.8" fill="#e8455e"/>
<rect x="737.6" y="425.00000000000006" width="11.6" height="9.8" fill="#f2f2f2" stroke="#e8455e" stroke-width="1"/>
<path d="M738.3 426.90000000000003H740.3V425.50000000000006H746.5V426.90000000000003H748.5V434.00000000000006H738.3Z" fill="#262626"/>
<rect x="744.424" y="432.70000000000005" width="5.888" height="3.2" rx="0.8" fill="#e8455e"/>
<path d="M751.1 426.90000000000003H753.1V425.50000000000006H759.3000000000001V426.90000000000003H761.3000000000001V434.00000000000006H751.1Z" fill="#262626"/>
<rect x="757.224" y="432.70000000000005" width="5.888" height="3.2" rx="0.8" fill="#22cf93"/>
<path d="M763.9 426.90000000000003H765.9V425.50000000000006H772.1V426.90000000000003H774.1V434.00000000000006H763.9Z" fill="#262626"/>
<rect x="770.024" y="432.70000000000005" width="5.888" height="3.2" rx="0.8" fill="#22cf93"/>
<rect x="778" y="421.1" width="26.3" height="5.4" fill="#fafafa"/>
<rect x="778" y="412.6" width="26.3" height="8.5" fill="#2fb98a"/>
<rect x="779.1" y="413.6" width="10.95" height="6.5" fill="#262626"/>
<rect x="784.575" y="419.1" width="6.575" height="3.2" rx="0.8" fill="#22cf93"/>
<rect x="781.945" y="423.1" width="1.6" height="1.6" fill="#555"/><rect x="785.2325" y="422.70000000000005" width="1.4" height="1.2" fill="#555"/>
<rect x="792.25" y="413.6" width="10.95" height="6.5" fill="#262626"/>
<rect x="797.725" y="419.1" width="6.575" height="3.2" rx="0.8" fill="#22cf93"/>
<rect x="795.095" y="423.1" width="1.6" height="1.6" fill="#555"/><rect x="798.3824999999999" y="422.70000000000005" width="1.4" height="1.2" fill="#555"/>
<rect x="778" y="426.5" width="26.3" height="8.5" fill="#2fb98a"/>
<rect x="779.1" y="427.5" width="10.95" height="6.5" fill="#262626"/>
<rect x="784.575" y="433.0" width="6.575" height="3.2" rx="0.8" fill="#22cf93"/>
<rect x="792.25" y="427.5" width="10.95" height="6.5" fill="#262626"/>
<rect x="797.725" y="433.0" width="6.575" height="3.2" rx="0.8" fill="#22cf93"/>
<rect x="415.6" y="441.8909090909091" width="10.7" height="27.5" rx="2.5" fill="url(#hdl)"/>
<rect x="413" y="445.6909090909091" width="11.3" height="26.5" rx="2" fill="none" stroke="#4e4e4e" stroke-width="1.1"/>
<rect x="416" y="447.09090909090907" width="7" height="18.5" fill="#d6d6d6"/>
<rect x="413.6" y="466.3909090909091" width="10.2" height="5.4" fill="#1d1d1d"/>
<circle cx="420.8" cy="455.3909090909091" r="0.9" fill="#fff"/>
<rect x="826.6" y="441.8909090909091" width="9" height="27.5" rx="2.5" fill="url(#hdl)"/>
<rect x="829" y="445.6909090909091" width="9.5" height="26.5" rx="2" fill="none" stroke="#4e4e4e" stroke-width="1.1"/>
<rect x="830.8" y="447.09090909090907" width="6" height="18.5" fill="#e0e0e0"/>
<rect x="829.6" y="466.3909090909091" width="8.4" height="5.4" fill="#1d1d1d"/>
<rect x="435" y="442.5" width="384.5" height="31.8" fill="url(#card)"/>
<rect x="435" y="443.0" width="2.6" height="30.8" fill="url(#blue)"/>
<rect x="816.5" y="443.0" width="2.6" height="30.8" fill="#a8daf0"/>
<rect x="437" y="473.8" width="381" height="3.6" fill="url(#lip)"/>
<rect x="442" y="476.7" width="376" height="1.2" fill="#333"/>
<circle cx="439.6" cy="457.2" r="4.8" fill="#e6e6e6" stroke="#b8b8b8" stroke-width="0.8"/>
<circle cx="815" cy="457.2" r="4.5" fill="#efefef" stroke="#b8b8b8" stroke-width="0.8"/>
<rect x="435" y="443.0" width="1.6" height="30.8" fill="#9dd5ee"/>
<circle cx="455.3" cy="464.7" r="1.5" fill="none" stroke="#888" stroke-width="0.6"/>
<rect x="443" y="445.0" width="25" height="1" fill="#cfe8f2"/>
<rect x="460.7" y="448.3" width="76.8" height="22.5" fill="#2fb98a"/>
<rect x="461.7" y="459.3" width="74.8" height="1" fill="#bfe8d8"/>
<rect x="461.3" y="448.90000000000003" width="11.6" height="9.8" fill="#f2f2f2" stroke="#f08a4b" stroke-width="1"/>
<path d="M462.0 450.8H464.0V449.40000000000003H470.2V450.8H472.2V457.90000000000003H462.0Z" fill="#262626"/>
<rect x="468.12399999999997" y="456.6" width="5.888" height="3.2" rx="0.8" fill="#f08a4b"/>
<path d="M474.8 450.8H476.8V449.40000000000003H483.0V450.8H485.0V457.90000000000003H474.8Z" fill="#262626"/>
<rect x="480.924" y="456.6" width="5.888" height="3.2" rx="0.8" fill="#22cf93"/>
<path d="M487.6 450.8H489.6V449.40000000000003H495.8V450.8H497.8V457.90000000000003H487.6Z" fill="#262626"/>
<rect x="493.724" y="456.6" width="5.888" height="3.2" rx="0.8" fill="#22cf93"/>
<path d="M500.4 450.8H502.4V449.40000000000003H508.59999999999997V450.8H510.59999999999997V457.90000000000003H500.4Z" fill="#262626"/>
<rect x="506.52399999999994" y="456.6" width="5.888" height="3.2" rx="0.8" fill="#22cf93"/>
<path d="M513.1999999999999 450.8H515.1999999999999V449.40000000000003H521.4V450.8H523.4V457.90000000000003H513.1999999999999Z" fill="#262626"/>
<rect x="519.324" y="456.6" width="5.888" height="3.2" rx="0.8" fill="#22cf93"/>
<path d="M525.9999999999999 450.8H527.9999999999999V449.40000000000003H534.1999999999999V450.8H536.1999999999999V457.90000000000003H525.9999999999999Z" fill="#262626"/>
<rect x="532.1239999999999" y="456.6" width="5.888" height="3.2" rx="0.8" fill="#22cf93"/>
<path d="M462.0 462.6H464.0V461.20000000000005H470.2V462.6H472.2V469.70000000000005H462.0Z" fill="#262626"/>
<rect x="468.12399999999997" y="468.40000000000003" width="5.888" height="3.2" rx="0.8" fill="#22cf93"/>
<path d="M474.8 462.6H476.8V461.20000000000005H483.0V462.6H485.0V469.70000000000005H474.8Z" fill="#262626"/>
<rect x="480.924" y="468.40000000000003" width="5.888" height="3.2" rx="0.8" fill="#22cf93"/>
<path d="M487.6 462.6H489.6V461.20000000000005H495.8V462.6H497.8V469.70000000000005H487.6Z" fill="#262626"/>
<rect x="493.724" y="468.40000000000003" width="5.888" height="3.2" rx="0.8" fill="#22cf93"/>
<rect x="499.7" y="460.70000000000005" width="11.6" height="9.8" fill="#f2f2f2" stroke="#f08a4b" stroke-width="1"/>
<path d="M500.4 462.6H502.4V461.20000000000005H508.59999999999997V462.6H510.59999999999997V469.70000000000005H500.4Z" fill="#262626"/>
<rect x="506.52399999999994" y="468.40000000000003" width="5.888" height="3.2" rx="0.8" fill="#f08a4b"/>
<path d="M513.1999999999999 462.6H515.1999999999999V461.20000000000005H521.4V462.6H523.4V469.70000000000005H513.1999999999999Z" fill="#262626"/>
<rect x="519.324" y="468.40000000000003" width="5.888" height="3.2" rx="0.8" fill="#22cf93"/>
<path d="M525.9999999999999 462.6H527.9999999999999V461.20000000000005H534.1999999999999V462.6H536.1999999999999V469.70000000000005H525.9999999999999Z" fill="#262626"/>
<rect x="532.1239999999999" y="468.40000000000003" width="5.888" height="3.2" rx="0.8" fill="#22cf93"/>
<rect x="539.8" y="448.3" width="76.8" height="22.5" fill="#2fb98a"/>
<rect x="540.8" y="459.3" width="74.8" height="1" fill="#bfe8d8"/>
<path d="M541.0999999999999 450.8H543.0999999999999V449.40000000000003H549.3V450.8H551.3V457.90000000000003H541.0999999999999Z" fill="#262626"/>
<rect x="547.2239999999999" y="456.6" width="5.888" height="3.2" rx="0.8" fill="#22cf93"/>
<rect x="553.1999999999999" y="448.90000000000003" width="11.6" height="9.8" fill="#f2f2f2" stroke="#e8455e" stroke-width="1"/>
<path d="M553.8999999999999 450.8H555.8999999999999V449.40000000000003H562.0999999999999V450.8H564.0999999999999V457.90000000000003H553.8999999999999Z" fill="#262626"/>
<rect x="560.0239999999999" y="456.6" width="5.888" height="3.2" rx="0.8" fill="#e8455e"/>
<path d="M566.6999999999999 450.8H568.6999999999999V449.40000000000003H574.9V450.8H576.9V457.90000000000003H566.6999999999999Z" fill="#262626"/>
<rect x="572.824" y="456.6" width="5.888" height="3.2" rx="0.8" fill="#22cf93"/>
<path d="M579.4999999999999 450.8H581.4999999999999V449.40000000000003H587.6999999999999V450.8H589.6999999999999V457.90000000000003H579.4999999999999Z" fill="#262626"/>
<rect x="585.6239999999999" y="456.6" width="5.888" height="3.2" rx="0.8" fill="#22cf93"/>
<path d="M592.3 450.8H594.3V449.40000000000003H600.5V450.8H602.5V457.90000000000003H592.3Z" fill="#262626"/>
<rect x="598.424" y="456.6" width="5.888" height="3.2" rx="0.8" fill="#22cf93"/>
<path d="M605.0999999999999 450.8H607.0999999999999V449.40000000000003H613.3V450.8H615.3V457.90000000000003H605.0999999999999Z" fill="#262626"/>
<rect x="611.2239999999999" y="456.6" width="5.888" height="3.2" rx="0.8" fill="#22cf93"/>
<path d="M541.0999999999999 462.6H543.0999999999999V461.20000000000005H549.3V462.6H551.3V469.70000000000005H541.0999999999999Z" fill="#262626"/>
<rect x="547.2239999999999" y="468.40000000000003" width="5.888" height="3.2" rx="0.8" fill="#22cf93"/>
<path d="M553.8999999999999 462.6H555.8999999999999V461.20000000000005H562.0999999999999V462.6H564.0999999999999V469.70000000000005H553.8999999999999Z" fill="#262626"/>
<rect x="560.0239999999999" y="468.40000000000003" width="5.888" height="3.2" rx="0.8" fill="#22cf93"/>
<path d="M566.6999999999999 462.6H568.6999999999999V461.20000000000005H574.9V462.6H576.9V469.70000000000005H566.6999999999999Z" fill="#262626"/>
<rect x="572.824" y="468.40000000000003" width="5.888" height="3.2" rx="0.8" fill="#22cf93"/>
<path d="M579.4999999999999 462.6H581.4999999999999V461.20000000000005H587.6999999999999V462.6H589.6999999999999V469.70000000000005H579.4999999999999Z" fill="#262626"/>
<rect x="585.6239999999999" y="468.40000000000003" width="5.888" height="3.2" rx="0.8" fill="#22cf93"/>
<path d="M592.3 462.6H594.3V461.20000000000005H600.5V462.6H602.5V469.70000000000005H592.3Z" fill="#262626"/>
<rect x="598.424" y="468.40000000000003" width="5.888" height="3.2" rx="0.8" fill="#22cf93"/>
<path d="M605.0999999999999 462.6H607.0999999999999V461.20000000000005H613.3V462.6H615.3V469.70000000000005H605.0999999999999Z" fill="#262626"/>
<rect x="611.2239999999999" y="468.40000000000003" width="5.888" height="3.2" rx="0.8" fill="#22cf93"/>
<rect x="619.5" y="448.3" width="76.8" height="22.5" fill="#2fb98a"/>
<rect x="620.5" y="459.3" width="74.8" height="1" fill="#bfe8d8"/>
<path d="M620.8 450.8H622.8V449.40000000000003H629.0V450.8H631.0V457.90000000000003H620.8Z" fill="#262626"/>
<rect x="626.924" y="456.6" width="5.888" height="3.2" rx="0.8" fill="#22cf93"/>
<path d="M633.5999999999999 450.8H635.5999999999999V449.40000000000003H641.8V450.8H643.8V457.90000000000003H633.5999999999999Z" fill="#262626"/>
<rect x="639.7239999999999" y="456.6" width="5.888" height="3.2" rx="0.8" fill="#22cf93"/>
<rect x="645.7" y="448.90000000000003" width="11.6" height="9.8" fill="#f2f2f2" stroke="#f0c020" stroke-width="1"/>
<path d="M646.4 450.8H648.4V449.40000000000003H654.6V450.8H656.6V457.90000000000003H646.4Z" fill="#262626"/>
<rect x="652.524" y="456.6" width="5.888" height="3.2" rx="0.8" fill="#f0c020"/>
<path d="M659.1999999999999 450.8H661.1999999999999V449.40000000000003H667.4V450.8H669.4V457.90000000000003H659.1999999999999Z" fill="#262626"/>
<rect x="665.324" y="456.6" width="5.888" height="3.2" rx="0.8" fill="#22cf93"/>
<path d="M672.0 450.8H674.0V449.40000000000003H680.2V450.8H682.2V457.90000000000003H672.0Z" fill="#262626"/>
<rect x="678.124" y="456.6" width="5.888" height="3.2" rx="0.8" fill="#22cf93"/>
<rect x="684.1" y="448.90000000000003" width="11.6" height="9.8" fill="#f2f2f2" stroke="#8878ee" stroke-width="1"/>
<path d="M684.8 450.8H686.8V449.40000000000003H693.0V450.8H695.0V457.90000000000003H684.8Z" fill="#262626"/>
<rect x="690.924" y="456.6" width="5.888" height="3.2" rx="0.8" fill="#8878ee"/>
<path d="M620.8 462.6H622.8V461.20000000000005H629.0V462.6H631.0V469.70000000000005H620.8Z" fill="#262626"/>
<rect x="626.924" y="468.40000000000003" width="5.888" height="3.2" rx="0.8" fill="#22cf93"/>
<path d="M633.5999999999999 462.6H635.5999999999999V461.20000000000005H641.8V462.6H643.8V469.70000000000005H633.5999999999999Z" fill="#262626"/>
<rect x="639.7239999999999" y="468.40000000000003" width="5.888" height="3.2" rx="0.8" fill="#22cf93"/>
<rect x="645.7" y="460.70000000000005" width="11.6" height="9.8" fill="#f2f2f2" stroke="#f0c020" stroke-width="1"/>
<path d="M646.4 462.6H648.4V461.20000000000005H654.6V462.6H656.6V469.70000000000005H646.4Z" fill="#262626"/>
<rect x="652.524" y="468.40000000000003" width="5.888" height="3.2" rx="0.8" fill="#f0c020"/>
<path d="M659.1999999999999 462.6H661.1999999999999V461.20000000000005H667.4V462.6H669.4V469.70000000000005H659.1999999999999Z" fill="#262626"/>
<rect x="665.324" y="468.40000000000003" width="5.888" height="3.2" rx="0.8" fill="#22cf93"/>
<path d="M672.0 462.6H674.0V461.20000000000005H680.2V462.6H682.2V469.70000000000005H672.0Z" fill="#262626"/>
<rect x="678.124" y="468.40000000000003" width="5.888" height="3.2" rx="0.8" fill="#22cf93"/>
<path d="M684.8 462.6H686.8V461.20000000000005H693.0V462.6H695.0V469.70000000000005H684.8Z" fill="#262626"/>
<rect x="690.924" y="468.40000000000003" width="5.888" height="3.2" rx="0.8" fill="#22cf93"/>
<rect x="698.6" y="448.3" width="76.8" height="22.5" fill="#2fb98a"/>
<rect x="699.6" y="459.3" width="74.8" height="1" fill="#bfe8d8"/>
<path d="M699.9 450.8H701.9V449.40000000000003H708.1V450.8H710.1V457.90000000000003H699.9Z" fill="#262626"/>
<rect x="706.024" y="456.6" width="5.888" height="3.2" rx="0.8" fill="#22cf93"/>
<path d="M712.6999999999999 450.8H714.6999999999999V449.40000000000003H720.9V450.8H722.9V457.90000000000003H712.6999999999999Z" fill="#262626"/>
<rect x="718.824" y="456.6" width="5.888" height="3.2" rx="0.8" fill="#22cf93"/>
<path d="M725.5 450.8H727.5V449.40000000000003H733.7V450.8H735.7V457.90000000000003H725.5Z" fill="#262626"/>
<rect x="731.624" y="456.6" width="5.888" height="3.2" rx="0.8" fill="#22cf93"/>
<path d="M738.3 450.8H740.3V449.40000000000003H746.5V450.8H748.5V457.90000000000003H738.3Z" fill="#262626"/>
<rect x="744.424" y="456.6" width="5.888" height="3.2" rx="0.8" fill="#22cf93"/>
<path d="M751.1 450.8H753.1V449.40000000000003H759.3000000000001V450.8H761.3000000000001V457.90000000000003H751.1Z" fill="#262626"/>
<rect x="757.224" y="456.6" width="5.888" height="3.2" rx="0.8" fill="#22cf93"/>
<path d="M763.9 450.8H765.9V449.40000000000003H772.1V450.8H774.1V457.90000000000003H763.9Z" fill="#262626"/>
<rect x="770.024" y="456.6" width="5.888" height="3.2" rx="0.8" fill="#22cf93"/>
<path d="M699.9 462.6H701.9V461.20000000000005H708.1V462.6H710.1V469.70000000000005H699.9Z" fill="#262626"/>
<rect x="706.024" y="468.40000000000003" width="5.888" height="3.2" rx="0.8" fill="#22cf93"/>
<path d="M712.6999999999999 462.6H714.6999999999999V461.20000000000005H720.9V462.6H722.9V469.70000000000005H712.6999999999999Z" fill="#262626"/>
<rect x="718.824" y="468.40000000000003" width="5.888" height="3.2" rx="0.8" fill="#22cf93"/>
<path d="M725.5 462.6H727.5V461.20000000000005H733.7V462.6H735.7V469.70000000000005H725.5Z" fill="#262626"/>
<rect x="731.624" y="468.40000000000003" width="5.888" height="3.2" rx="0.8" fill="#22cf93"/>
<path d="M738.3 462.6H740.3V461.20000000000005H746.5V462.6H748.5V469.70000000000005H738.3Z" fill="#262626"/>
<rect x="744.424" y="468.40000000000003" width="5.888" height="3.2" rx="0.8" fill="#22cf93"/>
<path d="M751.1 462.6H753.1V461.20000000000005H759.3000000000001V462.6H761.3000000000001V469.70000000000005H751.1Z" fill="#262626"/>
<rect x="757.224" y="468.40000000000003" width="5.888" height="3.2" rx="0.8" fill="#22cf93"/>
<path d="M763.9 462.6H765.9V461.20000000000005H772.1V462.6H774.1V469.70000000000005H763.9Z" fill="#262626"/>
<rect x="770.024" y="468.40000000000003" width="5.888" height="3.2" rx="0.8" fill="#22cf93"/>
<rect x="778" y="456.8" width="26.3" height="5.4" fill="#fafafa"/>
<rect x="778" y="448.3" width="26.3" height="8.5" fill="#2fb98a"/>
<rect x="779.1" y="449.3" width="10.95" height="6.5" fill="#262626"/>
<rect x="784.575" y="454.8" width="6.575" height="3.2" rx="0.8" fill="#22cf93"/>
<rect x="781.945" y="458.8" width="1.6" height="1.6" fill="#555"/><rect x="785.2325" y="458.40000000000003" width="1.4" height="1.2" fill="#555"/>
<rect x="792.25" y="449.3" width="10.95" height="6.5" fill="#262626"/>
<rect x="797.725" y="454.8" width="6.575" height="3.2" rx="0.8" fill="#22cf93"/>
<rect x="795.095" y="458.8" width="1.6" height="1.6" fill="#555"/><rect x="798.3824999999999" y="458.40000000000003" width="1.4" height="1.2" fill="#555"/>
<rect x="778" y="462.2" width="26.3" height="8.5" fill="#2fb98a"/>
<rect x="779.1" y="463.2" width="10.95" height="6.5" fill="#262626"/>
<rect x="784.575" y="468.7" width="6.575" height="3.2" rx="0.8" fill="#22cf93"/>
<rect x="792.25" y="463.2" width="10.95" height="6.5" fill="#262626"/>
<rect x="797.725" y="468.7" width="6.575" height="3.2" rx="0.8" fill="#22cf93"/>
<rect x="415.6" y="477.5181818181818" width="10.7" height="27.5" rx="2.5" fill="url(#hdl)"/>
<rect x="413" y="481.3181818181818" width="11.3" height="26.5" rx="2" fill="none" stroke="#4e4e4e" stroke-width="1.1"/>
<rect x="416" y="482.7181818181818" width="7" height="18.5" fill="#d6d6d6"/>
<rect x="413.6" y="502.0181818181818" width="10.2" height="5.4" fill="#1d1d1d"/>
<circle cx="420.8" cy="491.0181818181818" r="0.9" fill="#fff"/>
<rect x="826.6" y="477.5181818181818" width="9" height="27.5" rx="2.5" fill="url(#hdl)"/>
<rect x="829" y="481.3181818181818" width="9.5" height="26.5" rx="2" fill="none" stroke="#4e4e4e" stroke-width="1.1"/>
<rect x="830.8" y="482.7181818181818" width="6" height="18.5" fill="#e0e0e0"/>
<rect x="829.6" y="502.0181818181818" width="8.4" height="5.4" fill="#1d1d1d"/>
<rect x="435" y="477.9" width="384.5" height="31.8" fill="url(#card)"/>
<rect x="435" y="478.4" width="2.6" height="30.8" fill="url(#blue)"/>
<rect x="816.5" y="478.4" width="2.6" height="30.8" fill="#a8daf0"/>
<rect x="437" y="509.2" width="381" height="3.6" fill="url(#lip)"/>
<rect x="442" y="512.1" width="376" height="1.2" fill="#333"/>
<circle cx="439.6" cy="492.59999999999997" r="4.8" fill="#e6e6e6" stroke="#b8b8b8" stroke-width="0.8"/>
<circle cx="815" cy="492.59999999999997" r="4.5" fill="#efefef" stroke="#b8b8b8" stroke-width="0.8"/>
<rect x="435" y="478.4" width="1.6" height="30.8" fill="#9dd5ee"/>
<circle cx="455.3" cy="500.09999999999997" r="1.5" fill="none" stroke="#888" stroke-width="0.6"/>
<rect x="443" y="480.4" width="25" height="1" fill="#cfe8f2"/>
<rect x="470" y="477.4" width="345" height="4" fill="url(#perf2)"/>
<rect x="460.7" y="492.7" width="76.8" height="5.4" fill="#d2d2d2"/>
<rect x="460.7" y="484.4" width="76.8" height="8.3" fill="#2fb98a"/>
<rect x="461.0" y="484.4" width="12.2" height="8.3" fill="#e8455e"/>
<rect x="461.8" y="485.4" width="10.599999999999998" height="6.300000000000001" fill="#262626"/>
<rect x="467.09999999999997" y="490.7" width="6.3999999999999995" height="3.2" rx="0.8" fill="#e8455e"/>
<rect x="464.53999999999996" y="494.7" width="1.6" height="1.6" fill="#555"/><rect x="467.74" y="494.3" width="1.4" height="1.2" fill="#555"/>
<rect x="474.6" y="485.4" width="10.599999999999998" height="6.300000000000001" fill="#262626"/>
<rect x="479.9" y="490.7" width="6.3999999999999995" height="3.2" rx="0.8" fill="#22cf93"/>
<rect x="477.34" y="494.7" width="1.6" height="1.6" fill="#555"/><rect x="480.54" y="494.3" width="1.4" height="1.2" fill="#555"/>
<rect x="487.40000000000003" y="485.4" width="10.599999999999998" height="6.300000000000001" fill="#262626"/>
<rect x="492.7" y="490.7" width="6.3999999999999995" height="3.2" rx="0.8" fill="#22cf93"/>
<rect x="490.14" y="494.7" width="1.6" height="1.6" fill="#555"/><rect x="493.34000000000003" y="494.3" width="1.4" height="1.2" fill="#555"/>
<rect x="500.2" y="485.4" width="10.599999999999998" height="6.300000000000001" fill="#262626"/>
<rect x="505.49999999999994" y="490.7" width="6.3999999999999995" height="3.2" rx="0.8" fill="#22cf93"/>
<rect x="502.93999999999994" y="494.7" width="1.6" height="1.6" fill="#555"/><rect x="506.14" y="494.3" width="1.4" height="1.2" fill="#555"/>
<rect x="513.0" y="485.4" width="10.599999999999998" height="6.300000000000001" fill="#262626"/>
<rect x="518.3" y="490.7" width="6.3999999999999995" height="3.2" rx="0.8" fill="#22cf93"/>
<rect x="515.74" y="494.7" width="1.6" height="1.6" fill="#555"/><rect x="518.9399999999999" y="494.3" width="1.4" height="1.2" fill="#555"/>
<rect x="525.8" y="485.4" width="10.599999999999998" height="6.300000000000001" fill="#262626"/>
<rect x="531.0999999999999" y="490.7" width="6.3999999999999995" height="3.2" rx="0.8" fill="#22cf93"/>
<rect x="528.54" y="494.7" width="1.6" height="1.6" fill="#555"/><rect x="531.7399999999999" y="494.3" width="1.4" height="1.2" fill="#555"/>
<rect x="460.7" y="498.09999999999997" width="76.8" height="8.3" fill="#2fb98a"/>
<rect x="461.0" y="498.09999999999997" width="12.2" height="8.3" fill="#e8455e"/>
<rect x="461.8" y="499.09999999999997" width="10.599999999999998" height="6.300000000000001" fill="#262626"/>
<rect x="467.09999999999997" y="504.4" width="6.3999999999999995" height="3.2" rx="0.8" fill="#e8455e"/>
<rect x="474.6" y="499.09999999999997" width="10.599999999999998" height="6.300000000000001" fill="#262626"/>
<rect x="479.9" y="504.4" width="6.3999999999999995" height="3.2" rx="0.8" fill="#22cf93"/>
<rect x="487.40000000000003" y="499.09999999999997" width="10.599999999999998" height="6.300000000000001" fill="#262626"/>
<rect x="492.7" y="504.4" width="6.3999999999999995" height="3.2" rx="0.8" fill="#22cf93"/>
<rect x="500.2" y="499.09999999999997" width="10.599999999999998" height="6.300000000000001" fill="#262626"/>
<rect x="505.49999999999994" y="504.4" width="6.3999999999999995" height="3.2" rx="0.8" fill="#22cf93"/>
<rect x="513.0" y="499.09999999999997" width="10.599999999999998" height="6.300000000000001" fill="#262626"/>
<rect x="518.3" y="504.4" width="6.3999999999999995" height="3.2" rx="0.8" fill="#22cf93"/>
<rect x="525.8" y="499.09999999999997" width="10.599999999999998" height="6.300000000000001" fill="#262626"/>
<rect x="531.0999999999999" y="504.4" width="6.3999999999999995" height="3.2" rx="0.8" fill="#22cf93"/>
<rect x="539.8" y="492.7" width="76.8" height="5.4" fill="#d2d2d2"/>
<rect x="539.8" y="484.4" width="76.8" height="8.3" fill="#2fb98a"/>
<rect x="540.9" y="485.4" width="10.599999999999998" height="6.300000000000001" fill="#262626"/>
<rect x="546.1999999999999" y="490.7" width="6.3999999999999995" height="3.2" rx="0.8" fill="#22cf93"/>
<rect x="543.64" y="494.7" width="1.6" height="1.6" fill="#555"/><rect x="546.8399999999999" y="494.3" width="1.4" height="1.2" fill="#555"/>
<rect x="552.8999999999999" y="484.4" width="12.2" height="8.3" fill="#e8455e"/>
<rect x="553.6999999999999" y="485.4" width="10.599999999999998" height="6.300000000000001" fill="#262626"/>
<rect x="558.9999999999999" y="490.7" width="6.3999999999999995" height="3.2" rx="0.8" fill="#e8455e"/>
<rect x="556.4399999999999" y="494.7" width="1.6" height="1.6" fill="#555"/><rect x="559.6399999999999" y="494.3" width="1.4" height="1.2" fill="#555"/>
<rect x="566.5" y="485.4" width="10.599999999999998" height="6.300000000000001" fill="#262626"/>
<rect x="571.8" y="490.7" width="6.3999999999999995" height="3.2" rx="0.8" fill="#22cf93"/>
<rect x="569.24" y="494.7" width="1.6" height="1.6" fill="#555"/><rect x="572.4399999999999" y="494.3" width="1.4" height="1.2" fill="#555"/>
<rect x="579.3" y="485.4" width="10.599999999999998" height="6.300000000000001" fill="#262626"/>
<rect x="584.5999999999999" y="490.7" width="6.3999999999999995" height="3.2" rx="0.8" fill="#22cf93"/>
<rect x="582.04" y="494.7" width="1.6" height="1.6" fill="#555"/><rect x="585.2399999999999" y="494.3" width="1.4" height="1.2" fill="#555"/>
<rect x="592.1" y="485.4" width="10.599999999999998" height="6.300000000000001" fill="#262626"/>
<rect x="597.4" y="490.7" width="6.3999999999999995" height="3.2" rx="0.8" fill="#22cf93"/>
<rect x="594.84" y="494.7" width="1.6" height="1.6" fill="#555"/><rect x="598.04" y="494.3" width="1.4" height="1.2" fill="#555"/>
<rect x="604.9" y="485.4" width="10.599999999999998" height="6.300000000000001" fill="#262626"/>
<rect x="610.1999999999999" y="490.7" width="6.3999999999999995" height="3.2" rx="0.8" fill="#22cf93"/>
<rect x="607.64" y="494.7" width="1.6" height="1.6" fill="#555"/><rect x="610.8399999999999" y="494.3" width="1.4" height="1.2" fill="#555"/>
<rect x="539.8" y="498.09999999999997" width="76.8" height="8.3" fill="#2fb98a"/>
<rect x="540.9" y="499.09999999999997" width="10.599999999999998" height="6.300000000000001" fill="#262626"/>
<rect x="546.1999999999999" y="504.4" width="6.3999999999999995" height="3.2" rx="0.8" fill="#22cf93"/>
<rect x="552.8999999999999" y="498.09999999999997" width="12.2" height="8.3" fill="#e8455e"/>
<rect x="553.6999999999999" y="499.09999999999997" width="10.599999999999998" height="6.300000000000001" fill="#262626"/>
<rect x="558.9999999999999" y="504.4" width="6.3999999999999995" height="3.2" rx="0.8" fill="#e8455e"/>
<rect x="565.6999999999999" y="498.09999999999997" width="12.2" height="8.3" fill="#e8455e"/>
<rect x="566.5" y="499.09999999999997" width="10.599999999999998" height="6.300000000000001" fill="#262626"/>
<rect x="571.8" y="504.4" width="6.3999999999999995" height="3.2" rx="0.8" fill="#e8455e"/>
<rect x="579.3" y="499.09999999999997" width="10.599999999999998" height="6.300000000000001" fill="#262626"/>
<rect x="584.5999999999999" y="504.4" width="6.3999999999999995" height="3.2" rx="0.8" fill="#22cf93"/>
<rect x="592.1" y="499.09999999999997" width="10.599999999999998" height="6.300000000000001" fill="#262626"/>
<rect x="597.4" y="504.4" width="6.3999999999999995" height="3.2" rx="0.8" fill="#22cf93"/>
<rect x="604.9" y="499.09999999999997" width="10.599999999999998" height="6.300000000000001" fill="#262626"/>
<rect x="610.1999999999999" y="504.4" width="6.3999999999999995" height="3.2" rx="0.8" fill="#22cf93"/>
<rect x="619.5" y="492.7" width="76.8" height="5.4" fill="#d2d2d2"/>
<rect x="619.5" y="484.4" width="76.8" height="8.3" fill="#2fb98a"/>
<rect x="620.6" y="485.4" width="10.599999999999998" height="6.300000000000001" fill="#262626"/>
<rect x="625.9" y="490.7" width="6.3999999999999995" height="3.2" rx="0.8" fill="#22cf93"/>
<rect x="623.34" y="494.7" width="1.6" height="1.6" fill="#555"/><rect x="626.54" y="494.3" width="1.4" height="1.2" fill="#555"/>
<rect x="633.4" y="485.4" width="10.599999999999998" height="6.300000000000001" fill="#262626"/>
<rect x="638.6999999999999" y="490.7" width="6.3999999999999995" height="3.2" rx="0.8" fill="#22cf93"/>
<rect x="636.14" y="494.7" width="1.6" height="1.6" fill="#555"/><rect x="639.3399999999999" y="494.3" width="1.4" height="1.2" fill="#555"/>
<rect x="645.4" y="484.4" width="12.2" height="8.3" fill="#e8455e"/>
<rect x="646.2" y="485.4" width="10.599999999999998" height="6.300000000000001" fill="#262626"/>
<rect x="651.5" y="490.7" width="6.3999999999999995" height="3.2" rx="0.8" fill="#e8455e"/>
<rect x="648.94" y="494.7" width="1.6" height="1.6" fill="#555"/><rect x="652.14" y="494.3" width="1.4" height="1.2" fill="#555"/>
<rect x="659.0" y="485.4" width="10.599999999999998" height="6.300000000000001" fill="#262626"/>
<rect x="664.3" y="490.7" width="6.3999999999999995" height="3.2" rx="0.8" fill="#22cf93"/>
<rect x="661.74" y="494.7" width="1.6" height="1.6" fill="#555"/><rect x="664.9399999999999" y="494.3" width="1.4" height="1.2" fill="#555"/>
<rect x="671.8000000000001" y="485.4" width="10.599999999999998" height="6.300000000000001" fill="#262626"/>
<rect x="677.1" y="490.7" width="6.3999999999999995" height="3.2" rx="0.8" fill="#22cf93"/>
<rect x="674.5400000000001" y="494.7" width="1.6" height="1.6" fill="#555"/><rect x="677.74" y="494.3" width="1.4" height="1.2" fill="#555"/>
<rect x="684.6" y="485.4" width="10.599999999999998" height="6.300000000000001" fill="#262626"/>
<rect x="689.9" y="490.7" width="6.3999999999999995" height="3.2" rx="0.8" fill="#22cf93"/>
<rect x="687.34" y="494.7" width="1.6" height="1.6" fill="#555"/><rect x="690.54" y="494.3" width="1.4" height="1.2" fill="#555"/>
<rect x="619.5" y="498.09999999999997" width="76.8" height="8.3" fill="#2fb98a"/>
<rect x="620.6" y="499.09999999999997" width="10.599999999999998" height="6.300000000000001" fill="#262626"/>
<rect x="625.9" y="504.4" width="6.3999999999999995" height="3.2" rx="0.8" fill="#22cf93"/>
<rect x="633.4" y="499.09999999999997" width="10.599999999999998" height="6.300000000000001" fill="#262626"/>
<rect x="638.6999999999999" y="504.4" width="6.3999999999999995" height="3.2" rx="0.8" fill="#22cf93"/>
<rect x="646.2" y="499.09999999999997" width="10.599999999999998" height="6.300000000000001" fill="#262626"/>
<rect x="651.5" y="504.4" width="6.3999999999999995" height="3.2" rx="0.8" fill="#22cf93"/>
<rect x="659.0" y="499.09999999999997" width="10.599999999999998" height="6.300000000000001" fill="#262626"/>
<rect x="664.3" y="504.4" width="6.3999999999999995" height="3.2" rx="0.8" fill="#22cf93"/>
<rect x="671.8000000000001" y="499.09999999999997" width="10.599999999999998" height="6.300000000000001" fill="#262626"/>
<rect x="677.1" y="504.4" width="6.3999999999999995" height="3.2" rx="0.8" fill="#22cf93"/>
<rect x="684.6" y="499.09999999999997" width="10.599999999999998" height="6.300000000000001" fill="#262626"/>
<rect x="689.9" y="504.4" width="6.3999999999999995" height="3.2" rx="0.8" fill="#22cf93"/>
<rect x="698.6" y="492.7" width="76.8" height="5.4" fill="#d2d2d2"/>
<rect x="698.6" y="484.4" width="76.8" height="8.3" fill="#2fb98a"/>
<rect x="699.7" y="485.4" width="10.599999999999998" height="6.300000000000001" fill="#262626"/>
<rect x="705.0" y="490.7" width="6.3999999999999995" height="3.2" rx="0.8" fill="#22cf93"/>
<rect x="702.44" y="494.7" width="1.6" height="1.6" fill="#555"/><rect x="705.64" y="494.3" width="1.4" height="1.2" fill="#555"/>
<rect x="712.5" y="485.4" width="10.599999999999998" height="6.300000000000001" fill="#262626"/>
<rect x="717.8" y="490.7" width="6.3999999999999995" height="3.2" rx="0.8" fill="#22cf93"/>
<rect x="715.24" y="494.7" width="1.6" height="1.6" fill="#555"/><rect x="718.4399999999999" y="494.3" width="1.4" height="1.2" fill="#555"/>
<rect x="725.3000000000001" y="485.4" width="10.599999999999998" height="6.300000000000001" fill="#262626"/>
<rect x="730.6" y="490.7" width="6.3999999999999995" height="3.2" rx="0.8" fill="#22cf93"/>
<rect x="728.0400000000001" y="494.7" width="1.6" height="1.6" fill="#555"/><rect x="731.24" y="494.3" width="1.4" height="1.2" fill="#555"/>
<rect x="738.1" y="485.4" width="10.599999999999998" height="6.300000000000001" fill="#262626"/>
<rect x="743.4" y="490.7" width="6.3999999999999995" height="3.2" rx="0.8" fill="#22cf93"/>
<rect x="740.84" y="494.7" width="1.6" height="1.6" fill="#555"/><rect x="744.04" y="494.3" width="1.4" height="1.2" fill="#555"/>
<rect x="750.9000000000001" y="485.4" width="10.599999999999998" height="6.300000000000001" fill="#262626"/>
<rect x="756.2" y="490.7" width="6.3999999999999995" height="3.2" rx="0.8" fill="#22cf93"/>
<rect x="753.6400000000001" y="494.7" width="1.6" height="1.6" fill="#555"/><rect x="756.84" y="494.3" width="1.4" height="1.2" fill="#555"/>
<rect x="763.7" y="485.4" width="10.599999999999998" height="6.300000000000001" fill="#262626"/>
<rect x="769.0" y="490.7" width="6.3999999999999995" height="3.2" rx="0.8" fill="#22cf93"/>
<rect x="766.44" y="494.7" width="1.6" height="1.6" fill="#555"/><rect x="769.64" y="494.3" width="1.4" height="1.2" fill="#555"/>
<rect x="698.6" y="498.09999999999997" width="76.8" height="8.3" fill="#2fb98a"/>
<rect x="699.7" y="499.09999999999997" width="10.599999999999998" height="6.300000000000001" fill="#262626"/>
<rect x="705.0" y="504.4" width="6.3999999999999995" height="3.2" rx="0.8" fill="#22cf93"/>
<rect x="712.5" y="499.09999999999997" width="10.599999999999998" height="6.300000000000001" fill="#262626"/>
<rect x="717.8" y="504.4" width="6.3999999999999995" height="3.2" rx="0.8" fill="#22cf93"/>
<rect x="724.5" y="498.09999999999997" width="12.2" height="8.3" fill="#f0c020"/>
<rect x="725.3000000000001" y="499.09999999999997" width="10.599999999999998" height="6.300000000000001" fill="#262626"/>
<rect x="730.6" y="504.4" width="6.3999999999999995" height="3.2" rx="0.8" fill="#f0c020"/>
<rect x="738.1" y="499.09999999999997" width="10.599999999999998" height="6.300000000000001" fill="#262626"/>
<rect x="743.4" y="504.4" width="6.3999999999999995" height="3.2" rx="0.8" fill="#22cf93"/>
<rect x="750.9000000000001" y="499.09999999999997" width="10.599999999999998" height="6.300000000000001" fill="#262626"/>
<rect x="756.2" y="504.4" width="6.3999999999999995" height="3.2" rx="0.8" fill="#22cf93"/>
<rect x="763.7" y="499.09999999999997" width="10.599999999999998" height="6.300000000000001" fill="#262626"/>
<rect x="769.0" y="504.4" width="6.3999999999999995" height="3.2" rx="0.8" fill="#22cf93"/>
<rect x="778" y="492.7" width="26.3" height="5.4" fill="#e8e8e8"/>
<rect x="778" y="484.4" width="26.3" height="8.3" fill="#2fb98a"/>
<rect x="779.1" y="485.4" width="10.95" height="6.300000000000001" fill="#262626"/>
<rect x="784.575" y="490.7" width="6.575" height="3.2" rx="0.8" fill="#22cf93"/>
<rect x="781.945" y="494.7" width="1.6" height="1.6" fill="#555"/><rect x="785.2325" y="494.3" width="1.4" height="1.2" fill="#555"/>
<rect x="792.25" y="485.4" width="10.95" height="6.300000000000001" fill="#262626"/>
<rect x="797.725" y="490.7" width="6.575" height="3.2" rx="0.8" fill="#22cf93"/>
<rect x="795.095" y="494.7" width="1.6" height="1.6" fill="#555"/><rect x="798.3824999999999" y="494.3" width="1.4" height="1.2" fill="#555"/>
<rect x="778" y="498.09999999999997" width="26.3" height="8.3" fill="#2fb98a"/>
<rect x="779.1" y="499.09999999999997" width="10.95" height="6.300000000000001" fill="#262626"/>
<rect x="784.575" y="504.4" width="6.575" height="3.2" rx="0.8" fill="#22cf93"/>
<rect x="792.25" y="499.09999999999997" width="10.95" height="6.300000000000001" fill="#262626"/>
<rect x="797.725" y="504.4" width="6.575" height="3.2" rx="0.8" fill="#22cf93"/>
<rect x="415.6" y="512.9454545454546" width="10.7" height="27.5" rx="2.5" fill="url(#hdl)"/>
<rect x="413" y="516.7454545454545" width="11.3" height="26.5" rx="2" fill="none" stroke="#4e4e4e" stroke-width="1.1"/>
<rect x="416" y="518.1454545454546" width="7" height="18.5" fill="#d6d6d6"/>
<rect x="413.6" y="537.4454545454546" width="10.2" height="5.4" fill="#1d1d1d"/>
<circle cx="420.8" cy="526.4454545454546" r="0.9" fill="#fff"/>
<rect x="826.6" y="512.9454545454546" width="9" height="27.5" rx="2.5" fill="url(#hdl)"/>
<rect x="829" y="516.7454545454545" width="9.5" height="26.5" rx="2" fill="none" stroke="#4e4e4e" stroke-width="1.1"/>
<rect x="830.8" y="518.1454545454546" width="6" height="18.5" fill="#e0e0e0"/>
<rect x="829.6" y="537.4454545454546" width="8.4" height="5.4" fill="#1d1d1d"/>
<rect x="435" y="513.1" width="384.5" height="31.8" fill="url(#card)"/>
<rect x="435" y="513.6" width="2.6" height="30.8" fill="url(#blue)"/>
<rect x="816.5" y="513.6" width="2.6" height="30.8" fill="#a8daf0"/>
<rect x="437" y="544.4" width="381" height="3.6" fill="url(#lip)"/>
<rect x="442" y="547.3" width="376" height="1.2" fill="#333"/>
<circle cx="439.6" cy="527.8000000000001" r="4.8" fill="#e6e6e6" stroke="#b8b8b8" stroke-width="0.8"/>
<circle cx="815" cy="527.8000000000001" r="4.5" fill="#efefef" stroke="#b8b8b8" stroke-width="0.8"/>
<rect x="435" y="513.6" width="1.6" height="30.8" fill="#9dd5ee"/>
<circle cx="455.3" cy="535.3000000000001" r="1.5" fill="none" stroke="#888" stroke-width="0.6"/>
<rect x="443" y="515.6" width="25" height="1" fill="#cfe8f2"/>
<rect x="470" y="512.6" width="345" height="4" fill="url(#perf2)"/>
<rect x="460.7" y="527.9" width="76.8" height="5.4" fill="#d2d2d2"/>
<rect x="460.7" y="519.6" width="76.8" height="8.3" fill="#2fb98a"/>
<rect x="461.8" y="520.6" width="10.599999999999998" height="6.300000000000001" fill="#262626"/>
<rect x="467.09999999999997" y="525.9" width="6.3999999999999995" height="3.2" rx="0.8" fill="#22cf93"/>
<rect x="464.53999999999996" y="529.9" width="1.6" height="1.6" fill="#555"/><rect x="467.74" y="529.5" width="1.4" height="1.2" fill="#555"/>
<rect x="474.6" y="520.6" width="10.599999999999998" height="6.300000000000001" fill="#262626"/>
<rect x="479.9" y="525.9" width="6.3999999999999995" height="3.2" rx="0.8" fill="#22cf93"/>
<rect x="477.34" y="529.9" width="1.6" height="1.6" fill="#555"/><rect x="480.54" y="529.5" width="1.4" height="1.2" fill="#555"/>
<rect x="487.40000000000003" y="520.6" width="10.599999999999998" height="6.300000000000001" fill="#262626"/>
<rect x="492.7" y="525.9" width="6.3999999999999995" height="3.2" rx="0.8" fill="#22cf93"/>
<rect x="490.14" y="529.9" width="1.6" height="1.6" fill="#555"/><rect x="493.34000000000003" y="529.5" width="1.4" height="1.2" fill="#555"/>
<rect x="500.2" y="520.6" width="10.599999999999998" height="6.300000000000001" fill="#262626"/>
<rect x="505.49999999999994" y="525.9" width="6.3999999999999995" height="3.2" rx="0.8" fill="#22cf93"/>
<rect x="502.93999999999994" y="529.9" width="1.6" height="1.6" fill="#555"/><rect x="506.14" y="529.5" width="1.4" height="1.2" fill="#555"/>
<rect x="513.0" y="520.6" width="10.599999999999998" height="6.300000000000001" fill="#262626"/>
<rect x="518.3" y="525.9" width="6.3999999999999995" height="3.2" rx="0.8" fill="#22cf93"/>
<rect x="515.74" y="529.9" width="1.6" height="1.6" fill="#555"/><rect x="518.9399999999999" y="529.5" width="1.4" height="1.2" fill="#555"/>
<rect x="525.8" y="520.6" width="10.599999999999998" height="6.300000000000001" fill="#262626"/>
<rect x="531.0999999999999" y="525.9" width="6.3999999999999995" height="3.2" rx="0.8" fill="#22cf93"/>
<rect x="528.54" y="529.9" width="1.6" height="1.6" fill="#555"/><rect x="531.7399999999999" y="529.5" width="1.4" height="1.2" fill="#555"/>
<rect x="460.7" y="533.3000000000001" width="76.8" height="8.3" fill="#2fb98a"/>
<rect x="461.8" y="534.3000000000001" width="10.599999999999998" height="6.300000000000001" fill="#262626"/>
<rect x="467.09999999999997" y="539.6" width="6.3999999999999995" height="3.2" rx="0.8" fill="#22cf93"/>
<rect x="474.6" y="534.3000000000001" width="10.599999999999998" height="6.300000000000001" fill="#262626"/>
<rect x="479.9" y="539.6" width="6.3999999999999995" height="3.2" rx="0.8" fill="#22cf93"/>
<rect x="487.40000000000003" y="534.3000000000001" width="10.599999999999998" height="6.300000000000001" fill="#262626"/>
<rect x="492.7" y="539.6" width="6.3999999999999995" height="3.2" rx="0.8" fill="#22cf93"/>
<rect x="500.2" y="534.3000000000001" width="10.599999999999998" height="6.300000000000001" fill="#262626"/>
<rect x="505.49999999999994" y="539.6" width="6.3999999999999995" height="3.2" rx="0.8" fill="#22cf93"/>
<rect x="513.0" y="534.3000000000001" width="10.599999999999998" height="6.300000000000001" fill="#262626"/>
<rect x="518.3" y="539.6" width="6.3999999999999995" height="3.2" rx="0.8" fill="#22cf93"/>
<rect x="525.8" y="534.3000000000001" width="10.599999999999998" height="6.300000000000001" fill="#262626"/>
<rect x="531.0999999999999" y="539.6" width="6.3999999999999995" height="3.2" rx="0.8" fill="#22cf93"/>
<rect x="539.8" y="527.9" width="76.8" height="5.4" fill="#d2d2d2"/>
<rect x="539.8" y="519.6" width="76.8" height="8.3" fill="#2fb98a"/>
<rect x="540.9" y="520.6" width="10.599999999999998" height="6.300000000000001" fill="#262626"/>
<rect x="546.1999999999999" y="525.9" width="6.3999999999999995" height="3.2" rx="0.8" fill="#22cf93"/>
<rect x="543.64" y="529.9" width="1.6" height="1.6" fill="#555"/><rect x="546.8399999999999" y="529.5" width="1.4" height="1.2" fill="#555"/>
<rect x="553.6999999999999" y="520.6" width="10.599999999999998" height="6.300000000000001" fill="#262626"/>
<rect x="558.9999999999999" y="525.9" width="6.3999999999999995" height="3.2" rx="0.8" fill="#22cf93"/>
<rect x="556.4399999999999" y="529.9" width="1.6" height="1.6" fill="#555"/><rect x="559.6399999999999" y="529.5" width="1.4" height="1.2" fill="#555"/>
<rect x="566.5" y="520.6" width="10.599999999999998" height="6.300000000000001" fill="#262626"/>
<rect x="571.8" y="525.9" width="6.3999999999999995" height="3.2" rx="0.8" fill="#22cf93"/>
<rect x="569.24" y="529.9" width="1.6" height="1.6" fill="#555"/><rect x="572.4399999999999" y="529.5" width="1.4" height="1.2" fill="#555"/>
<rect x="579.3" y="520.6" width="10.599999999999998" height="6.300000000000001" fill="#262626"/>
<rect x="584.5999999999999" y="525.9" width="6.3999999999999995" height="3.2" rx="0.8" fill="#22cf93"/>
<rect x="582.04" y="529.9" width="1.6" height="1.6" fill="#555"/><rect x="585.2399999999999" y="529.5" width="1.4" height="1.2" fill="#555"/>
<rect x="592.1" y="520.6" width="10.599999999999998" height="6.300000000000001" fill="#262626"/>
<rect x="597.4" y="525.9" width="6.3999999999999995" height="3.2" rx="0.8" fill="#22cf93"/>
<rect x="594.84" y="529.9" width="1.6" height="1.6" fill="#555"/><rect x="598.04" y="529.5" width="1.4" height="1.2" fill="#555"/>
<rect x="604.9" y="520.6" width="10.599999999999998" height="6.300000000000001" fill="#262626"/>
<rect x="610.1999999999999" y="525.9" width="6.3999999999999995" height="3.2" rx="0.8" fill="#22cf93"/>
<rect x="607.64" y="529.9" width="1.6" height="1.6" fill="#555"/><rect x="610.8399999999999" y="529.5" width="1.4" height="1.2" fill="#555"/>
<rect x="539.8" y="533.3000000000001" width="76.8" height="8.3" fill="#2fb98a"/>
<rect x="540.9" y="534.3000000000001" width="10.599999999999998" height="6.300000000000001" fill="#262626"/>
<rect x="546.1999999999999" y="539.6" width="6.3999999999999995" height="3.2" rx="0.8" fill="#22cf93"/>
<rect x="553.6999999999999" y="534.3000000000001" width="10.599999999999998" height="6.300000000000001" fill="#262626"/>
<rect x="558.9999999999999" y="539.6" width="6.3999999999999995" height="3.2" rx="0.8" fill="#22cf93"/>
<rect x="566.5" y="534.3000000000001" width="10.599999999999998" height="6.300000000000001" fill="#262626"/>
<rect x="571.8" y="539.6" width="6.3999999999999995" height="3.2" rx="0.8" fill="#22cf93"/>
<rect x="578.4999999999999" y="533.3000000000001" width="12.2" height="8.3" fill="#e8455e"/>
<rect x="579.3" y="534.3000000000001" width="10.599999999999998" height="6.300000000000001" fill="#262626"/>
<rect x="584.5999999999999" y="539.6" width="6.3999999999999995" height="3.2" rx="0.8" fill="#e8455e"/>
<rect x="592.1" y="534.3000000000001" width="10.599999999999998" height="6.300000000000001" fill="#262626"/>
<rect x="597.4" y="539.6" width="6.3999999999999995" height="3.2" rx="0.8" fill="#22cf93"/>
<rect x="604.9" y="534.3000000000001" width="10.599999999999998" height="6.300000000000001" fill="#262626"/>
<rect x="610.1999999999999" y="539.6" width="6.3999999999999995" height="3.2" rx="0.8" fill="#22cf93"/>
<rect x="619.5" y="527.9" width="76.8" height="5.4" fill="#d2d2d2"/>
<rect x="619.5" y="519.6" width="76.8" height="8.3" fill="#2fb98a"/>
<rect x="620.6" y="520.6" width="10.599999999999998" height="6.300000000000001" fill="#262626"/>
<rect x="625.9" y="525.9" width="6.3999999999999995" height="3.2" rx="0.8" fill="#22cf93"/>
<rect x="623.34" y="529.9" width="1.6" height="1.6" fill="#555"/><rect x="626.54" y="529.5" width="1.4" height="1.2" fill="#555"/>
<rect x="632.5999999999999" y="519.6" width="12.2" height="8.3" fill="#f08a4b"/>
<rect x="633.4" y="520.6" width="10.599999999999998" height="6.300000000000001" fill="#262626"/>
<rect x="638.6999999999999" y="525.9" width="6.3999999999999995" height="3.2" rx="0.8" fill="#f08a4b"/>
<rect x="636.14" y="529.9" width="1.6" height="1.6" fill="#555"/><rect x="639.3399999999999" y="529.5" width="1.4" height="1.2" fill="#555"/>
<rect x="646.2" y="520.6" width="10.599999999999998" height="6.300000000000001" fill="#262626"/>
<rect x="651.5" y="525.9" width="6.3999999999999995" height="3.2" rx="0.8" fill="#22cf93"/>
<rect x="648.94" y="529.9" width="1.6" height="1.6" fill="#555"/><rect x="652.14" y="529.5" width="1.4" height="1.2" fill="#555"/>
<rect x="659.0" y="520.6" width="10.599999999999998" height="6.300000000000001" fill="#262626"/>
<rect x="664.3" y="525.9" width="6.3999999999999995" height="3.2" rx="0.8" fill="#22cf93"/>
<rect x="661.74" y="529.9" width="1.6" height="1.6" fill="#555"/><rect x="664.9399999999999" y="529.5" width="1.4" height="1.2" fill="#555"/>
<rect x="671.8000000000001" y="520.6" width="10.599999999999998" height="6.300000000000001" fill="#262626"/>
<rect x="677.1" y="525.9" width="6.3999999999999995" height="3.2" rx="0.8" fill="#22cf93"/>
<rect x="674.5400000000001" y="529.9" width="1.6" height="1.6" fill="#555"/><rect x="677.74" y="529.5" width="1.4" height="1.2" fill="#555"/>
<rect x="684.6" y="520.6" width="10.599999999999998" height="6.300000000000001" fill="#262626"/>
<rect x="689.9" y="525.9" width="6.3999999999999995" height="3.2" rx="0.8" fill="#22cf93"/>
<rect x="687.34" y="529.9" width="1.6" height="1.6" fill="#555"/><rect x="690.54" y="529.5" width="1.4" height="1.2" fill="#555"/>
<rect x="619.5" y="533.3000000000001" width="76.8" height="8.3" fill="#2fb98a"/>
<rect x="620.6" y="534.3000000000001" width="10.599999999999998" height="6.300000000000001" fill="#262626"/>
<rect x="625.9" y="539.6" width="6.3999999999999995" height="3.2" rx="0.8" fill="#22cf93"/>
<rect x="632.5999999999999" y="533.3000000000001" width="12.2" height="8.3" fill="#f08a4b"/>
<rect x="633.4" y="534.3000000000001" width="10.599999999999998" height="6.300000000000001" fill="#262626"/>
<rect x="638.6999999999999" y="539.6" width="6.3999999999999995" height="3.2" rx="0.8" fill="#f08a4b"/>
<rect x="646.2" y="534.3000000000001" width="10.599999999999998" height="6.300000000000001" fill="#262626"/>
<rect x="651.5" y="539.6" width="6.3999999999999995" height="3.2" rx="0.8" fill="#22cf93"/>
<rect x="659.0" y="534.3000000000001" width="10.599999999999998" height="6.300000000000001" fill="#262626"/>
<rect x="664.3" y="539.6" width="6.3999999999999995" height="3.2" rx="0.8" fill="#22cf93"/>
<rect x="671.8000000000001" y="534.3000000000001" width="10.599999999999998" height="6.300000000000001" fill="#262626"/>
<rect x="677.1" y="539.6" width="6.3999999999999995" height="3.2" rx="0.8" fill="#22cf93"/>
<rect x="684.6" y="534.3000000000001" width="10.599999999999998" height="6.300000000000001" fill="#262626"/>
<rect x="689.9" y="539.6" width="6.3999999999999995" height="3.2" rx="0.8" fill="#22cf93"/>
<rect x="698.6" y="527.9" width="76.8" height="5.4" fill="#d2d2d2"/>
<rect x="698.6" y="519.6" width="76.8" height="8.3" fill="#2fb98a"/>
<rect x="699.7" y="520.6" width="10.599999999999998" height="6.300000000000001" fill="#262626"/>
<rect x="705.0" y="525.9" width="6.3999999999999995" height="3.2" rx="0.8" fill="#22cf93"/>
<rect x="702.44" y="529.9" width="1.6" height="1.6" fill="#555"/><rect x="705.64" y="529.5" width="1.4" height="1.2" fill="#555"/>
<rect x="712.5" y="520.6" width="10.599999999999998" height="6.300000000000001" fill="#262626"/>
<rect x="717.8" y="525.9" width="6.3999999999999995" height="3.2" rx="0.8" fill="#22cf93"/>
<rect x="715.24" y="529.9" width="1.6" height="1.6" fill="#555"/><rect x="718.4399999999999" y="529.5" width="1.4" height="1.2" fill="#555"/>
<rect x="725.3000000000001" y="520.6" width="10.599999999999998" height="6.300000000000001" fill="#262626"/>
<rect x="730.6" y="525.9" width="6.3999999999999995" height="3.2" rx="0.8" fill="#22cf93"/>
<rect x="728.0400000000001" y="529.9" width="1.6" height="1.6" fill="#555"/><rect x="731.24" y="529.5" width="1.4" height="1.2" fill="#555"/>
<rect x="738.1" y="520.6" width="10.599999999999998" height="6.300000000000001" fill="#262626"/>
<rect x="743.4" y="525.9" width="6.3999999999999995" height="3.2" rx="0.8" fill="#22cf93"/>
<rect x="740.84" y="529.9" width="1.6" height="1.6" fill="#555"/><rect x="744.04" y="529.5" width="1.4" height="1.2" fill="#555"/>
<rect x="750.9000000000001" y="520.6" width="10.599999999999998" height="6.300000000000001" fill="#262626"/>
<rect x="756.2" y="525.9" width="6.3999999999999995" height="3.2" rx="0.8" fill="#22cf93"/>
<rect x="753.6400000000001" y="529.9" width="1.6" height="1.6" fill="#555"/><rect x="756.84" y="529.5" width="1.4" height="1.2" fill="#555"/>
<rect x="763.7" y="520.6" width="10.599999999999998" height="6.300000000000001" fill="#262626"/>
<rect x="769.0" y="525.9" width="6.3999999999999995" height="3.2" rx="0.8" fill="#22cf93"/>
<rect x="766.44" y="529.9" width="1.6" height="1.6" fill="#555"/><rect x="769.64" y="529.5" width="1.4" height="1.2" fill="#555"/>
<rect x="698.6" y="533.3000000000001" width="76.8" height="8.3" fill="#2fb98a"/>
<rect x="698.9" y="533.3000000000001" width="12.2" height="8.3" fill="#f0c020"/>
<rect x="699.7" y="534.3000000000001" width="10.599999999999998" height="6.300000000000001" fill="#262626"/>
<rect x="705.0" y="539.6" width="6.3999999999999995" height="3.2" rx="0.8" fill="#f0c020"/>
<rect x="712.5" y="534.3000000000001" width="10.599999999999998" height="6.300000000000001" fill="#262626"/>
<rect x="717.8" y="539.6" width="6.3999999999999995" height="3.2" rx="0.8" fill="#22cf93"/>
<rect x="725.3000000000001" y="534.3000000000001" width="10.599999999999998" height="6.300000000000001" fill="#262626"/>
<rect x="730.6" y="539.6" width="6.3999999999999995" height="3.2" rx="0.8" fill="#22cf93"/>
<rect x="738.1" y="534.3000000000001" width="10.599999999999998" height="6.300000000000001" fill="#262626"/>
<rect x="743.4" y="539.6" width="6.3999999999999995" height="3.2" rx="0.8" fill="#22cf93"/>
<rect x="750.9000000000001" y="534.3000000000001" width="10.599999999999998" height="6.300000000000001" fill="#262626"/>
<rect x="756.2" y="539.6" width="6.3999999999999995" height="3.2" rx="0.8" fill="#22cf93"/>
<rect x="763.7" y="534.3000000000001" width="10.599999999999998" height="6.300000000000001" fill="#262626"/>
<rect x="769.0" y="539.6" width="6.3999999999999995" height="3.2" rx="0.8" fill="#22cf93"/>
<rect x="778" y="527.9" width="26.3" height="5.4" fill="#e8e8e8"/>
<rect x="778" y="519.6" width="26.3" height="8.3" fill="#2fb98a"/>
<rect x="779.1" y="520.6" width="10.95" height="6.300000000000001" fill="#262626"/>
<rect x="784.575" y="525.9" width="6.575" height="3.2" rx="0.8" fill="#22cf93"/>
<rect x="781.945" y="529.9" width="1.6" height="1.6" fill="#555"/><rect x="785.2325" y="529.5" width="1.4" height="1.2" fill="#555"/>
<rect x="792.25" y="520.6" width="10.95" height="6.300000000000001" fill="#262626"/>
<rect x="797.725" y="525.9" width="6.575" height="3.2" rx="0.8" fill="#22cf93"/>
<rect x="795.095" y="529.9" width="1.6" height="1.6" fill="#555"/><rect x="798.3824999999999" y="529.5" width="1.4" height="1.2" fill="#555"/>
<rect x="778" y="533.3000000000001" width="26.3" height="8.3" fill="#2fb98a"/>
<rect x="779.1" y="534.3000000000001" width="10.95" height="6.300000000000001" fill="#262626"/>
<rect x="784.575" y="539.6" width="6.575" height="3.2" rx="0.8" fill="#22cf93"/>
<rect x="792.25" y="534.3000000000001" width="10.95" height="6.300000000000001" fill="#262626"/>
<rect x="797.725" y="539.6" width="6.575" height="3.2" rx="0.8" fill="#22cf93"/>
<rect x="415.6" y="548.2727272727274" width="10.7" height="27.5" rx="2.5" fill="url(#hdl)"/>
<rect x="413" y="552.0727272727273" width="11.3" height="26.5" rx="2" fill="none" stroke="#4e4e4e" stroke-width="1.1"/>
<rect x="416" y="553.4727272727274" width="7" height="18.5" fill="#d6d6d6"/>
<rect x="413.6" y="572.7727272727274" width="10.2" height="5.4" fill="#1d1d1d"/>
<circle cx="420.8" cy="561.7727272727274" r="0.9" fill="#fff"/>
<rect x="826.6" y="548.2727272727274" width="9" height="27.5" rx="2.5" fill="url(#hdl)"/>
<rect x="829" y="552.0727272727273" width="9.5" height="26.5" rx="2" fill="none" stroke="#4e4e4e" stroke-width="1.1"/>
<rect x="830.8" y="553.4727272727274" width="6" height="18.5" fill="#e0e0e0"/>
<rect x="829.6" y="572.7727272727274" width="8.4" height="5.4" fill="#1d1d1d"/>
<rect x="435" y="548.2" width="384.5" height="31.8" fill="url(#card)"/>
<rect x="435" y="548.7" width="2.6" height="30.8" fill="url(#blue)"/>
<rect x="816.5" y="548.7" width="2.6" height="30.8" fill="#a8daf0"/>
<rect x="437" y="579.5" width="381" height="3.6" fill="url(#lip)"/>
<rect x="442" y="582.4" width="376" height="1.2" fill="#333"/>
<circle cx="439.6" cy="562.9000000000001" r="4.8" fill="#e6e6e6" stroke="#b8b8b8" stroke-width="0.8"/>
<circle cx="815" cy="562.9000000000001" r="4.5" fill="#efefef" stroke="#b8b8b8" stroke-width="0.8"/>
<rect x="435" y="548.7" width="1.6" height="30.8" fill="#9dd5ee"/>
<circle cx="455.3" cy="570.4000000000001" r="1.5" fill="none" stroke="#888" stroke-width="0.6"/>
<rect x="443" y="550.7" width="25" height="1" fill="#cfe8f2"/>
<rect x="460.7" y="562.8" width="102.3" height="5.4" fill="#cdcdcd"/>
<rect x="460.7" y="554.5" width="102.3" height="8.3" fill="#2fb98a"/>
<rect x="461.8" y="555.5" width="10.587499999999999" height="6.300000000000001" fill="#262626"/>
<rect x="467.09375" y="560.8" width="6.39375" height="3.2" rx="0.8" fill="#22cf93"/>
<rect x="464.53625" y="564.8" width="1.6" height="1.6" fill="#555"/><rect x="467.733125" y="564.4" width="1.4" height="1.2" fill="#555"/>
<rect x="473.7875" y="554.5" width="12.1875" height="8.3" fill="#f0c020"/>
<rect x="474.58750000000003" y="555.5" width="10.587499999999999" height="6.300000000000001" fill="#262626"/>
<rect x="479.88125" y="560.8" width="6.39375" height="3.2" rx="0.8" fill="#f0c020"/>
<rect x="477.32375" y="564.8" width="1.6" height="1.6" fill="#555"/><rect x="480.520625" y="564.4" width="1.4" height="1.2" fill="#555"/>
<rect x="487.375" y="555.5" width="10.587499999999999" height="6.300000000000001" fill="#262626"/>
<rect x="492.66875" y="560.8" width="6.39375" height="3.2" rx="0.8" fill="#22cf93"/>
<rect x="490.11125" y="564.8" width="1.6" height="1.6" fill="#555"/><rect x="493.30812499999996" y="564.4" width="1.4" height="1.2" fill="#555"/>
<rect x="500.1625" y="555.5" width="10.587499999999999" height="6.300000000000001" fill="#262626"/>
<rect x="505.45625" y="560.8" width="6.39375" height="3.2" rx="0.8" fill="#22cf93"/>
<rect x="502.89875" y="564.8" width="1.6" height="1.6" fill="#555"/><rect x="506.095625" y="564.4" width="1.4" height="1.2" fill="#555"/>
<rect x="512.9499999999999" y="555.5" width="10.587499999999999" height="6.300000000000001" fill="#262626"/>
<rect x="518.24375" y="560.8" width="6.39375" height="3.2" rx="0.8" fill="#22cf93"/>
<rect x="515.68625" y="564.8" width="1.6" height="1.6" fill="#555"/><rect x="518.883125" y="564.4" width="1.4" height="1.2" fill="#555"/>
<rect x="525.7375000000001" y="555.5" width="10.587499999999999" height="6.300000000000001" fill="#262626"/>
<rect x="531.03125" y="560.8" width="6.39375" height="3.2" rx="0.8" fill="#22cf93"/>
<rect x="528.47375" y="564.8" width="1.6" height="1.6" fill="#555"/><rect x="531.6706250000001" y="564.4" width="1.4" height="1.2" fill="#555"/>
<rect x="538.525" y="555.5" width="10.587499999999999" height="6.300000000000001" fill="#262626"/>
<rect x="543.8187499999999" y="560.8" width="6.39375" height="3.2" rx="0.8" fill="#22cf93"/>
<rect x="541.2612499999999" y="564.8" width="1.6" height="1.6" fill="#555"/><rect x="544.458125" y="564.4" width="1.4" height="1.2" fill="#555"/>
<rect x="551.3125" y="555.5" width="10.587499999999999" height="6.300000000000001" fill="#262626"/>
<rect x="556.6062499999999" y="560.8" width="6.39375" height="3.2" rx="0.8" fill="#22cf93"/>
<rect x="554.0487499999999" y="564.8" width="1.6" height="1.6" fill="#555"/><rect x="557.245625" y="564.4" width="1.4" height="1.2" fill="#555"/>
<rect x="460.7" y="568.2" width="102.3" height="8.3" fill="#2fb98a"/>
<rect x="461.8" y="569.2" width="10.587499999999999" height="6.300000000000001" fill="#262626"/>
<rect x="467.09375" y="574.5" width="6.39375" height="3.2" rx="0.8" fill="#22cf93"/>
<rect x="473.7875" y="568.2" width="12.1875" height="8.3" fill="#f0c020"/>
<rect x="474.58750000000003" y="569.2" width="10.587499999999999" height="6.300000000000001" fill="#262626"/>
<rect x="479.88125" y="574.5" width="6.39375" height="3.2" rx="0.8" fill="#f0c020"/>
<rect x="487.375" y="569.2" width="10.587499999999999" height="6.300000000000001" fill="#262626"/>
<rect x="492.66875" y="574.5" width="6.39375" height="3.2" rx="0.8" fill="#22cf93"/>
<rect x="500.1625" y="569.2" width="10.587499999999999" height="6.300000000000001" fill="#262626"/>
<rect x="505.45625" y="574.5" width="6.39375" height="3.2" rx="0.8" fill="#22cf93"/>
<rect x="512.9499999999999" y="569.2" width="10.587499999999999" height="6.300000000000001" fill="#262626"/>
<rect x="518.24375" y="574.5" width="6.39375" height="3.2" rx="0.8" fill="#22cf93"/>
<rect x="525.7375000000001" y="569.2" width="10.587499999999999" height="6.300000000000001" fill="#262626"/>
<rect x="531.03125" y="574.5" width="6.39375" height="3.2" rx="0.8" fill="#22cf93"/>
<rect x="538.525" y="569.2" width="10.587499999999999" height="6.300000000000001" fill="#262626"/>
<rect x="543.8187499999999" y="574.5" width="6.39375" height="3.2" rx="0.8" fill="#22cf93"/>
<rect x="551.3125" y="569.2" width="10.587499999999999" height="6.300000000000001" fill="#262626"/>
<rect x="556.6062499999999" y="574.5" width="6.39375" height="3.2" rx="0.8" fill="#22cf93"/>
<rect x="566.8" y="562.8" width="101.3" height="5.4" fill="#cdcdcd"/>
<rect x="566.8" y="554.5" width="101.3" height="8.3" fill="#2fb98a"/>
<rect x="567.9" y="555.5" width="10.462499999999999" height="6.300000000000001" fill="#262626"/>
<rect x="573.1312499999999" y="560.8" width="6.33125" height="3.2" rx="0.8" fill="#22cf93"/>
<rect x="570.59875" y="564.8" width="1.6" height="1.6" fill="#555"/><rect x="573.764375" y="564.4" width="1.4" height="1.2" fill="#555"/>
<rect x="580.5625" y="555.5" width="10.462499999999999" height="6.300000000000001" fill="#262626"/>
<rect x="585.7937499999999" y="560.8" width="6.33125" height="3.2" rx="0.8" fill="#22cf93"/>
<rect x="583.26125" y="564.8" width="1.6" height="1.6" fill="#555"/><rect x="586.426875" y="564.4" width="1.4" height="1.2" fill="#555"/>
<rect x="593.225" y="555.5" width="10.462499999999999" height="6.300000000000001" fill="#262626"/>
<rect x="598.45625" y="560.8" width="6.33125" height="3.2" rx="0.8" fill="#22cf93"/>
<rect x="595.92375" y="564.8" width="1.6" height="1.6" fill="#555"/><rect x="599.089375" y="564.4" width="1.4" height="1.2" fill="#555"/>
<rect x="605.8874999999999" y="555.5" width="10.462499999999999" height="6.300000000000001" fill="#262626"/>
<rect x="611.1187499999999" y="560.8" width="6.33125" height="3.2" rx="0.8" fill="#22cf93"/>
<rect x="608.58625" y="564.8" width="1.6" height="1.6" fill="#555"/><rect x="611.7518749999999" y="564.4" width="1.4" height="1.2" fill="#555"/>
<rect x="618.55" y="555.5" width="10.462499999999999" height="6.300000000000001" fill="#262626"/>
<rect x="623.7812499999999" y="560.8" width="6.33125" height="3.2" rx="0.8" fill="#22cf93"/>
<rect x="621.24875" y="564.8" width="1.6" height="1.6" fill="#555"/><rect x="624.414375" y="564.4" width="1.4" height="1.2" fill="#555"/>
<rect x="631.2125" y="555.5" width="10.462499999999999" height="6.300000000000001" fill="#262626"/>
<rect x="636.4437499999999" y="560.8" width="6.33125" height="3.2" rx="0.8" fill="#22cf93"/>
<rect x="633.91125" y="564.8" width="1.6" height="1.6" fill="#555"/><rect x="637.076875" y="564.4" width="1.4" height="1.2" fill="#555"/>
<rect x="643.875" y="555.5" width="10.462499999999999" height="6.300000000000001" fill="#262626"/>
<rect x="649.1062499999999" y="560.8" width="6.33125" height="3.2" rx="0.8" fill="#22cf93"/>
<rect x="646.57375" y="564.8" width="1.6" height="1.6" fill="#555"/><rect x="649.739375" y="564.4" width="1.4" height="1.2" fill="#555"/>
<rect x="655.7375" y="554.5" width="12.0625" height="8.3" fill="#f0c020"/>
<rect x="656.5375" y="555.5" width="10.462499999999999" height="6.300000000000001" fill="#262626"/>
<rect x="661.76875" y="560.8" width="6.33125" height="3.2" rx="0.8" fill="#f0c020"/>
<rect x="659.23625" y="564.8" width="1.6" height="1.6" fill="#555"/><rect x="662.401875" y="564.4" width="1.4" height="1.2" fill="#555"/>
<rect x="566.8" y="568.2" width="101.3" height="8.3" fill="#2fb98a"/>
<rect x="567.9" y="569.2" width="10.462499999999999" height="6.300000000000001" fill="#262626"/>
<rect x="573.1312499999999" y="574.5" width="6.33125" height="3.2" rx="0.8" fill="#22cf93"/>
<rect x="580.5625" y="569.2" width="10.462499999999999" height="6.300000000000001" fill="#262626"/>
<rect x="585.7937499999999" y="574.5" width="6.33125" height="3.2" rx="0.8" fill="#22cf93"/>
<rect x="592.425" y="568.2" width="12.0625" height="8.3" fill="#8878ee"/>
<rect x="593.225" y="569.2" width="10.462499999999999" height="6.300000000000001" fill="#262626"/>
<rect x="598.45625" y="574.5" width="6.33125" height="3.2" rx="0.8" fill="#8878ee"/>
<rect x="605.8874999999999" y="569.2" width="10.462499999999999" height="6.300000000000001" fill="#262626"/>
<rect x="611.1187499999999" y="574.5" width="6.33125" height="3.2" rx="0.8" fill="#22cf93"/>
<rect x="618.55" y="569.2" width="10.462499999999999" height="6.300000000000001" fill="#262626"/>
<rect x="623.7812499999999" y="574.5" width="6.33125" height="3.2" rx="0.8" fill="#22cf93"/>
<rect x="631.2125" y="569.2" width="10.462499999999999" height="6.300000000000001" fill="#262626"/>
<rect x="636.4437499999999" y="574.5" width="6.33125" height="3.2" rx="0.8" fill="#22cf93"/>
<rect x="643.875" y="569.2" width="10.462499999999999" height="6.300000000000001" fill="#262626"/>
<rect x="649.1062499999999" y="574.5" width="6.33125" height="3.2" rx="0.8" fill="#22cf93"/>
<rect x="655.7375" y="568.2" width="12.0625" height="8.3" fill="#f0c020"/>
<rect x="656.5375" y="569.2" width="10.462499999999999" height="6.300000000000001" fill="#262626"/>
<rect x="661.76875" y="574.5" width="6.33125" height="3.2" rx="0.8" fill="#f0c020"/>
<rect x="672.3" y="562.8" width="101" height="5.4" fill="#cdcdcd"/>
<rect x="672.3" y="554.5" width="101" height="8.3" fill="#2fb98a"/>
<rect x="673.4" y="555.5" width="10.425" height="6.300000000000001" fill="#262626"/>
<rect x="678.6125" y="560.8" width="6.3125" height="3.2" rx="0.8" fill="#22cf93"/>
<rect x="676.0875" y="564.8" width="1.6" height="1.6" fill="#555"/><rect x="679.24375" y="564.4" width="1.4" height="1.2" fill="#555"/>
<rect x="686.025" y="555.5" width="10.425" height="6.300000000000001" fill="#262626"/>
<rect x="691.2375" y="560.8" width="6.3125" height="3.2" rx="0.8" fill="#22cf93"/>
<rect x="688.7125" y="564.8" width="1.6" height="1.6" fill="#555"/><rect x="691.86875" y="564.4" width="1.4" height="1.2" fill="#555"/>
<rect x="698.65" y="555.5" width="10.425" height="6.300000000000001" fill="#262626"/>
<rect x="703.8625" y="560.8" width="6.3125" height="3.2" rx="0.8" fill="#22cf93"/>
<rect x="701.3375" y="564.8" width="1.6" height="1.6" fill="#555"/><rect x="704.49375" y="564.4" width="1.4" height="1.2" fill="#555"/>
<rect x="711.275" y="555.5" width="10.425" height="6.300000000000001" fill="#262626"/>
<rect x="716.4875" y="560.8" width="6.3125" height="3.2" rx="0.8" fill="#22cf93"/>
<rect x="713.9625" y="564.8" width="1.6" height="1.6" fill="#555"/><rect x="717.11875" y="564.4" width="1.4" height="1.2" fill="#555"/>
<rect x="723.9" y="555.5" width="10.425" height="6.300000000000001" fill="#262626"/>
<rect x="729.1125" y="560.8" width="6.3125" height="3.2" rx="0.8" fill="#22cf93"/>
<rect x="726.5875" y="564.8" width="1.6" height="1.6" fill="#555"/><rect x="729.74375" y="564.4" width="1.4" height="1.2" fill="#555"/>
<rect x="736.525" y="555.5" width="10.425" height="6.300000000000001" fill="#262626"/>
<rect x="741.7375" y="560.8" width="6.3125" height="3.2" rx="0.8" fill="#22cf93"/>
<rect x="739.2125" y="564.8" width="1.6" height="1.6" fill="#555"/><rect x="742.36875" y="564.4" width="1.4" height="1.2" fill="#555"/>
<rect x="749.15" y="555.5" width="10.425" height="6.300000000000001" fill="#262626"/>
<rect x="754.3625" y="560.8" width="6.3125" height="3.2" rx="0.8" fill="#22cf93"/>
<rect x="751.8375" y="564.8" width="1.6" height="1.6" fill="#555"/><rect x="754.99375" y="564.4" width="1.4" height="1.2" fill="#555"/>
<rect x="761.775" y="555.5" width="10.425" height="6.300000000000001" fill="#262626"/>
<rect x="766.9875" y="560.8" width="6.3125" height="3.2" rx="0.8" fill="#22cf93"/>
<rect x="764.4625" y="564.8" width="1.6" height="1.6" fill="#555"/><rect x="767.61875" y="564.4" width="1.4" height="1.2" fill="#555"/>
<rect x="672.3" y="568.2" width="101" height="8.3" fill="#2fb98a"/>
<rect x="673.4" y="569.2" width="10.425" height="6.300000000000001" fill="#262626"/>
<rect x="678.6125" y="574.5" width="6.3125" height="3.2" rx="0.8" fill="#22cf93"/>
<rect x="686.025" y="569.2" width="10.425" height="6.300000000000001" fill="#262626"/>
<rect x="691.2375" y="574.5" width="6.3125" height="3.2" rx="0.8" fill="#22cf93"/>
<rect x="698.65" y="569.2" width="10.425" height="6.300000000000001" fill="#262626"/>
<rect x="703.8625" y="574.5" width="6.3125" height="3.2" rx="0.8" fill="#22cf93"/>
<rect x="711.275" y="569.2" width="10.425" height="6.300000000000001" fill="#262626"/>
<rect x="716.4875" y="574.5" width="6.3125" height="3.2" rx="0.8" fill="#22cf93"/>
<rect x="723.9" y="569.2" width="10.425" height="6.300000000000001" fill="#262626"/>
<rect x="729.1125" y="574.5" width="6.3125" height="3.2" rx="0.8" fill="#22cf93"/>
<rect x="736.525" y="569.2" width="10.425" height="6.300000000000001" fill="#262626"/>
<rect x="741.7375" y="574.5" width="6.3125" height="3.2" rx="0.8" fill="#22cf93"/>
<rect x="749.15" y="569.2" width="10.425" height="6.300000000000001" fill="#262626"/>
<rect x="754.3625" y="574.5" width="6.3125" height="3.2" rx="0.8" fill="#22cf93"/>
<rect x="761.775" y="569.2" width="10.425" height="6.300000000000001" fill="#262626"/>
<rect x="766.9875" y="574.5" width="6.3125" height="3.2" rx="0.8" fill="#22cf93"/>
<rect x="777.5" y="562.8" width="29" height="5.4" fill="#efefef"/>
<rect x="777.5" y="554.5" width="29" height="8.3" fill="#2fb98a"/>
<rect x="778.6" y="555.5" width="12.3" height="6.300000000000001" fill="#262626"/>
<rect x="784.75" y="560.8" width="7.25" height="3.2" rx="0.8" fill="#22cf93"/>
<rect x="781.85" y="564.8" width="1.6" height="1.6" fill="#555"/><rect x="785.475" y="564.4" width="1.4" height="1.2" fill="#555"/>
<rect x="793.1" y="555.5" width="12.3" height="6.300000000000001" fill="#262626"/>
<rect x="799.25" y="560.8" width="7.25" height="3.2" rx="0.8" fill="#22cf93"/>
<rect x="796.35" y="564.8" width="1.6" height="1.6" fill="#555"/><rect x="799.975" y="564.4" width="1.4" height="1.2" fill="#555"/>
<rect x="777.5" y="568.2" width="29" height="8.3" fill="#2fb98a"/>
<rect x="778.6" y="569.2" width="12.3" height="6.300000000000001" fill="#262626"/>
<rect x="784.75" y="574.5" width="7.25" height="3.2" rx="0.8" fill="#22cf93"/>
<rect x="793.1" y="569.2" width="12.3" height="6.300000000000001" fill="#262626"/>
<rect x="799.25" y="574.5" width="7.25" height="3.2" rx="0.8" fill="#22cf93"/>
<rect x="445" y="578.0" width="370" height="4" fill="url(#perf3)"/>
<rect x="445" y="548.4000000000001" width="370" height="4" fill="url(#perf2)"/>
<rect x="415.6" y="583.5" width="10.7" height="27.5" rx="2.5" fill="url(#hdl)"/>
<rect x="413" y="587.3" width="11.3" height="26.5" rx="2" fill="none" stroke="#4e4e4e" stroke-width="1.1"/>
<rect x="416" y="588.7" width="7" height="18.5" fill="#d6d6d6"/>
<rect x="413.6" y="608.0" width="10.2" height="5.4" fill="#1d1d1d"/>
<circle cx="420.8" cy="597.0" r="0.9" fill="#fff"/>
<rect x="826.6" y="583.5" width="9" height="27.5" rx="2.5" fill="url(#hdl)"/>
<rect x="829" y="587.3" width="9.5" height="26.5" rx="2" fill="none" stroke="#4e4e4e" stroke-width="1.1"/>
<rect x="830.8" y="588.7" width="6" height="18.5" fill="#e0e0e0"/>
<rect x="829.6" y="608.0" width="8.4" height="5.4" fill="#1d1d1d"/>
<rect x="435" y="583.2" width="384.5" height="31.8" fill="url(#card)"/>
<rect x="435" y="583.7" width="2.6" height="30.8" fill="url(#blue)"/>
<rect x="816.5" y="583.7" width="2.6" height="30.8" fill="#a8daf0"/>
<rect x="437" y="614.5" width="381" height="3.6" fill="url(#lip)"/>
<rect x="442" y="617.4" width="376" height="1.2" fill="#333"/>
<circle cx="439.6" cy="597.9000000000001" r="4.8" fill="#e6e6e6" stroke="#b8b8b8" stroke-width="0.8"/>
<circle cx="815" cy="597.9000000000001" r="4.5" fill="#efefef" stroke="#b8b8b8" stroke-width="0.8"/>
<rect x="435" y="583.7" width="1.6" height="30.8" fill="#9dd5ee"/>
<circle cx="455.3" cy="605.4000000000001" r="1.5" fill="none" stroke="#888" stroke-width="0.6"/>
<rect x="443" y="585.7" width="25" height="1" fill="#cfe8f2"/>
<rect x="460.7" y="597.8" width="102.3" height="5.4" fill="#cdcdcd"/>
<rect x="460.7" y="589.5" width="102.3" height="8.3" fill="#2fb98a"/>
<rect x="461.8" y="590.5" width="10.587499999999999" height="6.300000000000001" fill="#262626"/>
<rect x="467.09375" y="595.8" width="6.39375" height="3.2" rx="0.8" fill="#22cf93"/>
<rect x="464.53625" y="599.8" width="1.6" height="1.6" fill="#555"/><rect x="467.733125" y="599.4" width="1.4" height="1.2" fill="#555"/>
<rect x="473.7875" y="589.5" width="12.1875" height="8.3" fill="#e8455e"/>
<rect x="474.58750000000003" y="590.5" width="10.587499999999999" height="6.300000000000001" fill="#262626"/>
<rect x="479.88125" y="595.8" width="6.39375" height="3.2" rx="0.8" fill="#e8455e"/>
<rect x="477.32375" y="599.8" width="1.6" height="1.6" fill="#555"/><rect x="480.520625" y="599.4" width="1.4" height="1.2" fill="#555"/>
<rect x="487.375" y="590.5" width="10.587499999999999" height="6.300000000000001" fill="#262626"/>
<rect x="492.66875" y="595.8" width="6.39375" height="3.2" rx="0.8" fill="#22cf93"/>
<rect x="490.11125" y="599.8" width="1.6" height="1.6" fill="#555"/><rect x="493.30812499999996" y="599.4" width="1.4" height="1.2" fill="#555"/>
<rect x="500.1625" y="590.5" width="10.587499999999999" height="6.300000000000001" fill="#262626"/>
<rect x="505.45625" y="595.8" width="6.39375" height="3.2" rx="0.8" fill="#22cf93"/>
<rect x="502.89875" y="599.8" width="1.6" height="1.6" fill="#555"/><rect x="506.095625" y="599.4" width="1.4" height="1.2" fill="#555"/>
<rect x="512.9499999999999" y="590.5" width="10.587499999999999" height="6.300000000000001" fill="#262626"/>
<rect x="518.24375" y="595.8" width="6.39375" height="3.2" rx="0.8" fill="#22cf93"/>
<rect x="515.68625" y="599.8" width="1.6" height="1.6" fill="#555"/><rect x="518.883125" y="599.4" width="1.4" height="1.2" fill="#555"/>
<rect x="525.7375000000001" y="590.5" width="10.587499999999999" height="6.300000000000001" fill="#262626"/>
<rect x="531.03125" y="595.8" width="6.39375" height="3.2" rx="0.8" fill="#22cf93"/>
<rect x="528.47375" y="599.8" width="1.6" height="1.6" fill="#555"/><rect x="531.6706250000001" y="599.4" width="1.4" height="1.2" fill="#555"/>
<rect x="538.525" y="590.5" width="10.587499999999999" height="6.300000000000001" fill="#262626"/>
<rect x="543.8187499999999" y="595.8" width="6.39375" height="3.2" rx="0.8" fill="#22cf93"/>
<rect x="541.2612499999999" y="599.8" width="1.6" height="1.6" fill="#555"/><rect x="544.458125" y="599.4" width="1.4" height="1.2" fill="#555"/>
<rect x="551.3125" y="590.5" width="10.587499999999999" height="6.300000000000001" fill="#262626"/>
<rect x="556.6062499999999" y="595.8" width="6.39375" height="3.2" rx="0.8" fill="#22cf93"/>
<rect x="554.0487499999999" y="599.8" width="1.6" height="1.6" fill="#555"/><rect x="557.245625" y="599.4" width="1.4" height="1.2" fill="#555"/>
<rect x="460.7" y="603.2" width="102.3" height="8.3" fill="#2fb98a"/>
<rect x="461.8" y="604.2" width="10.587499999999999" height="6.300000000000001" fill="#262626"/>
<rect x="467.09375" y="609.5" width="6.39375" height="3.2" rx="0.8" fill="#22cf93"/>
<rect x="474.58750000000003" y="604.2" width="10.587499999999999" height="6.300000000000001" fill="#262626"/>
<rect x="479.88125" y="609.5" width="6.39375" height="3.2" rx="0.8" fill="#22cf93"/>
<rect x="486.575" y="603.2" width="12.1875" height="8.3" fill="#f08a4b"/>
<rect x="487.375" y="604.2" width="10.587499999999999" height="6.300000000000001" fill="#262626"/>
<rect x="492.66875" y="609.5" width="6.39375" height="3.2" rx="0.8" fill="#f08a4b"/>
<rect x="500.1625" y="604.2" width="10.587499999999999" height="6.300000000000001" fill="#262626"/>
<rect x="505.45625" y="609.5" width="6.39375" height="3.2" rx="0.8" fill="#22cf93"/>
<rect x="512.9499999999999" y="604.2" width="10.587499999999999" height="6.300000000000001" fill="#262626"/>
<rect x="518.24375" y="609.5" width="6.39375" height="3.2" rx="0.8" fill="#22cf93"/>
<rect x="525.7375000000001" y="604.2" width="10.587499999999999" height="6.300000000000001" fill="#262626"/>
<rect x="531.03125" y="609.5" width="6.39375" height="3.2" rx="0.8" fill="#22cf93"/>
<rect x="538.525" y="604.2" width="10.587499999999999" height="6.300000000000001" fill="#262626"/>
<rect x="543.8187499999999" y="609.5" width="6.39375" height="3.2" rx="0.8" fill="#22cf93"/>
<rect x="551.3125" y="604.2" width="10.587499999999999" height="6.300000000000001" fill="#262626"/>
<rect x="556.6062499999999" y="609.5" width="6.39375" height="3.2" rx="0.8" fill="#22cf93"/>
<rect x="566.8" y="597.8" width="101.3" height="5.4" fill="#cdcdcd"/>
<rect x="566.8" y="589.5" width="101.3" height="8.3" fill="#2fb98a"/>
<rect x="567.9" y="590.5" width="10.462499999999999" height="6.300000000000001" fill="#262626"/>
<rect x="573.1312499999999" y="595.8" width="6.33125" height="3.2" rx="0.8" fill="#22cf93"/>
<rect x="570.59875" y="599.8" width="1.6" height="1.6" fill="#555"/><rect x="573.764375" y="599.4" width="1.4" height="1.2" fill="#555"/>
<rect x="580.5625" y="590.5" width="10.462499999999999" height="6.300000000000001" fill="#262626"/>
<rect x="585.7937499999999" y="595.8" width="6.33125" height="3.2" rx="0.8" fill="#22cf93"/>
<rect x="583.26125" y="599.8" width="1.6" height="1.6" fill="#555"/><rect x="586.426875" y="599.4" width="1.4" height="1.2" fill="#555"/>
<rect x="593.225" y="590.5" width="10.462499999999999" height="6.300000000000001" fill="#262626"/>
<rect x="598.45625" y="595.8" width="6.33125" height="3.2" rx="0.8" fill="#22cf93"/>
<rect x="595.92375" y="599.8" width="1.6" height="1.6" fill="#555"/><rect x="599.089375" y="599.4" width="1.4" height="1.2" fill="#555"/>
<rect x="605.8874999999999" y="590.5" width="10.462499999999999" height="6.300000000000001" fill="#262626"/>
<rect x="611.1187499999999" y="595.8" width="6.33125" height="3.2" rx="0.8" fill="#22cf93"/>
<rect x="608.58625" y="599.8" width="1.6" height="1.6" fill="#555"/><rect x="611.7518749999999" y="599.4" width="1.4" height="1.2" fill="#555"/>
<rect x="618.55" y="590.5" width="10.462499999999999" height="6.300000000000001" fill="#262626"/>
<rect x="623.7812499999999" y="595.8" width="6.33125" height="3.2" rx="0.8" fill="#22cf93"/>
<rect x="621.24875" y="599.8" width="1.6" height="1.6" fill="#555"/><rect x="624.414375" y="599.4" width="1.4" height="1.2" fill="#555"/>
<rect x="630.4124999999999" y="589.5" width="12.0625" height="8.3" fill="#f0c020"/>
<rect x="631.2125" y="590.5" width="10.462499999999999" height="6.300000000000001" fill="#262626"/>
<rect x="636.4437499999999" y="595.8" width="6.33125" height="3.2" rx="0.8" fill="#f0c020"/>
<rect x="633.91125" y="599.8" width="1.6" height="1.6" fill="#555"/><rect x="637.076875" y="599.4" width="1.4" height="1.2" fill="#555"/>
<rect x="643.875" y="590.5" width="10.462499999999999" height="6.300000000000001" fill="#262626"/>
<rect x="649.1062499999999" y="595.8" width="6.33125" height="3.2" rx="0.8" fill="#22cf93"/>
<rect x="646.57375" y="599.8" width="1.6" height="1.6" fill="#555"/><rect x="649.739375" y="599.4" width="1.4" height="1.2" fill="#555"/>
<rect x="656.5375" y="590.5" width="10.462499999999999" height="6.300000000000001" fill="#262626"/>
<rect x="661.76875" y="595.8" width="6.33125" height="3.2" rx="0.8" fill="#22cf93"/>
<rect x="659.23625" y="599.8" width="1.6" height="1.6" fill="#555"/><rect x="662.401875" y="599.4" width="1.4" height="1.2" fill="#555"/>
<rect x="566.8" y="603.2" width="101.3" height="8.3" fill="#2fb98a"/>
<rect x="567.9" y="604.2" width="10.462499999999999" height="6.300000000000001" fill="#262626"/>
<rect x="573.1312499999999" y="609.5" width="6.33125" height="3.2" rx="0.8" fill="#22cf93"/>
<rect x="580.5625" y="604.2" width="10.462499999999999" height="6.300000000000001" fill="#262626"/>
<rect x="585.7937499999999" y="609.5" width="6.33125" height="3.2" rx="0.8" fill="#22cf93"/>
<rect x="593.225" y="604.2" width="10.462499999999999" height="6.300000000000001" fill="#262626"/>
<rect x="598.45625" y="609.5" width="6.33125" height="3.2" rx="0.8" fill="#22cf93"/>
<rect x="605.8874999999999" y="604.2" width="10.462499999999999" height="6.300000000000001" fill="#262626"/>
<rect x="611.1187499999999" y="609.5" width="6.33125" height="3.2" rx="0.8" fill="#22cf93"/>
<rect x="618.55" y="604.2" width="10.462499999999999" height="6.300000000000001" fill="#262626"/>
<rect x="623.7812499999999" y="609.5" width="6.33125" height="3.2" rx="0.8" fill="#22cf93"/>
<rect x="631.2125" y="604.2" width="10.462499999999999" height="6.300000000000001" fill="#262626"/>
<rect x="636.4437499999999" y="609.5" width="6.33125" height="3.2" rx="0.8" fill="#22cf93"/>
<rect x="643.875" y="604.2" width="10.462499999999999" height="6.300000000000001" fill="#262626"/>
<rect x="649.1062499999999" y="609.5" width="6.33125" height="3.2" rx="0.8" fill="#22cf93"/>
<rect x="656.5375" y="604.2" width="10.462499999999999" height="6.300000000000001" fill="#262626"/>
<rect x="661.76875" y="609.5" width="6.33125" height="3.2" rx="0.8" fill="#22cf93"/>
<rect x="672.3" y="597.8" width="101" height="5.4" fill="#cdcdcd"/>
<rect x="672.3" y="589.5" width="101" height="8.3" fill="#2fb98a"/>
<rect x="673.4" y="590.5" width="10.425" height="6.300000000000001" fill="#262626"/>
<rect x="678.6125" y="595.8" width="6.3125" height="3.2" rx="0.8" fill="#22cf93"/>
<rect x="676.0875" y="599.8" width="1.6" height="1.6" fill="#555"/><rect x="679.24375" y="599.4" width="1.4" height="1.2" fill="#555"/>
<rect x="686.025" y="590.5" width="10.425" height="6.300000000000001" fill="#262626"/>
<rect x="691.2375" y="595.8" width="6.3125" height="3.2" rx="0.8" fill="#22cf93"/>
<rect x="688.7125" y="599.8" width="1.6" height="1.6" fill="#555"/><rect x="691.86875" y="599.4" width="1.4" height="1.2" fill="#555"/>
<rect x="698.65" y="590.5" width="10.425" height="6.300000000000001" fill="#262626"/>
<rect x="703.8625" y="595.8" width="6.3125" height="3.2" rx="0.8" fill="#22cf93"/>
<rect x="701.3375" y="599.8" width="1.6" height="1.6" fill="#555"/><rect x="704.49375" y="599.4" width="1.4" height="1.2" fill="#555"/>
<rect x="711.275" y="590.5" width="10.425" height="6.300000000000001" fill="#262626"/>
<rect x="716.4875" y="595.8" width="6.3125" height="3.2" rx="0.8" fill="#22cf93"/>
<rect x="713.9625" y="599.8" width="1.6" height="1.6" fill="#555"/><rect x="717.11875" y="599.4" width="1.4" height="1.2" fill="#555"/>
<rect x="723.9" y="590.5" width="10.425" height="6.300000000000001" fill="#262626"/>
<rect x="729.1125" y="595.8" width="6.3125" height="3.2" rx="0.8" fill="#22cf93"/>
<rect x="726.5875" y="599.8" width="1.6" height="1.6" fill="#555"/><rect x="729.74375" y="599.4" width="1.4" height="1.2" fill="#555"/>
<rect x="736.525" y="590.5" width="10.425" height="6.300000000000001" fill="#262626"/>
<rect x="741.7375" y="595.8" width="6.3125" height="3.2" rx="0.8" fill="#22cf93"/>
<rect x="739.2125" y="599.8" width="1.6" height="1.6" fill="#555"/><rect x="742.36875" y="599.4" width="1.4" height="1.2" fill="#555"/>
<rect x="748.3499999999999" y="589.5" width="12.025" height="8.3" fill="#e8455e"/>
<rect x="749.15" y="590.5" width="10.425" height="6.300000000000001" fill="#262626"/>
<rect x="754.3625" y="595.8" width="6.3125" height="3.2" rx="0.8" fill="#e8455e"/>
<rect x="751.8375" y="599.8" width="1.6" height="1.6" fill="#555"/><rect x="754.99375" y="599.4" width="1.4" height="1.2" fill="#555"/>
<rect x="761.775" y="590.5" width="10.425" height="6.300000000000001" fill="#262626"/>
<rect x="766.9875" y="595.8" width="6.3125" height="3.2" rx="0.8" fill="#22cf93"/>
<rect x="764.4625" y="599.8" width="1.6" height="1.6" fill="#555"/><rect x="767.61875" y="599.4" width="1.4" height="1.2" fill="#555"/>
<rect x="672.3" y="603.2" width="101" height="8.3" fill="#2fb98a"/>
<rect x="673.4" y="604.2" width="10.425" height="6.300000000000001" fill="#262626"/>
<rect x="678.6125" y="609.5" width="6.3125" height="3.2" rx="0.8" fill="#22cf93"/>
<rect x="685.2249999999999" y="603.2" width="12.025" height="8.3" fill="#e8455e"/>
<rect x="686.025" y="604.2" width="10.425" height="6.300000000000001" fill="#262626"/>
<rect x="691.2375" y="609.5" width="6.3125" height="3.2" rx="0.8" fill="#e8455e"/>
<rect x="698.65" y="604.2" width="10.425" height="6.300000000000001" fill="#262626"/>
<rect x="703.8625" y="609.5" width="6.3125" height="3.2" rx="0.8" fill="#22cf93"/>
<rect x="711.275" y="604.2" width="10.425" height="6.300000000000001" fill="#262626"/>
<rect x="716.4875" y="609.5" width="6.3125" height="3.2" rx="0.8" fill="#22cf93"/>
<rect x="723.9" y="604.2" width="10.425" height="6.300000000000001" fill="#262626"/>
<rect x="729.1125" y="609.5" width="6.3125" height="3.2" rx="0.8" fill="#22cf93"/>
<rect x="736.525" y="604.2" width="10.425" height="6.300000000000001" fill="#262626"/>
<rect x="741.7375" y="609.5" width="6.3125" height="3.2" rx="0.8" fill="#22cf93"/>
<rect x="749.15" y="604.2" width="10.425" height="6.300000000000001" fill="#262626"/>
<rect x="754.3625" y="609.5" width="6.3125" height="3.2" rx="0.8" fill="#22cf93"/>
<rect x="761.775" y="604.2" width="10.425" height="6.300000000000001" fill="#262626"/>
<rect x="766.9875" y="609.5" width="6.3125" height="3.2" rx="0.8" fill="#22cf93"/>
<rect x="777.5" y="597.8" width="29" height="5.4" fill="#efefef"/>
<rect x="777.5" y="589.5" width="29" height="8.3" fill="#2fb98a"/>
<rect x="778.6" y="590.5" width="12.3" height="6.300000000000001" fill="#262626"/>
<rect x="784.75" y="595.8" width="7.25" height="3.2" rx="0.8" fill="#22cf93"/>
<rect x="781.85" y="599.8" width="1.6" height="1.6" fill="#555"/><rect x="785.475" y="599.4" width="1.4" height="1.2" fill="#555"/>
<rect x="793.1" y="590.5" width="12.3" height="6.300000000000001" fill="#262626"/>
<rect x="799.25" y="595.8" width="7.25" height="3.2" rx="0.8" fill="#22cf93"/>
<rect x="796.35" y="599.8" width="1.6" height="1.6" fill="#555"/><rect x="799.975" y="599.4" width="1.4" height="1.2" fill="#555"/>
<rect x="777.5" y="603.2" width="29" height="8.3" fill="#2fb98a"/>
<rect x="777.8" y="603.2" width="13.9" height="8.3" fill="#f08a4b"/>
<rect x="778.6" y="604.2" width="12.3" height="6.300000000000001" fill="#262626"/>
<rect x="784.75" y="609.5" width="7.25" height="3.2" rx="0.8" fill="#f08a4b"/>
<rect x="793.1" y="604.2" width="12.3" height="6.300000000000001" fill="#262626"/>
<rect x="799.25" y="609.5" width="7.25" height="3.2" rx="0.8" fill="#22cf93"/>
<rect x="445" y="613.0" width="370" height="4" fill="url(#perf3)"/>
<rect x="445" y="583.4000000000001" width="370" height="4" fill="url(#perf2)"/>
</svg>
<div class="a" style="left:949px;top:46px;width:248px;height:622.5px;background:#fff;border-radius:0 4px 4px 0;border-left:1px solid #ebebeb"></div>
<div class="a" style="left:949px;top:168.5px;width:248px;height:1px;background:#ececec"></div>
<div class="a" style="left:949px;top:318.5px;width:248px;height:1px;background:#ececec"></div>
<div class="a" style="left:942px;top:326px;width:7px;height:25px;background:#ececec"></div>
<svg class="a" style="left:943.5px;top:335px" width="4" height="7" viewBox="0 0 4 7"><path d="M0 0L4 3.5L0 7Z" fill="#c6c6c6"/></svg>
<svg class="a" style="left:959px;top:63px" width="25" height="25" viewBox="0 0 25 25"><circle cx="12.3" cy="12.3" r="12.4" fill="#12bd89"/>
<path d="M6 5.7H19V15H17.2V17H15.7V19.1H9.3V17H7.8V15H6Z" fill="#f6f6f6" stroke="#2a2a2a" stroke-width="0.45"/><path d="M7.3 5.7L8.3 7.6L9.3 5.7ZM10.2 5.7L11.2 7.6L12.2 5.7ZM13.1 5.7L14.1 7.6L15.1 5.7ZM16 5.7L17 7.6L18 5.7Z" fill="#2a2a2a"/></svg>
<div class="a " style="left:988.5px;top:67.7px;transform:translateY(-50%);font-size:11.25px;letter-spacing:-0.47px;color:#333;line-height:12px">Rcaltck:PCI0/6</div>
<div class="a " style="left:989px;top:83.7px;transform:translateY(-50%);font-size:7.5px;color:#888;line-height:9px">网络接口</div>
<svg class="a" style="left:1163px;top:63.5px" width="9" height="9" viewBox="0 0 9 9" fill="none" stroke="#aaa" stroke-width="0.9"><path d="M1.5 6.5L6 2L7.2 3.2L2.7 7.7H1.5Z"/><path d="M0.5 8.5H8.5"/></svg>
<svg class="a" style="left:1178.5px;top:63.5px" width="9" height="9" viewBox="0 0 9 9" fill="none" stroke="#555" stroke-width="0.9"><path d="M7.6 4.6A3.2 3.2 0 1 1 6.4 2"/><path d="M6.9 0.6V2.6H4.9" /></svg>
<div class="a lbl" style="left:959px;top:105.8px;transform:translateY(-50%);">资源名称</div>
<div class="a val" style="left:959px;top:118.3px;transform:translateY(-50%);">Rcaltck:PCI0/6</div>
<div class="a lbl" style="left:1051px;top:105.8px;transform:translateY(-50%);">资源编号</div>
<div class="a val" style="left:1051px;top:118.3px;transform:translateY(-50%);">6</div>
<div class="a lbl" style="left:1143px;top:105.8px;transform:translateY(-50%);">资源参数</div>
<div class="a val" style="left:1143px;top:118.3px;transform:translateY(-50%);">-</div>
<div class="a lbl" style="left:959px;top:139.5px;transform:translateY(-50%);">模块号</div>
<div class="a val" style="left:959px;top:153.7px;transform:translateY(-50%);">-</div>
<div class="a lbl" style="left:1143px;top:139.5px;transform:translateY(-50%);">描述信息</div>
<div class="a val" style="left:1143px;top:153.7px;transform:translateY(-50%);">网络接口6</div>
<div class="a lbl" style="left:1051px;top:139.5px;transform:translateY(-50%);">管理状态</div>
<div class="a" style="left:1051px;top:148px;width:25px;height:11.5px;border-radius:6px;background:#4a69fe"></div>
<div class="a" style="left:1065.5px;top:149.2px;width:9.2px;height:9.2px;border-radius:5px;background:#fff"></div>
<div class="a " style="left:959px;top:186.2px;transform:translateY(-50%);font-size:8.75px;color:#333;line-height:10px">最新重要告警</div>
<div class="a " style="left:1173px;top:185.5px;transform:translateY(-50%);font-size:7.5px;color:#999;line-height:9px">更多</div>
<div class="a" style="left:963.2px;top:212px;width:1px;height:72px;background:#c2c6f9"></div>
<div class="a" style="left:959.2px;top:204.7px;width:9px;height:9px;border-radius:5px;background:#f23e5e;color:#fff;font-size:6.5px;line-height:9px;text-align:center;font-weight:bold">!</div>
<div class="a " style="left:971.5px;top:209.2px;transform:translateY(-50%);font-size:7.6px;color:#999;line-height:9px">2021-03-21 10:09:03</div>
<div class="a " style="left:971.5px;top:224.7px;transform:translateY(-50%);font-size:8.75px;color:#f0506e;line-height:10px">网络接口(Rcaltck:PCI0/6)丢包率&gt;=90%!</div>
<div class="a" style="left:959.2px;top:243.5px;width:9px;height:9px;border-radius:5px;background:#6f67ee;color:#fff;font-size:6.5px;line-height:9px;text-align:center;font-weight:bold">?</div>
<div class="a " style="left:971.5px;top:248px;transform:translateY(-50%);font-size:7.6px;color:#999;line-height:9px">2021-03-21 10:09:03</div>
<div class="a " style="left:971.5px;top:263.5px;transform:translateY(-50%);font-size:8.75px;color:#6a6cf2;line-height:10px">网络接口(Rcaltck:PCI0/6)丢包率未知!</div>
<div class="a" style="left:959.2px;top:281.2px;width:9px;height:9px;border-radius:5px;background:#f7773b;color:#fff;font-size:6.5px;line-height:9px;text-align:center;font-weight:bold">!</div>
<div class="a " style="left:971.5px;top:285.7px;transform:translateY(-50%);font-size:7.6px;color:#999;line-height:9px">2021-03-21 10:09:03</div>
<div class="a " style="left:971.5px;top:302.3px;transform:translateY(-50%);font-size:8.75px;color:#f5864f;line-height:10px">网络接口(Rcaltck:PCI0/6)丢包率&gt;=80%!</div>
<div class="a " style="left:959px;top:336.2px;transform:translateY(-50%);font-size:8.75px;color:#333;line-height:10px">关键指标</div>
<div class="a " style="left:1046px;top:336.3px;transform:translateY(-50%);font-size:7.7px;color:#999;line-height:9px">2021/02/21 10:09 - 2021/03/21 14:55</div>
<svg class="a" style="left:1178.5px;top:331px" width="10" height="10" viewBox="0 0 10 10" fill="none" stroke="#777" stroke-width="0.8"><rect x="0.5" y="1.5" width="9" height="8" rx="1"/><path d="M0.5 4H9.5M3 0.5V2.5M7 0.5V2.5M2.5 5.8H3.5M4.5 5.8H5.5M6.5 5.8H7.5M2.5 7.6H3.5M4.5 7.6H5.5M6.5 7.6H7.5"/></svg>
<div class="a " style="left:959px;top:359.5px;transform:translateY(-50%);font-size:7.5px;color:#3a3a3a;line-height:9px">网口丢包率</div>
<div class="a" style="left:1000.6px;top:353.3px;width:38px;height:12px;background:#e3f8f0;border-radius:2px;color:#1fbf87;font-size:7.5px;line-height:12px;text-align:center">当前:40%</div>
<div class="a " style="left:960px;top:376.7px;transform:translateY(-50%);font-size:7.5px;color:#aaa;line-height:9px">单位:%</div>
<svg class="a" style="left:955px;top:381.0px" width="235" height="125" viewBox="955 381.0 235 125"><defs><linearGradient id="ar" x1="0" y1="0" x2="0" y2="1"><stop offset="0" stop-color="#c3cbfa" stop-opacity="0.8"/><stop offset="1" stop-color="#f3f4fe" stop-opacity="0.5"/></linearGradient></defs><path d="M984 391.00H1181" stroke="#e6e6e6" stroke-width="0.7" stroke-dasharray="1.5 2"/><text x="977" y="393.60" font-size="7.5" fill="#999" text-anchor="end" font-family="Liberation Sans">300</text><path d="M984 405.25H1181" stroke="#e6e6e6" stroke-width="0.7" stroke-dasharray="1.5 2"/><text x="977" y="407.85" font-size="7.5" fill="#999" text-anchor="end" font-family="Liberation Sans">250</text><path d="M984 419.50H1181" stroke="#e6e6e6" stroke-width="0.7" stroke-dasharray="1.5 2"/><text x="977" y="422.10" font-size="7.5" fill="#999" text-anchor="end" font-family="Liberation Sans">200</text><path d="M984 433.75H1181" stroke="#e6e6e6" stroke-width="0.7" stroke-dasharray="1.5 2"/><text x="977" y="436.35" font-size="7.5" fill="#999" text-anchor="end" font-family="Liberation Sans">150</text><path d="M984 448.00H1181" stroke="#e6e6e6" stroke-width="0.7" stroke-dasharray="1.5 2"/><text x="977" y="450.60" font-size="7.5" fill="#999" text-anchor="end" font-family="Liberation Sans">100</text><path d="M984 462.25H1181" stroke="#e6e6e6" stroke-width="0.7" stroke-dasharray="1.5 2"/><text x="977" y="464.85" font-size="7.5" fill="#999" text-anchor="end" font-family="Liberation Sans">50</text><path d="M984 476.50H1181" stroke="#e0e0e0" stroke-width="0.8"/><text x="977" y="479.10" font-size="7.5" fill="#999" text-anchor="end" font-family="Liberation Sans">0</text><path d="M985.1 458.4 C987.0 454.1 993.1 432.6 996.6 432.6 C1000.1 432.6 1003.3 456.0 1006.4 458.5 C1009.5 461.1 1012.5 447.3 1015.1 448.0 C1017.7 448.7 1019.4 464.8 1022.0 462.5 C1024.7 460.3 1026.7 434.3 1031.0 434.3 C1035.3 434.3 1043.2 465.2 1047.9 462.5 C1052.6 459.9 1054.8 418.0 1059.4 418.4 C1064.1 418.7 1072.1 463.4 1075.8 464.8 C1079.5 466.2 1079.1 425.4 1081.5 426.6 C1083.9 427.8 1087.8 470.3 1090.3 471.9 C1092.8 473.6 1094.5 438.2 1096.3 436.6 C1098.1 435.0 1099.9 461.0 1101.2 462.5 C1102.5 464.1 1103.1 448.2 1104.0 446.0 C1104.9 443.8 1105.4 446.0 1106.5 449.4 C1107.6 452.8 1109.5 465.1 1110.8 466.5 C1112.1 467.9 1113.4 459.2 1114.3 457.7 C1115.2 456.2 1115.6 461.9 1116.2 457.7 C1116.8 453.5 1117.0 430.2 1118.1 432.6 C1119.1 435.0 1121.1 475.8 1122.5 471.9 C1123.9 468.0 1125.2 409.2 1126.6 409.2 C1128.0 409.2 1127.1 466.6 1130.7 471.9 C1134.3 477.3 1141.7 440.7 1148.2 441.2 C1154.7 441.6 1165.0 472.8 1169.5 474.8 C1174.0 476.8 1173.4 453.4 1175.0 453.1 C1176.6 452.8 1178.6 469.8 1179.3 473.1 L1179.3 476.5 L985.1 476.5Z" fill="url(#ar)"/><path d="M985.1 458.4 C987.0 454.1 993.1 432.6 996.6 432.6 C1000.1 432.6 1003.3 456.0 1006.4 458.5 C1009.5 461.1 1012.5 447.3 1015.1 448.0 C1017.7 448.7 1019.4 464.8 1022.0 462.5 C1024.7 460.3 1026.7 434.3 1031.0 434.3 C1035.3 434.3 1043.2 465.2 1047.9 462.5 C1052.6 459.9 1054.8 418.0 1059.4 418.4 C1064.1 418.7 1072.1 463.4 1075.8 464.8 C1079.5 466.2 1079.1 425.4 1081.5 426.6 C1083.9 427.8 1087.8 470.3 1090.3 471.9 C1092.8 473.6 1094.5 438.2 1096.3 436.6 C1098.1 435.0 1099.9 461.0 1101.2 462.5 C1102.5 464.1 1103.1 448.2 1104.0 446.0 C1104.9 443.8 1105.4 446.0 1106.5 449.4 C1107.6 452.8 1109.5 465.1 1110.8 466.5 C1112.1 467.9 1113.4 459.2 1114.3 457.7 C1115.2 456.2 1115.6 461.9 1116.2 457.7 C1116.8 453.5 1117.0 430.2 1118.1 432.6 C1119.1 435.0 1121.1 475.8 1122.5 471.9 C1123.9 468.0 1125.2 409.2 1126.6 409.2 C1128.0 409.2 1127.1 466.6 1130.7 471.9 C1134.3 477.3 1141.7 440.7 1148.2 441.2 C1154.7 441.6 1165.0 472.8 1169.5 474.8 C1174.0 476.8 1173.4 453.4 1175.0 453.1 C1176.6 452.8 1178.6 469.8 1179.3 473.1" fill="none" stroke="#6580f6" stroke-width="1.25"/><path d="M1081.8 391.0V476.5" stroke="#c3ccfb" stroke-width="1"/><circle cx="1081.5" cy="426.62" r="3.3" fill="#fff" stroke="#6b82f5" stroke-width="1.2"/><text x="983.7" y="492.0" font-size="7.5" fill="#999" text-anchor="middle" font-family="Liberation Sans">10:00</text><text x="1015.2" y="492.0" font-size="7.5" fill="#999" text-anchor="middle" font-family="Liberation Sans">10:10</text><text x="1046.7" y="492.0" font-size="7.5" fill="#999" text-anchor="middle" font-family="Liberation Sans">10:20</text><text x="1078.2" y="492.0" font-size="7.5" fill="#4a69fe" text-anchor="middle" font-family="Liberation Sans">10:30</text><text x="1109.7" y="492.0" font-size="7.5" fill="#999" text-anchor="middle" font-family="Liberation Sans">10:40</text><text x="1141.2" y="492.0" font-size="7.5" fill="#999" text-anchor="middle" font-family="Liberation Sans">10:50</text><text x="1172.7" y="492.0" font-size="7.5" fill="#999" text-anchor="middle" font-family="Liberation Sans">11:00</text></svg>
<div class="a " style="left:959px;top:516.4px;transform:translateY(-50%);font-size:7.5px;color:#3a3a3a;line-height:9px">输入输出流量</div>
<div class="a" style="left:1006.5px;top:510.2px;width:43.5px;height:12px;background:#e3f8f0;border-radius:2px;color:#1fbf87;font-size:7.5px;line-height:12px;text-align:center">当前:407KB</div>
<div class="a " style="left:960px;top:533.6px;transform:translateY(-50%);font-size:7.5px;color:#aaa;line-height:9px">单位:KB</div>
<svg class="a" style="left:955px;top:537.9px" width="235" height="125" viewBox="955 537.9 235 125"><defs><linearGradient id="ar" x1="0" y1="0" x2="0" y2="1"><stop offset="0" stop-color="#c3cbfa" stop-opacity="0.8"/><stop offset="1" stop-color="#f3f4fe" stop-opacity="0.5"/></linearGradient></defs><path d="M984 547.90H1181" stroke="#e6e6e6" stroke-width="0.7" stroke-dasharray="1.5 2"/><text x="977" y="550.50" font-size="7.5" fill="#999" text-anchor="end" font-family="Liberation Sans">300</text><path d="M984 562.15H1181" stroke="#e6e6e6" stroke-width="0.7" stroke-dasharray="1.5 2"/><text x="977" y="564.75" font-size="7.5" fill="#999" text-anchor="end" font-family="Liberation Sans">250</text><path d="M984 576.40H1181" stroke="#e6e6e6" stroke-width="0.7" stroke-dasharray="1.5 2"/><text x="977" y="579.00" font-size="7.5" fill="#999" text-anchor="end" font-family="Liberation Sans">200</text><path d="M984 590.65H1181" stroke="#e6e6e6" stroke-width="0.7" stroke-dasharray="1.5 2"/><text x="977" y="593.25" font-size="7.5" fill="#999" text-anchor="end" font-family="Liberation Sans">150</text><path d="M984 604.90H1181" stroke="#e6e6e6" stroke-width="0.7" stroke-dasharray="1.5 2"/><text x="977" y="607.50" font-size="7.5" fill="#999" text-anchor="end" font-family="Liberation Sans">100</text><path d="M984 619.15H1181" stroke="#e6e6e6" stroke-width="0.7" stroke-dasharray="1.5 2"/><text x="977" y="621.75" font-size="7.5" fill="#999" text-anchor="end" font-family="Liberation Sans">50</text><path d="M984 633.40H1181" stroke="#e0e0e0" stroke-width="0.8"/><text x="977" y="636.00" font-size="7.5" fill="#999" text-anchor="end" font-family="Liberation Sans">0</text><path d="M985.1 615.3 C987.0 611.0 993.1 589.5 996.6 589.5 C1000.1 589.5 1003.3 612.9 1006.4 615.4 C1009.5 618.0 1012.5 604.2 1015.1 604.9 C1017.7 605.6 1019.4 621.7 1022.0 619.4 C1024.7 617.2 1026.7 591.2 1031.0 591.2 C1035.3 591.2 1043.2 622.1 1047.9 619.4 C1052.6 616.8 1054.8 574.9 1059.4 575.3 C1064.1 575.6 1072.1 620.3 1075.8 621.7 C1079.5 623.1 1079.1 582.3 1081.5 583.5 C1083.9 584.7 1087.8 627.2 1090.3 628.8 C1092.8 630.5 1094.5 595.1 1096.3 593.5 C1098.1 591.9 1099.9 617.9 1101.2 619.4 C1102.5 621.0 1103.1 605.1 1104.0 602.9 C1104.9 600.7 1105.4 602.9 1106.5 606.3 C1107.6 609.7 1109.5 622.0 1110.8 623.4 C1112.1 624.8 1113.4 616.1 1114.3 614.6 C1115.2 613.1 1115.6 618.8 1116.2 614.6 C1116.8 610.4 1117.0 587.1 1118.1 589.5 C1119.1 591.9 1121.1 632.7 1122.5 628.8 C1123.9 624.9 1125.2 566.1 1126.6 566.1 C1128.0 566.1 1127.1 623.5 1130.7 628.8 C1134.3 634.2 1141.7 597.6 1148.2 598.1 C1154.7 598.5 1165.0 629.7 1169.5 631.7 C1174.0 633.7 1173.4 610.3 1175.0 610.0 C1176.6 609.7 1178.6 626.7 1179.3 630.0 L1179.3 633.4 L985.1 633.4Z" fill="url(#ar)"/><path d="M985.1 615.3 C987.0 611.0 993.1 589.5 996.6 589.5 C1000.1 589.5 1003.3 612.9 1006.4 615.4 C1009.5 618.0 1012.5 604.2 1015.1 604.9 C1017.7 605.6 1019.4 621.7 1022.0 619.4 C1024.7 617.2 1026.7 591.2 1031.0 591.2 C1035.3 591.2 1043.2 622.1 1047.9 619.4 C1052.6 616.8 1054.8 574.9 1059.4 575.3 C1064.1 575.6 1072.1 620.3 1075.8 621.7 C1079.5 623.1 1079.1 582.3 1081.5 583.5 C1083.9 584.7 1087.8 627.2 1090.3 628.8 C1092.8 630.5 1094.5 595.1 1096.3 593.5 C1098.1 591.9 1099.9 617.9 1101.2 619.4 C1102.5 621.0 1103.1 605.1 1104.0 602.9 C1104.9 600.7 1105.4 602.9 1106.5 606.3 C1107.6 609.7 1109.5 622.0 1110.8 623.4 C1112.1 624.8 1113.4 616.1 1114.3 614.6 C1115.2 613.1 1115.6 618.8 1116.2 614.6 C1116.8 610.4 1117.0 587.1 1118.1 589.5 C1119.1 591.9 1121.1 632.7 1122.5 628.8 C1123.9 624.9 1125.2 566.1 1126.6 566.1 C1128.0 566.1 1127.1 623.5 1130.7 628.8 C1134.3 634.2 1141.7 597.6 1148.2 598.1 C1154.7 598.5 1165.0 629.7 1169.5 631.7 C1174.0 633.7 1173.4 610.3 1175.0 610.0 C1176.6 609.7 1178.6 626.7 1179.3 630.0" fill="none" stroke="#6580f6" stroke-width="1.25"/><path d="M1081.8 547.9V633.4" stroke="#c3ccfb" stroke-width="1"/><circle cx="1081.5" cy="583.52" r="3.3" fill="#fff" stroke="#6b82f5" stroke-width="1.2"/><text x="983.7" y="648.9" font-size="7.5" fill="#999" text-anchor="middle" font-family="Liberation Sans">10:00</text><text x="1015.2" y="648.9" font-size="7.5" fill="#999" text-anchor="middle" font-family="Liberation Sans">10:10</text><text x="1046.7" y="648.9" font-size="7.5" fill="#999" text-anchor="middle" font-family="Liberation Sans">10:20</text><text x="1078.2" y="648.9" font-size="7.5" fill="#4a69fe" text-anchor="middle" font-family="Liberation Sans">10:30</text><text x="1109.7" y="648.9" font-size="7.5" fill="#999" text-anchor="middle" font-family="Liberation Sans">10:40</text><text x="1141.2" y="648.9" font-size="7.5" fill="#999" text-anchor="middle" font-family="Liberation Sans">10:50</text><text x="1172.7" y="648.9" font-size="7.5" fill="#999" text-anchor="middle" font-family="Liberation Sans">11:00</text></svg>
</body></html>
